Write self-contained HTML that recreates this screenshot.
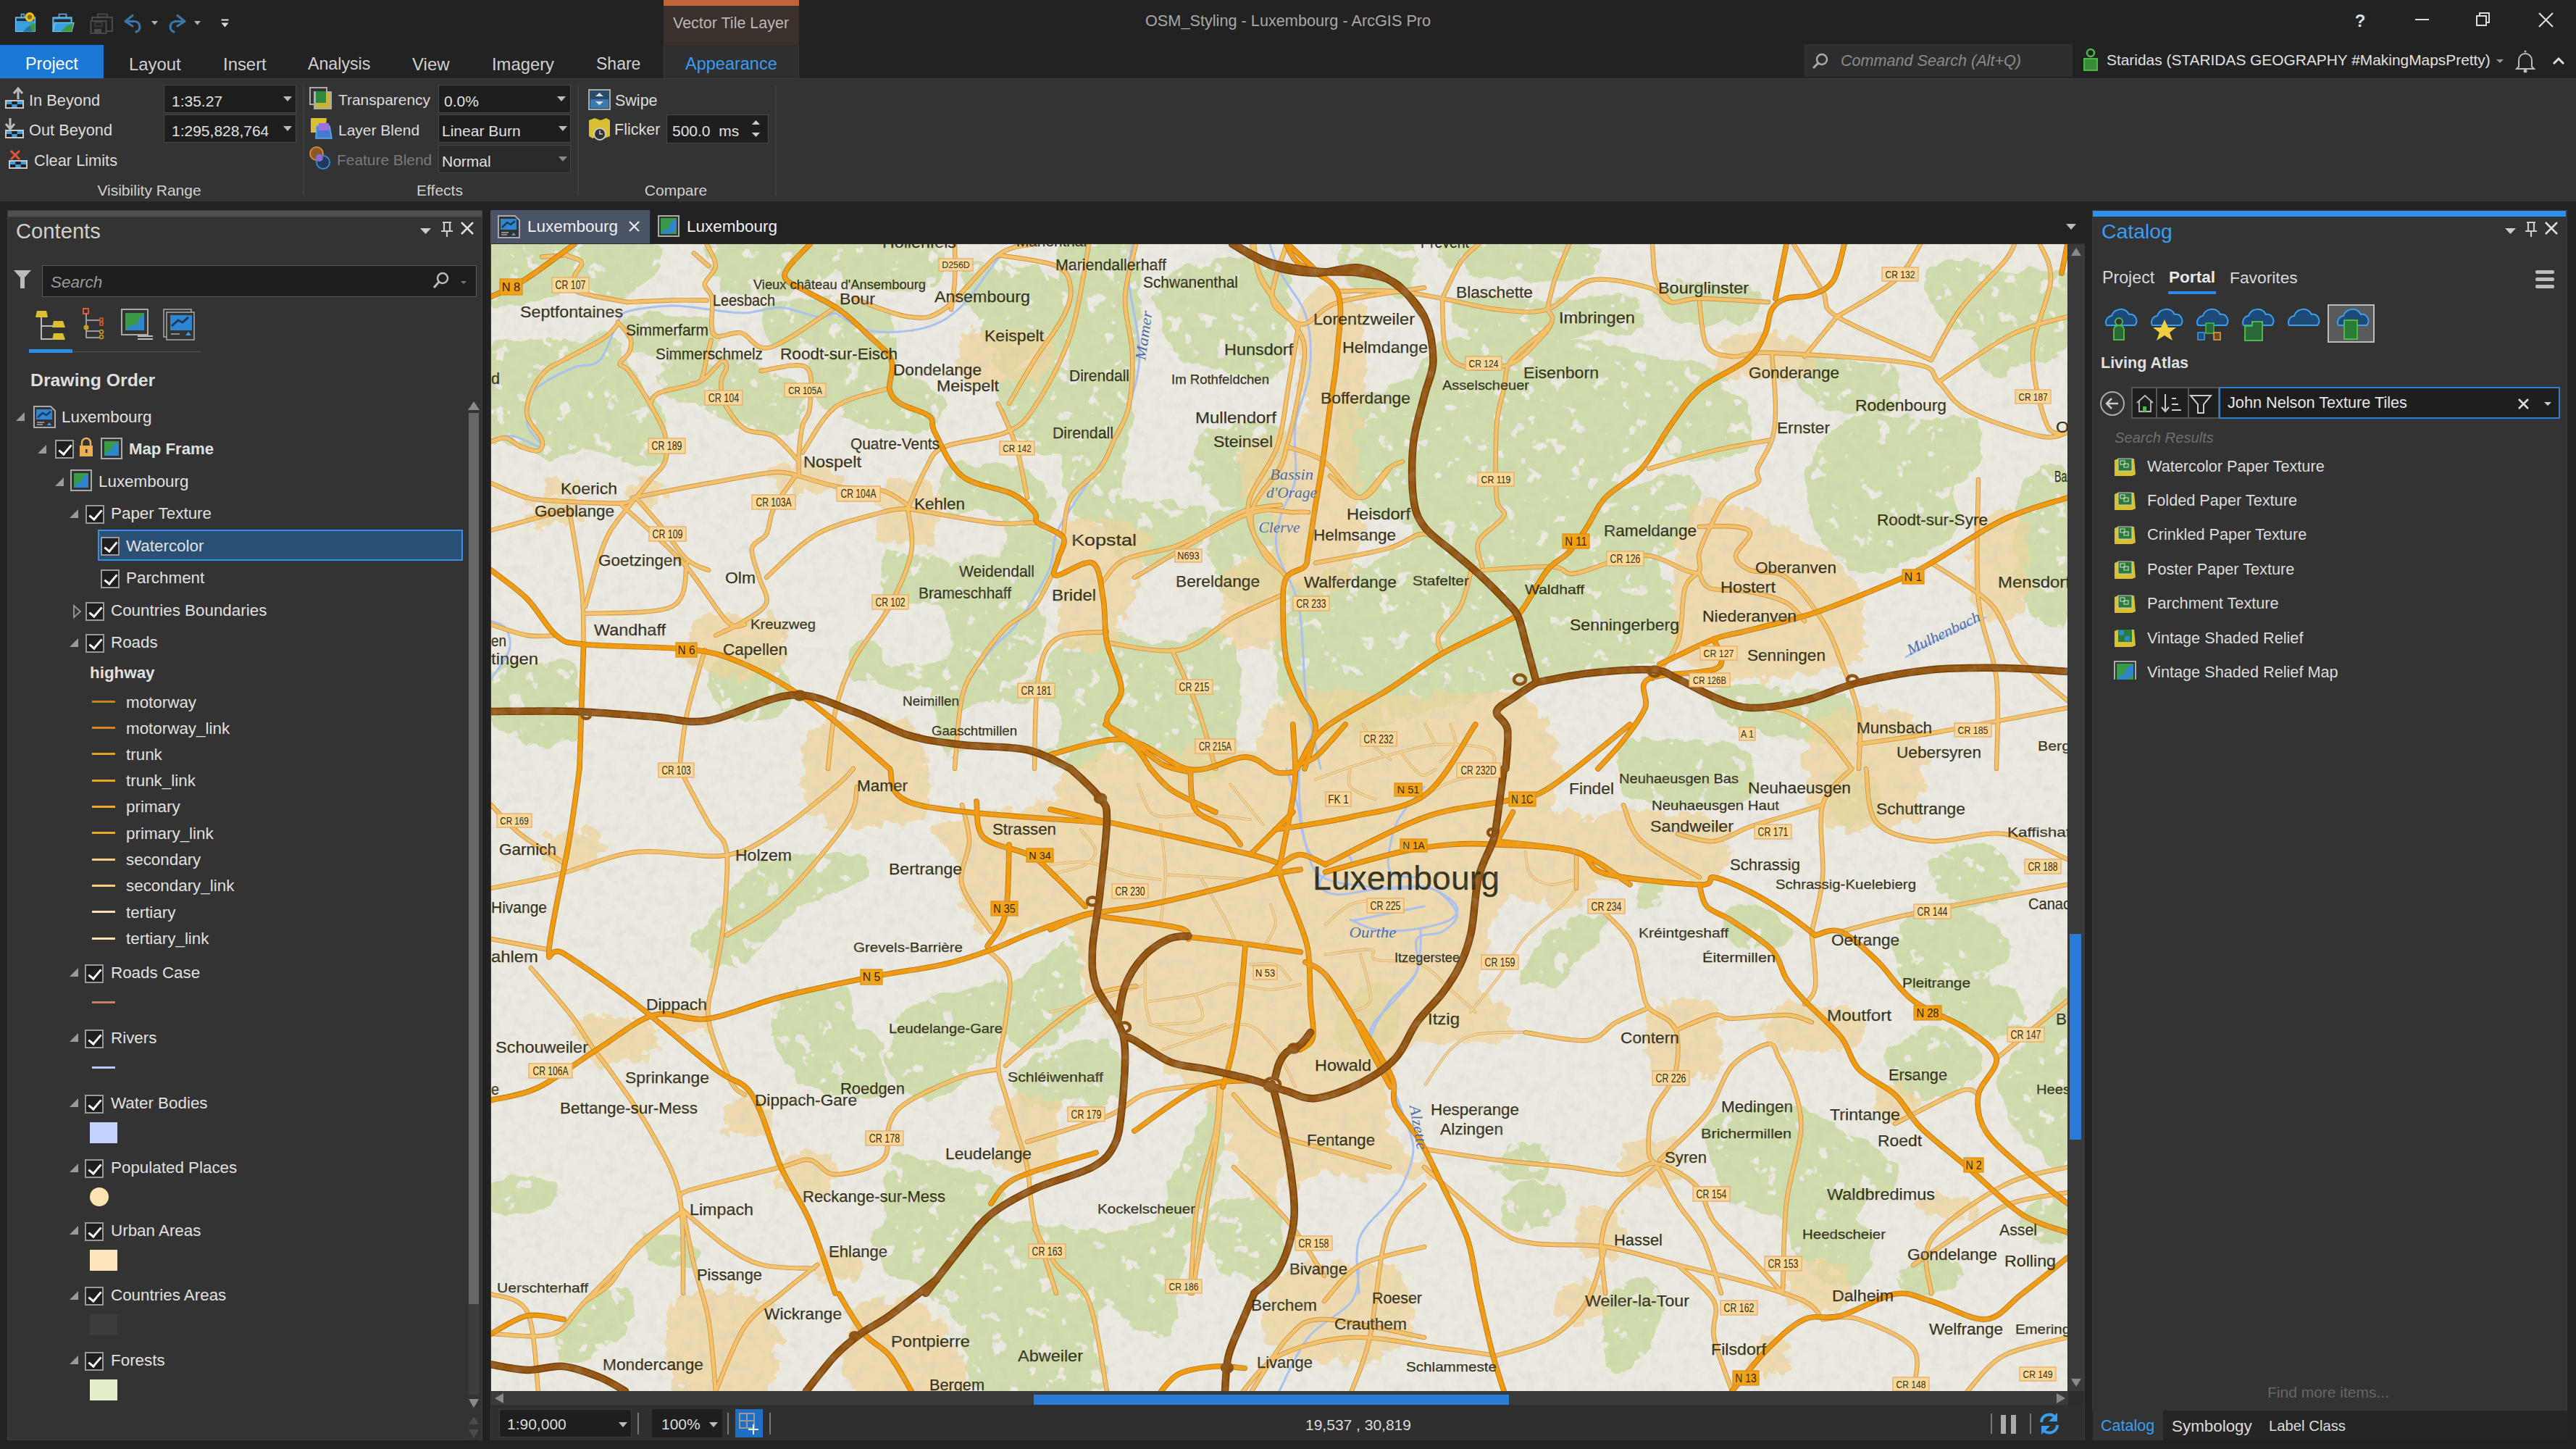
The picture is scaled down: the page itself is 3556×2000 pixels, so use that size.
<!DOCTYPE html>
<html><head><meta charset="utf-8">
<style>
*{margin:0;padding:0;box-sizing:border-box}
html,body{width:3556px;height:2000px;overflow:hidden;background:#222;font-family:"Liberation Sans",sans-serif;color:#ddd}
.a{position:absolute}
.t{position:absolute;white-space:nowrap;line-height:1}
.cb{position:absolute;background:#1e1e1e;border:1px solid #474747}
.dd{position:absolute;width:0;height:0;border-left:6px solid transparent;border-right:6px solid transparent;border-top:7px solid #bbb}
.sep{position:absolute;width:2px;background:#3d3d3d}
.chk{position:absolute;width:26px;height:26px;border:2px solid #9a9a9a;background:#1e1e1e}
.chk:after{content:"";position:absolute;left:7px;top:1px;width:7px;height:15px;border-right:3px solid #fff;border-bottom:3px solid #fff;transform:rotate(40deg)}
.tri{position:absolute;width:0;height:0;border-left:12px solid transparent;border-bottom:12px solid #9a9a9a}
.tree{font-size:22.4px;color:#e0e0e0}
.leg{position:absolute;width:32px;height:3px}
</style></head><body>
<!-- TITLE BAR -->
<div class="a" style="left:0;top:0;width:3556px;height:108px;background:#222"></div>
<svg class="a" style="left:0;top:0" width="330" height="62">
 <!-- new project -->
 <rect x="29.5" y="19.5" width="4" height="5" fill="none" stroke="#5ab0e8" stroke-width="1.6"/>
 <rect x="21.5" y="24" width="27" height="19.5" fill="#3a9ee0" stroke="#7cc4f0" stroke-width="1.2"/>
 <rect x="23" y="25.5" width="24" height="3.5" fill="#2a2a2a"/>
 <path d="M32 43.5 Q40 33 48.5 32 V43.5 Z" fill="#3a9a3a"/><path d="M32 43.5 Q38 37 42 36 L44 43.5 Z" fill="#2c70b0"/>
 <circle cx="41" cy="23.5" r="6.5" fill="#e8c020"/><circle cx="41" cy="23.5" r="3.2" fill="#8a7010"/>
 <!-- open -->
 <rect x="81.5" y="19.5" width="10" height="5" fill="none" stroke="#5ab0e8" stroke-width="1.6"/>
 <rect x="73" y="24" width="26" height="19.5" fill="#3a9ee0" stroke="#7cc4f0" stroke-width="1.2"/>
 <rect x="74.5" y="26.5" width="23" height="4" fill="#2a2a2a"/>
 <path d="M73 43.5 L76 31.5 H102 L99 43.5 Z" fill="#3a9ee0" stroke="#7cc4f0" stroke-width="1.2"/>
 <path d="M84 43.5 Q92 34 101 33 L99 43.5 Z" fill="#3a9a3a"/>
 <!-- save all grey -->
 <rect x="135" y="19.5" width="13" height="4" fill="none" stroke="#4a4a4a" stroke-width="1.8"/>
 <rect x="127" y="24" width="28" height="19" fill="none" stroke="#4a4a4a" stroke-width="2"/>
 <rect x="125.5" y="29" width="21" height="17" fill="#222" stroke="#4a4a4a" stroke-width="2"/>
 <rect x="130" y="40" width="10" height="5" fill="#4a4a4a"/><rect x="131" y="31" width="10" height="5" fill="none" stroke="#4a4a4a" stroke-width="1.2"/>
 <!-- undo -->
 <path d="M176 29.5 H186 A7.5 7.5 0 0 1 188 44" fill="none" stroke="#3e75a8" stroke-width="3.2" stroke-linecap="round"/>
 <path d="M183 21.5 L173 29.5 L183 36" fill="none" stroke="#3e75a8" stroke-width="3.2" stroke-linejoin="round" stroke-linecap="round"/>
 <path d="M209 29 h9 l-4.5 5.5 z" fill="#b0b0b0"/>
 <!-- redo -->
 <path d="M252 29.5 H242 A7.5 7.5 0 0 0 240 44" fill="none" stroke="#3e75a8" stroke-width="3.2" stroke-linecap="round"/>
 <path d="M245 21.5 L255 29.5 L245 36" fill="none" stroke="#3e75a8" stroke-width="3.2" stroke-linejoin="round" stroke-linecap="round"/>
 <path d="M268 29 h9 l-4.5 5.5 z" fill="#b0b0b0"/>
 <!-- customize -->
 <rect x="305.5" y="26.5" width="10" height="2" fill="#ddd"/>
 <path d="M305.5 31.5 h10 l-5 6 z" fill="#ddd"/>
</svg>
<div class="a" style="left:916px;top:0;width:187px;height:62px;background:#3a302c"></div>
<div class="a" style="left:916px;top:0;width:187px;height:8px;background:#c0643c"></div>
<div class="t" style="left:929px;top:22px;font-size:21.5px;color:#b8b8b8">Vector Tile Layer</div>
<div class="t" style="left:1581px;top:18px;font-size:21.7px;color:#a8a8a8">OSM_Styling - Luxembourg - ArcGIS Pro</div>
<svg class="a" style="left:3240px;top:0" width="316" height="62">
 <text x="18" y="37" font-family="Liberation Sans" font-weight="bold" font-size="24" fill="#ddd" text-anchor="middle">?</text>
 <rect x="94" y="26" width="19" height="2" fill="#ddd"/>
 <rect x="179" y="22" width="13" height="13" fill="none" stroke="#ddd" stroke-width="2"/>
 <path d="M183 22 v-4 h13 v13 h-4" fill="none" stroke="#ddd" stroke-width="2"/>
 <path d="M265 18 L284 37 M284 18 L265 37" stroke="#ddd" stroke-width="2.2"/>
</svg>
<!-- tabs -->
<div class="a" style="left:0;top:62px;width:143px;height:46px;background:#1b78d4"></div>
<div class="t" style="left:35px;top:77px;font-size:23.4px;color:#fff">Project</div>
<div class="t" style="left:178px;top:77px;font-size:23.9px;color:#d0d0d0">Layout</div>
<div class="t" style="left:308px;top:77px;font-size:23.9px;color:#d0d0d0">Insert</div>
<div class="t" style="left:425px;top:77px;font-size:23.2px;color:#d0d0d0">Analysis</div>
<div class="t" style="left:569px;top:77px;font-size:24px;color:#d0d0d0">View</div>
<div class="t" style="left:679px;top:77px;font-size:23.8px;color:#d0d0d0">Imagery</div>
<div class="t" style="left:823px;top:77px;font-size:23px;color:#d0d0d0">Share</div>
<div class="a" style="left:916px;top:62px;width:187px;height:47px;background:#2f2f2f;border-left:1px solid #3a3a3a;border-right:1px solid #3a3a3a"></div>
<div class="t" style="left:946px;top:77px;font-size:23.5px;color:#3a9cf0">Appearance</div>
<!-- command search -->
<div class="a" style="left:2490px;top:61px;width:371px;height:45px;background:#2e2e2e"></div>
<svg class="a" style="left:2500px;top:72px" width="26" height="26"><circle cx="15" cy="10" r="7" fill="none" stroke="#aaa" stroke-width="2.5"/><path d="M10 15 L3 22" stroke="#aaa" stroke-width="3"/></svg>
<div class="t" style="left:2541px;top:73px;font-size:21.6px;color:#8a8a8a;font-style:italic">Command Search (Alt+Q)</div>
<svg class="a" style="left:2872px;top:66px" width="28" height="34"><circle cx="14" cy="7" r="5" fill="none" stroke="#4cb848" stroke-width="2.5"/><path d="M5 15 h18 v16 h-18 z" fill="#3a8a3a" stroke="#4cb848" stroke-width="2"/></svg>
<div class="t" style="left:2908px;top:73px;font-size:20.9px;color:#e0e0e0">Staridas (STARIDAS GEOGRAPHY #MakingMapsPretty)</div>
<svg class="a" style="left:3440px;top:66px" width="116" height="36">
 <path d="M6 16 h10 l-5 5 z" fill="#999"/>
 <path d="M37 26 v-9 a9 9 0 0 1 18 0 v9 l3 3 h-24 z" fill="none" stroke="#bbb" stroke-width="2"/>
 <circle cx="46" cy="32" r="2.5" fill="#bbb"/><circle cx="46" cy="5" r="1.5" fill="#bbb"/>
 <path d="M85 22 L92 15 L99 22" fill="none" stroke="#ddd" stroke-width="3"/>
</svg>
<!-- RIBBON -->
<div class="a" style="left:0;top:108px;width:3556px;height:170px;background:#333;border-top:1px solid #3e3e3e"></div>
<svg class="a" style="left:0;top:108px" width="1080" height="170">
 <!-- in beyond icon -->
 <g transform="translate(0,-108)">
 <rect x="7" y="138" width="26" height="12" fill="#c8c8c8"/><rect x="9" y="140" width="22" height="8" fill="#1e1e1e"/><rect x="9" y="140" width="7.33" height="4" fill="#3a9de0"/><rect x="23.67" y="140" width="7.33" height="4" fill="#3a9de0"/><rect x="16.33" y="144" width="7.33" height="4" fill="#3a9de0"/>
 <path d="M25 137 v-14 M19 129 L25 122 L31 129" fill="none" stroke="#bbb" stroke-width="3"/>
 <rect x="7" y="179" width="26" height="12" fill="#c8c8c8"/><rect x="9" y="181" width="22" height="8" fill="#1e1e1e"/><rect x="9" y="181" width="7.33" height="4" fill="#3a9de0"/><rect x="23.67" y="181" width="7.33" height="4" fill="#3a9de0"/><rect x="16.33" y="185" width="7.33" height="4" fill="#3a9de0"/>
 <path d="M14 163 v14 M8 171 L14 178 L20 171" fill="none" stroke="#bbb" stroke-width="3"/>
 <rect x="12" y="221" width="26" height="12" fill="#c8c8c8"/><rect x="14" y="223" width="22" height="8" fill="#1e1e1e"/><rect x="14" y="223" width="7.33" height="4" fill="#3a9de0"/><rect x="28.67" y="223" width="7.33" height="4" fill="#3a9de0"/><rect x="21.33" y="227" width="7.33" height="4" fill="#3a9de0"/>
 <path d="M15 208 L27 220 M27 208 L15 220" stroke="#e05a30" stroke-width="3"/>
 <!-- transparency -->
 <rect x="428" y="121" width="23" height="23" fill="none" stroke="#aaa" stroke-width="2"/>
 <rect x="434" y="127" width="23" height="23" fill="#c8b43a" stroke="#aaa" stroke-width="2"/>
 <rect x="436" y="126" width="14" height="16" fill="#2e8a3e"/>
 <!-- layer blend -->
 <path d="M429 163 h22 l-2 20 h-20 z" fill="#d8c030"/>
 <path d="M437 174 h18 l3 17 h-22 z" fill="#4a7ad0" stroke="#5ab0f0" stroke-width="1.5"/>
 <path d="M440 170 h14 l1 10 h-16 z" fill="#9a70e0"/>
 <!-- feature blend -->
 <circle cx="437" cy="212" r="9" fill="#8a5a20" stroke="#d08a40" stroke-width="2"/>
 <circle cx="446" cy="224" r="9" fill="#1e3a5a" stroke="#3a8ad0" stroke-width="2"/>
 <circle cx="441" cy="218" r="5" fill="#8a6ad8"/>
 <!-- swipe -->
 <rect x="813" y="124" width="29" height="27" fill="#2a4a6a" stroke="#aaa" stroke-width="2"/>
 <rect x="815" y="137" width="25" height="12" fill="#3a7ab0"/>
 <path d="M822 133 l5.5 -5 l5.5 5 z M822 140 l5.5 5 l5.5 -5 z" fill="#ddd"/>
 <!-- flicker -->
 <path d="M813 166 l8 -3 l8 3 l8 -3 l5 3 v22 l-8 3 l-8 -3 l-8 3 l-5 -3 z" fill="#d8c030"/>
 <circle cx="828" cy="185" r="8" fill="#333" stroke="#ccc" stroke-width="2"/>
 <path d="M828 180 v5 h4" stroke="#ccc" stroke-width="1.5" fill="none"/>
 </g>
</svg>
<div class="t" style="left:40px;top:128px;font-size:21.8px;color:#dcdcdc">In Beyond</div>
<div class="t" style="left:40px;top:169px;font-size:21.8px;color:#dcdcdc">Out Beyond</div>
<div class="t" style="left:47px;top:211px;font-size:21.8px;color:#dcdcdc">Clear Limits</div>
<div class="cb" style="left:226px;top:117px;width:183px;height:39px"></div>
<div class="t" style="left:237px;top:129px;font-size:21px;color:#e0e0e0">1:35.27</div>
<div class="dd" style="left:391px;top:133px"></div>
<div class="cb" style="left:226px;top:158px;width:183px;height:39px"></div>
<div class="t" style="left:237px;top:170px;font-size:21px;color:#e0e0e0">1:295,828,764</div>
<div class="dd" style="left:391px;top:174px"></div>
<div class="t" style="left:206px;top:252px;font-size:21px;color:#d0d0d0;transform:translateX(-50%)">Visibility Range</div>
<div class="sep" style="left:418px;top:117px;height:153px"></div>

<div class="t" style="left:467px;top:128px;font-size:20.9px;color:#dcdcdc">Transparency</div>
<div class="t" style="left:467px;top:169px;font-size:21px;color:#dcdcdc">Layer Blend</div>
<div class="t" style="left:465px;top:211px;font-size:20.9px;color:#7a7a7a">Feature Blend</div>
<div class="cb" style="left:605px;top:117px;width:183px;height:39px"></div>
<div class="t" style="left:613px;top:129px;font-size:21px;color:#e0e0e0">0.0%</div>
<div class="dd" style="left:769px;top:133px"></div>
<div class="cb" style="left:605px;top:158px;width:183px;height:39px"></div>
<div class="t" style="left:610px;top:170px;font-size:21px;color:#e0e0e0">Linear Burn</div>
<div class="dd" style="left:771px;top:174px"></div>
<div class="cb" style="left:605px;top:200px;width:183px;height:39px;background:#2a2a2a;border-color:#444"></div>
<div class="t" style="left:610px;top:212px;font-size:21px;color:#e0e0e0">Normal</div>
<div class="dd" style="left:771px;top:216px;border-top-color:#888"></div>
<div class="t" style="left:607px;top:252px;font-size:21px;color:#d0d0d0;transform:translateX(-50%)">Effects</div>
<div class="sep" style="left:797px;top:117px;height:153px"></div>

<div class="t" style="left:849px;top:129px;font-size:21.5px;color:#dcdcdc">Swipe</div>
<div class="t" style="left:848px;top:169px;font-size:21.5px;color:#dcdcdc">Flicker</div>
<div class="cb" style="left:920px;top:158px;width:141px;height:40px"></div>
<div class="t" style="left:928px;top:170px;font-size:21px;color:#e0e0e0">500.0&nbsp;&nbsp;ms</div>
<svg class="a" style="left:1036px;top:162px" width="16" height="32"><path d="M2 10 L7.5 4 L13 10 z M2 21 L7.5 27 L13 21 z" fill="#ccc"/></svg>
<div class="t" style="left:933px;top:252px;font-size:21px;color:#d0d0d0;transform:translateX(-50%)">Compare</div>
<div class="sep" style="left:1070px;top:117px;height:153px"></div>
<!-- CONTENTS -->
<div class="a" style="left:10px;top:290px;width:656px;height:1698px;background:#333;border:1px solid #3c3c3c"></div>
<div class="a" style="left:11px;top:291px;width:654px;height:8px;background:#505050"></div>
<div class="t" style="left:22px;top:305px;font-size:29.2px;color:#cfcfcf">Contents</div>
<svg class="a" style="left:570px;top:300px" width="95" height="32">
 <path d="M10 15 h15 l-7.5 8 z" fill="#ccc"/>
 <path d="M41 7 h12 M43 7 v12 h8 v-12 M39 19 h16 M47 19 v8" fill="none" stroke="#ccc" stroke-width="2.2"/>
 <path d="M67 7 L83 23 M83 7 L67 23" stroke="#ddd" stroke-width="2.5"/>
</svg>
<svg class="a" style="left:16px;top:370px" width="32" height="34"><path d="M3 3 h24 l-9 10 v15 h-6 v-15 z" fill="#bbb"/></svg>
<div class="a" style="left:58px;top:366px;width:600px;height:44px;background:#1e1e1e;border:1px solid #5a5a5a"></div>
<div class="t" style="left:70px;top:379px;font-size:22.5px;color:#9a9a9a;font-style:italic">Search</div>
<svg class="a" style="left:596px;top:374px" width="50" height="30">
 <circle cx="15" cy="10" r="7" fill="none" stroke="#bbb" stroke-width="2.5"/><path d="M10 15 L3 23" stroke="#bbb" stroke-width="3"/>
 <path d="M40 14 h8 l-4 4 z" fill="#777"/>
</svg>
<svg class="a" style="left:40px;top:420px" width="240" height="70">
 <!-- drawing order icon -->
 <path d="M11 9 h13 l2 9 h-17 z" fill="#d8c030"/>
 <path d="M17 18 v30 h16 M17 30 h16" fill="none" stroke="#bbb" stroke-width="2"/>
 <path d="M34 23 h13 l3 9 h-18 z M34 40 h13 l3 9 h-18 z" fill="#d8c030"/>
 <!-- source icon -->
 <rect x="75" y="6" width="7" height="7" fill="none" stroke="#e05a30" stroke-width="2"/>
 <path d="M79 13 v33 h18 M79 22 h18 M79 37 h18" fill="none" stroke="#bbb" stroke-width="1.5"/>
 <rect x="98" y="19" width="4" height="4" fill="none" stroke="#e05a30" stroke-width="1.5"/><rect x="98" y="25" width="4" height="4" fill="none" stroke="#e05a30" stroke-width="1.5"/>
 <circle cx="79" cy="32" r="3.5" fill="#c8a020"/><circle cx="100" cy="38" r="2.5" fill="none" stroke="#c8a020" stroke-width="1.5"/><circle cx="100" cy="45" r="2.5" fill="none" stroke="#c8a020" stroke-width="1.5"/>
 <!-- map icon -->
 <rect x="128" y="7" width="36" height="35" fill="none" stroke="#aaa" stroke-width="2"/>
 <rect x="133" y="12" width="26" height="24" fill="#3a9a4a"/>
 <path d="M133 36 L142 28 L148 30 L152 20 L159 14 L159 36 z" fill="#2f86d0"/>
 <path d="M150 44 h21 M150 48 h21" stroke="#bbb" stroke-width="2"/>
 <!-- layout icon -->
 <rect x="186" y="7" width="38" height="38" fill="none" stroke="#aaa" stroke-width="1.5"/>
 <rect x="190" y="11" width="38" height="38" fill="#333" stroke="#aaa" stroke-width="1.5"/>
 <rect x="195" y="15" width="30" height="21" fill="#2f86d0"/>
 <path d="M197 30 L206 22 L212 25 L220 18" stroke="#1e3a5a" stroke-width="3" fill="none"/>
 <path d="M196 41 h12" stroke="#aaa" stroke-width="1.5"/>
 <path d="M216 43 l4 -5 l4 5 z" fill="#3aa0f0"/>
</svg>
<div class="a" style="left:40px;top:482px;width:60px;height:5px;background:#2d8ce6"></div>
<div class="a" style="left:100px;top:485px;width:178px;height:1px;background:#555"></div>
<div class="t" style="left:42px;top:513px;font-size:24.8px;color:#dedede;font-weight:bold">Drawing Order</div>

<div class="tree">
<div class="tri" style="left:22px;top:569px"></div>
<svg class="a" style="left:46px;top:560px" width="32" height="32">
 <path d="M1 1 h23 l6 6 v23 h-29 z" fill="#333" stroke="#aaa" stroke-width="2"/>
 <rect x="4" y="5" width="22" height="14" fill="#2f86d0"/>
 <path d="M6 16 L13 10 L18 13 L24 8" stroke="#1e3a5a" stroke-width="2.5" fill="none"/>
 <path d="M5 23 h10 M5 26 h8" stroke="#aaa" stroke-width="1.3"/><path d="M19 27 l3 -4 l3 4 z" fill="#3aa0f0"/>
</svg>
<div class="t" style="left:85px;top:565px">Luxembourg</div>

<div class="tri" style="left:52px;top:614px"></div>
<div class="chk" style="left:76px;top:607px"></div>
<svg class="a" style="left:107px;top:603px" width="24" height="30"><path d="M6 12 v-4 a6 6 0 0 1 12 0 v4" fill="none" stroke="#e8b050" stroke-width="2.5"/><rect x="3" y="12" width="18" height="15" fill="#e8b050"/><rect x="11" y="17" width="2.5" height="5" fill="#333"/></svg>
<svg class="a" style="left:139px;top:604px" width="31" height="31"><rect x="1" y="1" width="28" height="28" fill="#333" stroke="#aaa" stroke-width="2"/><rect x="5" y="5" width="20" height="20" fill="#3a9a4a"/><path d="M5 25 L10 18 L14 19 L18 10 L25 6 L25 25 z" fill="#2f86d0"/></svg>
<div class="t" style="left:178px;top:609px;font-weight:bold;font-size:22.2px">Map Frame</div>

<div class="tri" style="left:76px;top:659px"></div>
<svg class="a" style="left:97px;top:648px" width="31" height="31"><rect x="1" y="1" width="28" height="28" fill="#333" stroke="#aaa" stroke-width="2"/><rect x="5" y="5" width="20" height="20" fill="#3a9a4a"/><path d="M5 25 L10 18 L14 19 L18 10 L25 6 L25 25 z" fill="#2f86d0"/></svg>
<div class="t" style="left:136px;top:654px">Luxembourg</div>

<div class="tri" style="left:96px;top:703px"></div>
<div class="chk" style="left:118px;top:697px"></div>
<div class="t" style="left:153px;top:698px">Paper Texture</div>

<div class="a" style="left:135px;top:731px;width:504px;height:43px;background:#2b5075;border:2px solid #3a8ee6"></div>
<div class="chk" style="left:139px;top:741px"></div>
<div class="t" style="left:174px;top:743px">Watercolor</div>
<div class="chk" style="left:139px;top:786px"></div>
<div class="t" style="left:174px;top:787px">Parchment</div>

<svg class="a" style="left:100px;top:834px" width="14" height="20"><path d="M2 2 L11 10 L2 18 z" fill="none" stroke="#9a9a9a" stroke-width="1.8"/></svg>
<div class="chk" style="left:118px;top:831px"></div>
<div class="t" style="left:153px;top:832px">Countries Boundaries</div>

<div class="tri" style="left:96px;top:881px"></div>
<div class="chk" style="left:118px;top:875px"></div>
<div class="t" style="left:153px;top:876px">Roads</div>
<div class="t" style="left:124px;top:918px;font-weight:bold">highway</div>
<div class="leg" style="left:127px;top:967px;background:#c8841c"></div><div class="t" style="left:174px;top:959px">motorway</div>
<div class="leg" style="left:127px;top:1003px;background:#d08a1c"></div><div class="t" style="left:174px;top:995px">motorway_link</div>
<div class="leg" style="left:127px;top:1039px;background:#e8a020"></div><div class="t" style="left:174px;top:1031px">trunk</div>
<div class="leg" style="left:127px;top:1076px;background:#eaa422"></div><div class="t" style="left:174px;top:1067px">trunk_link</div>
<div class="leg" style="left:127px;top:1112px;background:#f0a828"></div><div class="t" style="left:174px;top:1103px">primary</div>
<div class="leg" style="left:127px;top:1148px;background:#f0a828"></div><div class="t" style="left:174px;top:1140px">primary_link</div>
<div class="leg" style="left:127px;top:1185px;background:#f8cc80"></div><div class="t" style="left:174px;top:1176px">secondary</div>
<div class="leg" style="left:127px;top:1221px;background:#f8cc80"></div><div class="t" style="left:174px;top:1212px">secondary_link</div>
<div class="leg" style="left:127px;top:1257px;background:#fbe4b0"></div><div class="t" style="left:174px;top:1249px">tertiary</div>
<div class="leg" style="left:127px;top:1294px;background:#fbe4b0"></div><div class="t" style="left:174px;top:1285px">tertiary_link</div>

<div class="tri" style="left:96px;top:1336px"></div>
<div class="chk" style="left:117px;top:1331px"></div>
<div class="t" style="left:153px;top:1332px">Roads Case</div>
<div class="leg" style="left:127px;top:1382px;background:#c8806a"></div>

<div class="tri" style="left:96px;top:1426px"></div>
<div class="chk" style="left:117px;top:1421px"></div>
<div class="t" style="left:153px;top:1422px">Rivers</div>
<div class="leg" style="left:127px;top:1472px;background:#b8c8f8"></div>

<div class="tri" style="left:96px;top:1516px"></div>
<div class="chk" style="left:117px;top:1511px"></div>
<div class="t" style="left:153px;top:1512px">Water Bodies</div>
<div class="a" style="left:124px;top:1549px;width:38px;height:29px;background:#c4d2ff"></div>

<div class="tri" style="left:96px;top:1606px"></div>
<div class="chk" style="left:117px;top:1600px"></div>
<div class="t" style="left:153px;top:1601px">Populated Places</div>
<div class="a" style="left:124px;top:1639px;width:26px;height:26px;border-radius:50%;background:#fde4b0"></div>

<div class="tri" style="left:96px;top:1692px"></div>
<div class="chk" style="left:117px;top:1687px"></div>
<div class="t" style="left:153px;top:1688px">Urban Areas</div>
<div class="a" style="left:124px;top:1725px;width:38px;height:29px;background:#fde6bc"></div>

<div class="tri" style="left:96px;top:1782px"></div>
<div class="chk" style="left:117px;top:1776px"></div>
<div class="t" style="left:153px;top:1777px">Countries Areas</div>
<div class="a" style="left:124px;top:1814px;width:38px;height:29px;background:#3c3c3c"></div>

<div class="tri" style="left:96px;top:1871px"></div>
<div class="chk" style="left:117px;top:1866px"></div>
<div class="t" style="left:153px;top:1867px">Forests</div>
<div class="a" style="left:124px;top:1904px;width:38px;height:29px;background:#e2eecc"></div>
</div>
<!-- contents scrollbar -->
<div class="a" style="left:646px;top:552px;width:15px;height:1436px;background:#333"></div>
<svg class="a" style="left:644px;top:550px" width="20" height="18"><path d="M2 16 L10 4 L18 16 z" fill="#8a8a8a"/></svg>
<div class="a" style="left:647px;top:570px;width:14px;height:1230px;background:#676767"></div>
<div class="a" style="left:647px;top:1800px;width:14px;height:125px;background:#3d3d3d"></div>
<svg class="a" style="left:644px;top:1928px" width="20" height="60"><path d="M3 3 L17 3 L10 15 z" fill="#8a8a8a"/><path d="M3 38 L10 27 L17 38 z" fill="#4a4a4a"/><path d="M3 45 L17 45 L10 57 z" fill="#4a4a4a"/></svg>
<!-- MAP FRAME -->
<div class="a" style="left:677px;top:290px;width:2201px;height:1698px;background:#2d2d2d;border:1px solid #3a3a3a"></div>
<div class="a" style="left:677px;top:290px;width:2201px;height:46px;background:#222"></div>
<div class="a" style="left:677px;top:290px;width:220px;height:46px;background:#4a5466"></div>
<svg class="a" style="left:687px;top:296px" width="32" height="34">
 <path d="M1 2 h23 l6 6 v24 h-29 z" fill="#333" stroke="#aaa" stroke-width="2"/>
 <rect x="4" y="6" width="22" height="15" fill="#2f86d0"/>
 <path d="M6 18 L13 11 L18 14 L24 9" stroke="#1e3a5a" stroke-width="2.5" fill="none"/>
 <path d="M5 25 h10 M5 28 h8" stroke="#aaa" stroke-width="1.3"/><path d="M19 29 l3 -4 l3 4 z" fill="#3aa0f0"/>
</svg>
<div class="t" style="left:728px;top:302px;font-size:22.5px;color:#f0f0f0">Luxembourg</div>
<svg class="a" style="left:866px;top:303px" width="20" height="20"><path d="M3 3 L16 16 M16 3 L3 16" stroke="#eee" stroke-width="2.2"/></svg>
<svg class="a" style="left:908px;top:297px" width="31" height="31"><rect x="1" y="1" width="28" height="28" fill="#333" stroke="#aaa" stroke-width="2"/><rect x="4" y="4" width="22" height="22" fill="#3a9a4a"/><path d="M4 26 L10 19 L14 20 L18 10 L26 5 L26 19 L20 24 z" fill="#2f86d0"/></svg>
<div class="t" style="left:948px;top:302px;font-size:22.5px;color:#f0f0f0">Luxembourg</div>
<svg class="a" style="left:2850px;top:306px" width="20" height="14"><path d="M2 3 h14 l-7 8 z" fill="#bbb"/></svg>
<!-- v scrollbar -->
<div class="a" style="left:2855px;top:337px;width:22px;height:1583px;background:#3a3a3a"></div>
<svg class="a" style="left:2856px;top:338px" width="20" height="18"><path d="M3 15 L10 4 L17 15 z" fill="#8a8a8a"/></svg>
<div class="a" style="left:2857px;top:1289px;width:16px;height:284px;background:#2a7bd6"></div>
<svg class="a" style="left:2856px;top:1900px" width="20" height="18"><path d="M3 3 L17 3 L10 14 z" fill="#8a8a8a"/></svg>
<!-- h scrollbar -->
<div class="a" style="left:678px;top:1920px;width:2177px;height:19px;background:#3a3a3a"></div>
<svg class="a" style="left:680px;top:1922px" width="18" height="16"><path d="M15 1 L15 15 L3 8 z" fill="#8a8a8a"/></svg>
<div class="a" style="left:1427px;top:1925px;width:656px;height:14px;background:#2a7bd6"></div>
<svg class="a" style="left:2836px;top:1922px" width="18" height="16"><path d="M3 1 L3 15 L15 8 z" fill="#8a8a8a"/></svg>
<!-- status bar -->
<div class="a" style="left:678px;top:1939px;width:2199px;height:49px;background:#2f2f2f"></div>
<div class="a" style="left:689px;top:1945px;width:183px;height:39px;background:#1e1e1e;border:1px solid #3a3a3a"></div>
<div class="t" style="left:700px;top:1955px;font-size:21px;color:#dcdcdc">1:90,000</div>
<div class="dd" style="left:854px;top:1963px"></div>
<div class="a" style="left:880px;top:1950px;width:2px;height:30px;background:#777"></div>
<div class="a" style="left:900px;top:1945px;width:97px;height:39px;background:#1e1e1e"></div>
<div class="t" style="left:913px;top:1955px;font-size:21px;color:#dcdcdc">100%</div>
<div class="dd" style="left:979px;top:1963px"></div>
<div class="a" style="left:1004px;top:1950px;width:2px;height:30px;background:#777"></div>
<div class="a" style="left:1015px;top:1945px;width:38px;height:39px;background:#1f6fc5"></div>
<svg class="a" style="left:1018px;top:1949px" width="34" height="34"><path d="M3 2 h20 v20 h-20 z M3 12 h20 M13 2 v20" fill="none" stroke="#999" stroke-width="2"/><path d="M22 17 v14 M15 24 h14" stroke="#eee" stroke-width="2"/></svg>
<div class="a" style="left:1062px;top:1950px;width:2px;height:30px;background:#777"></div>
<div class="t" style="left:1875px;top:1956px;font-size:21px;color:#dcdcdc;transform:translateX(-50%)">19,537 , 30,819</div>
<div class="a" style="left:2748px;top:1951px;width:2px;height:28px;background:#777"></div>
<div class="a" style="left:2762px;top:1953px;width:7px;height:26px;background:#aaa"></div>
<div class="a" style="left:2776px;top:1953px;width:7px;height:26px;background:#aaa"></div>
<div class="a" style="left:2802px;top:1951px;width:2px;height:28px;background:#777"></div>
<svg class="a" style="left:2812px;top:1947px" width="34" height="36">
 <path d="M6 16 a11 11 0 0 1 19 -7" fill="none" stroke="#3a9ef0" stroke-width="4"/>
 <path d="M28 3 v12 h-12 z" fill="#3a9ef0"/>
 <path d="M28 20 a11 11 0 0 1 -19 7" fill="none" stroke="#3a9ef0" stroke-width="4"/>
 <path d="M6 33 v-12 h12 z" fill="#3a9ef0"/>
</svg>
<svg class="a" style="left:678px;top:337px" width="2176" height="1583" viewBox="0 0 2176 1583">
<defs>
<filter id="rough" x="-2%" y="-2%" width="104%" height="104%"><feTurbulence type="fractalNoise" baseFrequency="0.035" numOctaves="3" seed="7"/><feDisplacementMap in="SourceGraphic" scale="22" xChannelSelector="R" yChannelSelector="G"/></filter>
<filter id="rough2" x="-3%" y="-3%" width="106%" height="106%"><feTurbulence type="fractalNoise" baseFrequency="0.05" numOctaves="3" seed="11"/><feDisplacementMap in="SourceGraphic" scale="34" xChannelSelector="R" yChannelSelector="G"/></filter>
<filter id="holes" x="-2%" y="-2%" width="104%" height="104%"><feTurbulence type="fractalNoise" baseFrequency="0.035" numOctaves="3" seed="7" result="t"/><feDisplacementMap in="SourceGraphic" in2="t" scale="22" xChannelSelector="R" yChannelSelector="G" result="d"/><feTurbulence type="fractalNoise" baseFrequency="0.045" numOctaves="3" seed="21" result="n"/><feColorMatrix in="n" type="matrix" values="0 0 0 0 0 0 0 0 0 0 0 0 0 0 0 16 0 0 0 -4.7" result="m"/><feComposite in="d" in2="m" operator="in"/></filter>
<filter id="paper" x="0" y="0" width="100%" height="100%"><feTurbulence type="fractalNoise" baseFrequency="0.07" numOctaves="4" seed="3"/><feColorMatrix type="matrix" values="0 0 0 0 0.55 0 0 0 0 0.53 0 0 0 0 0.5 0 0 0 1.3 -0.55"/></filter>
</defs>
<rect width="2176" height="1583" fill="#ece9e0"/>
<g fill="#cfdcab" filter="url(#holes)">
<path d="M0.0 0.0C36.4 -13.7 179.4 -4.6 218.6 0.0C257.7 4.6 236.8 18.2 235.0 27.3C233.2 36.4 217.7 46.4 207.7 54.6C197.6 62.8 187.6 75.6 174.9 76.5C162.1 77.4 146.6 61.0 131.1 60.1C115.7 59.2 98.4 67.4 82.0 71.0C65.6 74.7 46.4 80.1 32.8 82.0C19.1 83.8 5.5 95.6 0.0 82.0C-5.5 68.3 -36.4 13.7 0.0 0.0Z"/>
<path d="M0.0 142.1C9.1 119.3 36.4 132.1 54.6 131.1C72.9 130.2 92.0 138.4 109.3 136.6C126.6 134.8 145.7 116.6 158.5 120.2C171.2 123.9 175.8 144.8 185.8 158.5C195.8 172.1 209.5 187.6 218.6 202.2C227.7 216.8 237.7 228.6 240.4 245.9C243.2 263.2 245.0 297.4 235.0 306.0C225.0 314.7 197.6 301.5 180.3 297.8C163.0 294.2 146.6 284.2 131.1 284.2C115.7 284.2 101.1 297.8 87.4 297.8C73.8 297.8 61.0 288.3 49.2 284.2C37.3 280.1 24.6 276.0 16.4 273.2C8.2 270.5 2.7 289.6 0.0 267.8C-2.7 245.9 -9.1 164.8 0.0 142.1Z"/>
<path d="M180.3 103.8C188.5 95.6 225.0 97.4 245.9 98.4C266.8 99.3 296.0 101.1 306.0 109.3C316.0 117.5 315.1 140.3 306.0 147.5C296.9 154.8 269.6 153.0 251.4 153.0C233.2 153.0 208.6 155.7 196.7 147.5C184.9 139.3 172.1 112.0 180.3 103.8Z"/>
<path d="M240.4 158.5C255.9 149.4 304.2 150.3 327.9 153.0C351.5 155.7 366.1 167.6 382.5 174.9C398.9 182.1 418.9 183.1 426.2 196.7C433.5 210.4 433.5 245.9 426.2 256.8C418.9 267.8 398.9 265.0 382.5 262.3C366.1 259.6 346.1 247.7 327.9 240.4C309.7 233.2 288.7 224.0 273.2 218.6C257.7 213.1 240.4 217.7 235.0 207.7C229.5 197.6 225.0 167.6 240.4 158.5Z"/>
<path d="M306.0 0.0C335.2 -5.5 451.7 -5.5 480.9 0.0C510.0 5.5 488.2 22.8 480.9 32.8C473.6 42.8 453.6 53.7 437.2 60.1C420.8 66.5 400.7 70.1 382.5 71.0C364.3 71.9 340.6 71.9 327.9 65.6C315.1 59.2 309.7 43.7 306.0 32.8C302.4 21.9 276.9 5.5 306.0 0.0Z"/>
<path d="M382.5 82.0C397.1 73.8 442.6 74.7 469.9 76.5C497.3 78.3 532.8 80.1 546.4 92.9C560.1 105.6 561.0 143.9 551.9 153.0C542.8 162.1 514.6 148.5 491.8 147.5C469.0 146.6 433.5 151.2 415.3 147.5C397.1 143.9 388.0 136.6 382.5 125.7C377.0 114.8 367.9 90.2 382.5 82.0Z"/>
<path d="M448.1 158.5C464.5 150.3 518.2 150.3 546.4 158.5C574.7 166.7 605.6 192.2 617.5 207.7C629.3 223.1 629.3 243.2 617.5 251.4C605.6 259.6 569.2 258.7 546.4 256.8C523.7 255.0 497.3 248.6 480.9 240.4C464.5 232.2 453.6 221.3 448.1 207.7C442.6 194.0 431.7 166.7 448.1 158.5Z"/>
<path d="M480.9 0.0C501.8 -9.1 595.6 -9.1 617.5 0.0C639.3 9.1 623.9 43.7 612.0 54.6C600.2 65.6 566.5 65.6 546.4 65.6C526.4 65.6 502.7 65.6 491.8 54.6C480.9 43.7 459.9 9.1 480.9 0.0Z"/>
<path d="M655.7 32.8C667.6 23.7 704.9 23.7 726.8 27.3C748.6 31.0 776.0 36.4 786.9 54.6C797.8 72.9 796.0 116.6 792.3 136.6C788.7 156.6 778.7 167.6 765.0 174.9C751.4 182.1 724.0 187.6 710.4 180.3C696.7 173.0 692.2 147.5 683.1 131.1C674.0 114.8 660.3 98.4 655.7 82.0C651.2 65.6 643.9 41.9 655.7 32.8Z"/>
<path d="M710.4 180.3C723.1 167.6 768.7 155.7 786.9 163.9C805.1 172.1 816.0 209.5 819.7 229.5C823.3 249.5 819.7 275.0 808.7 284.2C797.8 293.3 770.5 291.4 754.1 284.2C737.7 276.9 717.7 257.7 710.4 240.4C703.1 223.1 697.6 193.1 710.4 180.3Z"/>
<path d="M786.9 0.0C801.5 -27.3 867.0 -18.2 885.2 0.0C903.5 18.2 896.2 72.9 896.2 109.3C896.2 145.7 888.9 185.8 885.2 218.6C881.6 251.4 879.8 278.7 874.3 306.0C868.9 333.3 864.3 371.6 852.5 382.5C840.6 393.4 814.2 389.8 803.3 371.6C792.3 353.4 787.8 307.8 786.9 273.2C786.0 238.6 797.8 209.5 797.8 163.9C797.8 118.4 772.3 27.3 786.9 0.0Z"/>
<path d="M929.0 43.7C953.6 25.5 1061.0 10.9 1087.4 32.8C1113.8 54.6 1100.2 151.2 1087.4 174.9C1074.7 198.5 1035.5 180.3 1010.9 174.9C986.3 169.4 953.6 163.9 939.9 142.1C926.2 120.2 904.4 61.9 929.0 43.7Z"/>
<path d="M983.6 262.3C1002.7 251.4 1070.1 235.0 1087.4 251.4C1104.7 267.8 1100.2 343.4 1087.4 360.7C1074.7 378.0 1030.1 362.5 1010.9 355.2C991.8 347.9 977.2 332.4 972.7 316.9C968.1 301.5 964.5 273.2 983.6 262.3Z"/>
<path d="M628.4 306.0C642.1 295.1 687.6 302.4 710.4 306.0C733.2 309.7 755.9 313.3 765.0 327.9C774.1 342.4 778.7 382.5 765.0 393.4C751.4 404.4 705.8 397.1 683.1 393.4C660.3 389.8 637.5 386.2 628.4 371.6C619.3 357.0 614.8 316.9 628.4 306.0Z"/>
<path d="M994.5 371.6C1007.3 355.2 1071.9 364.3 1087.4 382.5C1102.9 400.7 1100.2 464.5 1087.4 480.9C1074.7 497.3 1026.4 499.1 1010.9 480.9C995.4 462.7 981.8 388.0 994.5 371.6Z"/>
<path d="M0.0 590.2C18.2 577.4 88.3 568.3 109.3 579.2C130.2 590.2 125.7 637.5 125.7 655.7C125.7 674.0 124.8 684.0 109.3 688.5C93.8 693.1 51.0 688.5 32.8 683.1C14.6 677.6 5.5 671.2 0.0 655.7C-5.5 640.3 -18.2 602.9 0.0 590.2Z"/>
<path d="M306.0 579.2C318.8 567.4 375.2 565.6 393.4 573.8C411.7 582.0 417.1 614.8 415.3 628.4C413.5 642.1 398.9 653.0 382.5 655.7C366.1 658.5 329.7 657.6 316.9 644.8C304.2 632.1 293.3 591.1 306.0 579.2Z"/>
<path d="M1273.8 180.3C1282.0 162.1 1297.5 145.7 1317.5 136.6C1337.5 127.5 1368.5 128.4 1394.0 125.7C1419.5 123.0 1448.7 118.4 1470.5 120.2C1492.4 122.0 1502.4 131.1 1525.2 136.6C1547.9 142.1 1584.4 148.5 1607.1 153.0C1629.9 157.6 1645.4 158.5 1661.8 163.9C1678.2 169.4 1700.9 176.7 1705.5 185.8C1710.0 194.9 1700.9 209.5 1689.1 218.6C1677.3 227.7 1649.0 229.5 1634.4 240.4C1619.9 251.4 1612.6 273.2 1601.7 284.2C1590.7 295.1 1576.2 296.9 1568.9 306.0C1561.6 315.1 1547.0 337.0 1557.9 338.8C1568.9 340.6 1616.2 316.9 1634.4 316.9C1652.7 316.9 1663.6 327.9 1667.2 338.8C1670.9 349.7 1661.8 369.8 1656.3 382.5C1650.8 395.3 1641.7 404.4 1634.4 415.3C1627.2 426.2 1612.6 435.3 1612.6 448.1C1612.6 460.8 1630.8 475.4 1634.4 491.8C1638.1 508.2 1639.0 531.9 1634.4 546.4C1629.9 561.0 1625.3 572.9 1607.1 579.2C1588.9 585.6 1547.9 581.1 1525.2 584.7C1502.4 588.3 1485.1 597.4 1470.5 601.1C1455.9 604.7 1455.9 608.4 1437.7 606.6C1419.5 604.7 1383.1 596.5 1361.2 590.2C1339.4 583.8 1321.2 575.6 1306.6 568.3C1292.0 561.0 1280.2 568.3 1273.8 546.4C1267.4 524.6 1268.3 473.6 1268.3 437.2C1268.3 400.7 1273.8 359.7 1273.8 327.9C1273.8 296.0 1268.3 270.5 1268.3 245.9C1268.3 221.3 1265.6 198.5 1273.8 180.3Z"/>
<path d="M1607.1 207.7C1614.4 193.1 1646.3 194.9 1667.2 196.7C1688.2 198.5 1721.9 204.0 1732.8 218.6C1743.7 233.2 1741.9 271.4 1732.8 284.2C1723.7 296.9 1696.4 295.1 1678.2 295.1C1659.9 295.1 1635.4 298.7 1623.5 284.2C1611.7 269.6 1599.8 222.2 1607.1 207.7Z"/>
<path d="M1170.0 218.6C1179.1 202.2 1207.3 211.3 1224.6 207.7C1241.9 204.0 1265.6 169.4 1273.8 196.7C1282.0 224.0 1278.3 340.6 1273.8 371.6C1269.2 402.6 1259.2 386.2 1246.5 382.5C1233.7 378.9 1210.0 362.5 1197.3 349.7C1184.5 337.0 1174.5 327.9 1170.0 306.0C1165.4 284.2 1160.9 235.0 1170.0 218.6Z"/>
<path d="M1088.0 491.8C1097.1 463.6 1119.9 468.1 1142.6 459.0C1165.4 449.9 1199.1 446.3 1224.6 437.2C1250.1 428.1 1274.7 402.6 1295.7 404.4C1316.6 406.2 1333.9 433.5 1350.3 448.1C1366.7 462.7 1381.3 479.1 1394.0 491.8C1406.8 504.6 1419.5 506.4 1426.8 524.6C1434.1 542.8 1448.7 583.8 1437.7 601.1C1426.8 618.4 1392.2 619.3 1361.2 628.4C1330.3 637.5 1283.8 647.5 1251.9 655.7C1220.1 663.9 1192.7 677.6 1170.0 677.6C1147.2 677.6 1129.0 663.9 1115.3 655.7C1101.7 647.5 1092.6 655.7 1088.0 628.4C1083.4 601.1 1078.9 520.0 1088.0 491.8Z"/>
<path d="M1175.4 0.0C1190.0 -9.1 1252.8 -10.9 1268.3 0.0C1283.8 10.9 1275.6 53.7 1268.3 65.6C1261.0 77.4 1239.2 72.9 1224.6 71.0C1210.0 69.2 1189.1 66.5 1180.9 54.6C1172.7 42.8 1160.9 9.1 1175.4 0.0Z"/>
<path d="M1317.5 0.0C1347.6 -6.4 1483.3 -7.3 1514.2 0.0C1545.2 7.3 1519.7 35.5 1503.3 43.7C1486.9 51.9 1444.1 50.1 1415.9 49.2C1387.6 48.3 1350.3 46.4 1333.9 38.3C1317.5 30.1 1287.5 6.4 1317.5 0.0Z"/>
<path d="M1328.4 76.5C1337.5 66.5 1392.2 71.0 1415.9 71.0C1439.5 71.0 1443.2 76.5 1470.5 76.5C1497.8 76.5 1561.6 63.8 1579.8 71.0C1598.0 78.3 1598.0 111.1 1579.8 120.2C1561.6 129.3 1506.9 123.9 1470.5 125.7C1434.1 127.5 1384.9 139.3 1361.2 131.1C1337.5 123.0 1319.3 86.5 1328.4 76.5Z"/>
<path d="M1612.6 60.1C1624.4 52.8 1667.2 53.7 1689.1 54.6C1711.0 55.6 1734.6 57.4 1743.7 65.6C1752.8 73.8 1757.4 96.5 1743.7 103.8C1730.1 111.1 1682.7 110.2 1661.8 109.3C1640.8 108.4 1626.3 106.6 1618.1 98.4C1609.9 90.2 1600.8 67.4 1612.6 60.1Z"/>
<path d="M1809.3 163.9C1820.2 155.7 1858.5 156.6 1880.3 158.5C1902.2 160.3 1932.3 163.0 1940.5 174.9C1948.7 186.7 1944.1 220.4 1929.5 229.5C1915.0 238.6 1872.2 233.2 1853.0 229.5C1833.9 225.9 1822.1 218.6 1814.8 207.7C1807.5 196.7 1798.4 172.1 1809.3 163.9Z"/>
<path d="M1820.2 306.0C1828.4 282.3 1851.2 251.4 1874.9 240.4C1898.6 229.5 1933.2 239.5 1962.3 240.4C1991.5 241.3 2035.2 235.0 2049.7 245.9C2064.3 256.8 2055.2 290.5 2049.7 306.0C2044.3 321.5 2020.6 326.0 2017.0 338.8C2013.3 351.5 2033.4 367.9 2027.9 382.5C2022.4 397.1 2004.2 414.4 1984.2 426.2C1964.1 438.1 1927.7 451.7 1907.7 453.6C1887.6 455.4 1877.6 449.0 1864.0 437.2C1850.3 425.3 1833.0 404.4 1825.7 382.5C1818.4 360.7 1812.0 329.7 1820.2 306.0Z"/>
<path d="M1984.2 32.8C1996.0 23.7 2047.0 14.6 2060.7 27.3C2074.3 40.1 2073.4 94.7 2066.1 109.3C2058.9 123.9 2029.7 119.3 2017.0 114.8C2004.2 110.2 1995.1 95.6 1989.6 82.0C1984.2 68.3 1972.3 41.9 1984.2 32.8Z"/>
<path d="M2049.7 54.6C2070.8 38.3 2154.9 29.1 2176.0 43.7C2197.0 58.3 2186.1 122.0 2176.0 142.1C2165.9 162.1 2132.7 156.6 2115.3 163.9C2097.9 171.2 2082.5 189.4 2071.6 185.8C2060.7 182.1 2053.4 163.9 2049.7 142.1C2046.1 120.2 2028.7 71.0 2049.7 54.6Z"/>
<path d="M2115.3 327.9C2127.3 311.5 2165.9 284.2 2176.0 316.9C2186.1 349.7 2186.1 495.4 2176.0 524.6C2165.9 553.7 2127.3 510.0 2115.3 491.8C2103.4 473.6 2104.4 442.6 2104.4 415.3C2104.4 388.0 2103.4 344.3 2115.3 327.9Z"/>
<path d="M1689.1 617.5C1700.9 610.2 1740.1 610.2 1771.1 612.0C1802.0 613.8 1857.6 616.6 1874.9 628.4C1892.2 640.3 1887.6 674.0 1874.9 683.1C1862.1 692.2 1827.5 687.6 1798.4 683.1C1769.2 678.5 1718.2 666.7 1700.0 655.7C1681.8 644.8 1677.3 624.8 1689.1 617.5Z"/>
<path d="M1557.9 688.5C1569.8 676.7 1605.3 681.2 1634.4 683.1C1663.6 684.9 1716.4 685.8 1732.8 699.5C1749.2 713.1 1749.2 752.3 1732.8 765.0C1716.4 777.8 1662.7 777.8 1634.4 776.0C1606.2 774.1 1576.2 768.7 1563.4 754.1C1550.7 739.5 1546.1 700.4 1557.9 688.5Z"/>
<path d="M1853.0 737.7C1862.1 727.8 1897.7 723.2 1907.7 732.2C1917.7 741.3 1922.2 781.9 1913.1 791.8C1904.0 801.7 1863.0 800.8 1853.0 791.8C1843.0 782.8 1843.9 747.6 1853.0 737.7Z"/>
<path d="M278.7 955.9C280.5 945.9 293.3 944.1 306.0 928.6C318.8 913.1 337.0 876.7 355.2 863.0C373.4 849.4 392.5 850.3 415.3 846.6C438.1 843.0 473.6 838.4 491.8 841.2C510.0 843.9 524.6 854.8 524.6 863.0C524.6 871.2 504.6 884.0 491.8 890.4C479.1 896.7 462.7 894.0 448.1 901.3C433.5 908.6 417.1 922.2 404.4 934.1C391.6 945.9 382.5 961.4 371.6 972.3C360.7 983.3 351.5 996.9 338.8 999.7C326.0 1002.4 305.1 996.0 295.1 988.7C285.1 981.4 276.9 966.0 278.7 955.9Z"/>
<path d="M382.5 1054.3C387.1 1043.4 397.1 1037.0 415.3 1032.4C433.5 1027.9 477.2 1019.7 491.8 1027.0C506.4 1034.3 495.4 1064.3 502.7 1076.2C510.0 1088.0 529.1 1081.6 535.5 1098.0C541.9 1114.4 548.3 1161.8 541.0 1174.5C533.7 1187.3 509.1 1176.3 491.8 1174.5C474.5 1172.7 451.7 1170.9 437.2 1163.6C422.6 1156.3 412.6 1141.7 404.4 1130.8C396.2 1119.9 391.6 1110.8 388.0 1098.0C384.3 1085.3 378.0 1065.2 382.5 1054.3Z"/>
<path d="M546.4 1119.9C547.4 1100.7 557.4 1068.9 573.8 1054.3C590.2 1039.7 622.0 1037.9 644.8 1032.4C667.6 1027.0 699.5 1010.6 710.4 1021.5C721.3 1032.4 717.7 1079.8 710.4 1098.0C703.1 1116.2 680.3 1118.0 666.7 1130.8C653.0 1143.5 644.8 1168.1 628.4 1174.5C612.0 1180.9 582.0 1178.2 568.3 1169.0C554.6 1159.9 545.5 1139.0 546.4 1119.9Z"/>
<path d="M710.4 1032.4C718.6 1013.3 748.6 996.9 765.0 983.3C781.4 969.6 799.6 944.1 808.7 950.5C817.9 956.8 819.7 1000.6 819.7 1021.5C819.7 1042.5 817.9 1061.6 808.7 1076.2C799.6 1090.7 780.5 1105.3 765.0 1108.9C749.5 1112.6 725.0 1110.8 715.8 1098.0C706.7 1085.3 702.2 1051.6 710.4 1032.4Z"/>
<path d="M726.8 1141.7C735.9 1128.1 765.9 1115.3 786.9 1108.9C807.8 1102.6 838.8 1092.5 852.5 1103.5C866.1 1114.4 878.0 1159.0 868.9 1174.5C859.7 1190.0 820.6 1193.6 797.8 1196.4C775.0 1199.1 744.1 1200.0 732.2 1190.9C720.4 1181.8 717.7 1155.4 726.8 1141.7Z"/>
<path d="M541.0 1294.7C544.6 1281.1 553.7 1260.1 568.3 1256.5C582.9 1252.8 609.3 1268.3 628.4 1272.9C647.5 1277.4 669.4 1277.4 683.1 1283.8C696.7 1290.2 707.7 1302.0 710.4 1311.1C713.1 1320.2 694.0 1332.1 699.5 1338.4C704.9 1344.8 727.7 1346.6 743.2 1349.4C758.7 1352.1 770.5 1353.0 792.3 1354.8C814.2 1356.7 851.5 1363.0 874.3 1360.3C897.1 1357.6 918.0 1351.2 929.0 1338.4C939.9 1325.7 930.8 1305.7 939.9 1283.8C949.0 1261.9 972.7 1225.5 983.6 1207.3C994.5 1189.1 1000.9 1170.9 1005.5 1174.5C1010.0 1178.2 1012.8 1206.4 1010.9 1229.2C1009.1 1251.9 1000.9 1292.9 994.5 1311.1C988.2 1329.3 974.5 1328.4 972.7 1338.4C970.9 1348.5 987.2 1357.6 983.6 1371.2C980.0 1384.9 958.1 1398.6 950.8 1420.4C943.5 1442.3 949.0 1488.7 939.9 1502.4C930.8 1516.0 910.7 1508.8 896.2 1502.4C881.6 1496.0 863.4 1464.1 852.5 1464.1C841.5 1464.1 832.4 1482.4 830.6 1502.4C828.8 1522.3 867.0 1570.2 841.5 1583.8C816.0 1597.4 708.6 1591.9 677.6 1583.8C646.6 1575.7 662.1 1552.4 655.7 1535.2C649.4 1518.0 648.5 1495.1 639.3 1480.5C630.2 1466.0 616.6 1458.7 601.1 1447.7C585.6 1436.8 559.2 1427.7 546.4 1415.0C533.7 1402.2 524.6 1384.0 524.6 1371.2C524.6 1358.5 543.7 1351.2 546.4 1338.4C549.2 1325.7 537.3 1308.4 541.0 1294.7Z"/>
<path d="M983.6 1338.4C988.2 1322.1 1020.9 1318.4 1038.3 1316.6C1055.6 1314.8 1079.7 1309.3 1088.0 1327.5C1096.3 1345.7 1100.8 1411.3 1088.0 1425.9C1075.1 1440.5 1028.3 1429.5 1010.9 1415.0C993.5 1400.4 979.1 1354.8 983.6 1338.4Z"/>
<path d="M0.0 1294.7C7.3 1286.5 29.1 1282.9 43.7 1283.8C58.3 1284.7 82.0 1292.0 87.4 1300.2C92.9 1308.4 85.6 1326.6 76.5 1333.0C67.4 1339.4 45.5 1338.4 32.8 1338.4C20.0 1338.4 5.5 1340.3 0.0 1333.0C-5.5 1325.7 -7.3 1302.9 0.0 1294.7Z"/>
<path d="M207.7 1371.2C213.1 1364.9 237.7 1362.1 251.4 1365.8C265.0 1369.4 287.8 1385.8 289.6 1393.1C291.4 1400.4 274.1 1407.7 262.3 1409.5C250.5 1411.3 227.7 1410.4 218.6 1404.0C209.5 1397.6 202.2 1377.6 207.7 1371.2Z"/>
<path d="M98.4 1491.5C108.4 1476.0 136.6 1454.1 153.0 1447.7C169.4 1441.4 191.3 1444.1 196.7 1453.2C202.2 1462.3 196.7 1487.8 185.8 1502.4C174.9 1517.0 146.6 1534.3 131.1 1540.6C115.7 1547.0 98.4 1548.8 92.9 1540.6C87.4 1532.4 88.3 1506.9 98.4 1491.5Z"/>
<path d="M1421.3 1010.6C1423.2 1003.3 1429.5 988.7 1437.7 977.8C1445.9 966.9 1459.6 953.2 1470.5 945.0C1481.4 936.8 1492.4 930.4 1503.3 928.6C1514.2 926.8 1532.4 927.7 1536.1 934.1C1539.7 940.5 1532.4 956.8 1525.2 966.9C1517.9 976.9 1501.5 985.1 1492.4 994.2C1483.3 1003.3 1481.4 1017.0 1470.5 1021.5C1459.6 1026.1 1435.0 1023.3 1426.8 1021.5C1418.6 1019.7 1419.5 1017.9 1421.3 1010.6Z"/>
<path d="M1700.0 923.1C1704.6 914.0 1728.3 908.6 1743.7 912.2C1759.2 915.9 1788.4 935.0 1792.9 945.0C1797.5 955.0 1783.8 968.7 1771.1 972.3C1758.3 976.0 1728.3 975.1 1716.4 966.9C1704.6 958.7 1695.5 932.3 1700.0 923.1Z"/>
<path d="M1940.5 945.0C1948.7 930.4 1971.4 916.8 1989.6 912.2C2007.9 907.7 2032.4 908.6 2049.7 917.7C2067.1 926.8 2089.8 951.4 2093.5 966.9C2097.1 982.3 2069.8 999.7 2071.6 1010.6C2073.4 1021.5 2097.1 1021.5 2104.4 1032.4C2111.7 1043.4 2120.8 1065.2 2115.3 1076.2C2109.9 1087.1 2088.0 1098.0 2071.6 1098.0C2055.2 1098.0 2031.5 1085.3 2017.0 1076.2C2002.4 1067.0 1996.9 1056.1 1984.2 1043.4C1971.4 1030.6 1947.7 1016.0 1940.5 999.7C1933.2 983.3 1932.3 959.6 1940.5 945.0Z"/>
<path d="M1989.6 846.6C1998.7 835.7 2031.5 823.0 2049.7 824.8C2068.0 826.6 2090.7 844.8 2098.9 857.6C2107.1 870.3 2108.9 892.2 2098.9 901.3C2088.9 910.4 2056.1 914.0 2038.8 912.2C2021.5 910.4 2003.3 901.3 1995.1 890.4C1986.9 879.4 1980.5 857.6 1989.6 846.6Z"/>
<path d="M1929.5 1119.9C1931.4 1105.3 1947.7 1092.5 1962.3 1087.1C1976.9 1081.6 2000.6 1079.8 2017.0 1087.1C2033.4 1094.4 2060.7 1116.2 2060.7 1130.8C2060.7 1145.4 2035.2 1167.2 2017.0 1174.5C1998.7 1181.8 1966.0 1183.6 1951.4 1174.5C1936.8 1165.4 1927.7 1134.4 1929.5 1119.9Z"/>
<path d="M2082.5 1141.7C2088.0 1123.5 2110.7 1117.1 2126.3 1098.0C2141.8 1078.9 2167.7 999.7 2176.0 1027.0C2184.3 1054.3 2184.3 1226.4 2176.0 1261.9C2167.7 1297.5 2140.0 1249.2 2126.3 1240.1C2112.5 1231.0 2100.8 1223.7 2093.5 1207.3C2086.2 1190.9 2077.1 1159.9 2082.5 1141.7Z"/>
<path d="M2115.3 1327.5C2123.6 1318.4 2165.9 1309.3 2176.0 1316.6C2186.1 1323.9 2184.3 1362.1 2176.0 1371.2C2167.7 1380.3 2136.4 1378.5 2126.3 1371.2C2116.1 1363.9 2107.0 1336.6 2115.3 1327.5Z"/>
<path d="M1672.7 1218.2C1677.3 1203.7 1695.5 1201.8 1716.4 1196.4C1737.4 1190.9 1781.1 1185.4 1798.4 1185.4C1815.7 1185.4 1806.6 1189.1 1820.2 1196.4C1833.9 1203.7 1862.1 1218.2 1880.3 1229.2C1898.6 1240.1 1919.5 1251.0 1929.5 1261.9C1939.5 1272.9 1944.1 1285.6 1940.5 1294.7C1936.8 1303.8 1916.8 1309.3 1907.7 1316.6C1898.6 1323.9 1885.8 1327.5 1885.8 1338.4C1885.8 1349.4 1905.9 1367.6 1907.7 1382.2C1909.5 1396.7 1904.0 1416.8 1896.7 1425.9C1889.5 1435.0 1876.7 1438.6 1864.0 1436.8C1851.2 1435.0 1832.1 1424.1 1820.2 1415.0C1808.4 1405.8 1801.1 1394.9 1792.9 1382.2C1784.7 1369.4 1783.8 1347.6 1771.1 1338.4C1758.3 1329.3 1730.1 1336.6 1716.4 1327.5C1702.8 1318.4 1696.4 1302.0 1689.1 1283.8C1681.8 1265.6 1668.1 1232.8 1672.7 1218.2Z"/>
<path d="M1383.1 1272.9C1383.1 1264.7 1403.1 1249.2 1415.9 1245.6C1428.6 1241.9 1452.3 1244.6 1459.6 1251.0C1466.9 1257.4 1466.9 1276.5 1459.6 1283.8C1452.3 1291.1 1428.6 1296.6 1415.9 1294.7C1403.1 1292.9 1383.1 1281.1 1383.1 1272.9Z"/>
<path d="M1394.0 1316.6C1401.3 1308.4 1423.2 1297.5 1437.7 1294.7C1452.3 1292.0 1476.0 1292.0 1481.4 1300.2C1486.9 1308.4 1479.6 1333.9 1470.5 1343.9C1461.4 1353.9 1439.5 1360.3 1426.8 1360.3C1414.0 1360.3 1399.5 1351.2 1394.0 1343.9C1388.5 1336.6 1386.7 1324.8 1394.0 1316.6Z"/>
<path d="M1536.1 1464.1C1541.6 1452.3 1557.0 1435.9 1568.9 1431.3C1580.7 1426.8 1600.8 1425.0 1607.1 1436.8C1613.5 1448.6 1611.7 1484.2 1607.1 1502.4C1602.6 1520.6 1590.7 1537.9 1579.8 1546.1C1568.9 1554.3 1548.8 1558.8 1541.6 1551.6C1534.3 1544.3 1537.0 1517.0 1536.1 1502.4C1535.2 1487.8 1530.6 1476.0 1536.1 1464.1Z"/>
<path d="M1940.5 1420.4C1945.9 1412.2 1969.6 1399.5 1984.2 1398.6C1998.7 1397.6 2023.3 1406.8 2027.9 1415.0C2032.4 1423.1 2024.2 1442.3 2011.5 1447.7C1998.7 1453.2 1963.2 1452.3 1951.4 1447.7C1939.5 1443.2 1935.0 1428.6 1940.5 1420.4Z"/>
<path d="M1164.5 1076.2C1168.1 1059.8 1193.6 1027.0 1208.2 1021.5C1222.8 1016.0 1246.5 1028.8 1251.9 1043.4C1257.4 1057.9 1251.9 1096.2 1241.0 1108.9C1230.1 1121.7 1199.1 1125.3 1186.4 1119.9C1173.6 1114.4 1160.9 1092.5 1164.5 1076.2Z"/>
<path d="M1585.3 879.4C1589.8 873.1 1608.0 868.5 1612.6 874.0C1617.1 879.4 1617.1 905.8 1612.6 912.2C1608.0 918.6 1589.8 917.7 1585.3 912.2C1580.7 906.8 1580.7 885.8 1585.3 879.4Z"/>
<path d="M540.7 432.0C548.5 415.0 578.9 435.2 587.6 426.5C596.3 417.7 574.7 388.3 593.1 379.6C611.5 370.8 673.6 372.2 698.0 374.0C722.4 375.9 725.6 385.5 739.4 390.6C753.2 395.7 773.0 395.2 780.8 404.4C788.6 413.6 790.9 432.0 786.3 445.8C781.7 459.6 756.4 473.4 753.2 487.2C750.0 501.0 769.3 512.5 767.0 528.6C764.7 544.7 750.9 570.0 739.4 583.8C727.9 597.6 711.4 606.8 698.0 611.4C684.7 616.0 673.2 611.4 659.4 611.4C645.6 611.4 631.8 611.4 615.2 611.4C598.6 611.4 579.3 613.7 560.0 611.4C540.7 609.1 508.9 606.8 499.3 597.6C489.6 588.4 495.1 567.7 502.0 556.2C508.9 544.7 534.2 549.3 540.7 528.6C547.1 507.9 532.9 449.0 540.7 432.0Z"/>
<path d="M615.2 605.9C629.0 595.8 675.0 607.3 698.0 605.9C721.0 604.5 739.4 605.9 753.2 597.6C767.0 589.3 764.3 565.9 780.8 556.2C797.4 546.5 840.6 521.2 852.6 539.6C864.5 558.1 855.3 636.3 852.6 666.6C849.8 697.0 852.6 714.5 836.0 721.8C819.5 729.2 771.6 718.6 753.2 710.8C734.8 703.0 741.7 677.7 725.6 674.9C709.5 672.1 672.3 688.7 656.6 694.2C641.0 699.7 638.7 712.6 631.8 708.0C624.9 703.4 618.0 683.6 615.2 666.6C612.4 649.6 601.4 616.0 615.2 605.9Z"/>
<path d="M852.6 539.6C863.6 520.3 890.6 550.2 918.8 550.7C947.1 551.1 1004.9 513.9 1022.1 542.4C1039.3 570.9 1034.7 691.0 1022.1 721.8C1009.5 752.6 968.2 728.3 946.4 727.3C924.6 726.4 906.9 726.4 891.2 716.3C875.6 706.2 859.0 696.1 852.6 666.6C846.1 637.2 841.5 559.0 852.6 539.6Z"/>
<path d="M852.6 363.0C871.0 351.5 953.8 353.8 974.0 363.0C994.3 372.2 983.2 406.2 974.0 418.2C964.8 430.2 937.2 432.5 918.8 434.8C900.4 437.1 874.7 444.0 863.6 432.0C852.6 420.0 834.2 374.5 852.6 363.0Z"/>
</g>
<g fill="#ece9e0" filter="url(#rough)"><path d="M537.9 506.5C551.7 495.5 606.0 495.5 620.7 506.5C635.5 517.6 640.1 561.7 626.3 572.8C612.4 583.8 552.6 583.8 537.9 572.8C523.2 561.7 524.1 517.6 537.9 506.5Z"/><path d="M593.1 379.6C610.6 370.8 680.5 366.2 698.0 374.0C715.5 381.9 715.5 417.7 698.0 426.5C680.5 435.2 610.6 434.3 593.1 426.5C575.6 418.7 575.6 388.3 593.1 379.6Z"/><path d="M656.6 639.0C675.9 629.4 753.2 627.1 772.5 636.3C791.9 645.5 791.9 684.6 772.5 694.2C753.2 703.9 675.9 703.4 656.6 694.2C637.3 685.0 637.3 648.7 656.6 639.0Z"/></g>
<g fill="#f0d59c" filter="url(#rough2)" opacity="0.72">
<path d="M644.8 792.0C718.7 781.1 1014.1 708.2 1088.0 792.0C1161.8 875.8 1096.3 1212.8 1088.0 1294.7C1079.7 1376.7 1052.0 1298.4 1038.3 1283.8C1024.5 1269.2 1014.6 1225.5 1005.5 1207.3C996.4 1189.1 996.4 1185.4 983.6 1174.5C970.9 1163.6 943.5 1154.5 929.0 1141.7C914.4 1129.0 908.9 1110.8 896.2 1098.0C883.4 1085.3 865.2 1078.0 852.5 1065.2C839.7 1052.5 827.0 1039.7 819.7 1021.5C812.4 1003.3 817.9 969.6 808.7 955.9C799.6 942.3 784.2 939.5 765.0 939.5C745.9 939.5 712.2 959.6 694.0 955.9C675.8 952.3 663.9 934.1 655.7 917.7C647.5 901.3 646.6 878.5 644.8 857.6C643.0 836.6 570.9 802.9 644.8 792.0Z"/>
<path d="M1088.0 792.0C1157.2 713.7 1434.1 772.0 1503.3 792.0C1572.5 812.0 1521.5 892.2 1503.3 912.2C1485.1 932.3 1419.5 886.7 1394.0 912.2C1368.5 937.7 1374.0 1030.6 1350.3 1065.2C1326.6 1099.8 1270.1 1092.5 1251.9 1119.9C1233.7 1147.2 1231.9 1201.8 1241.0 1229.2C1250.1 1256.5 1321.2 1274.7 1306.6 1283.8C1292.0 1292.9 1190.0 1287.4 1153.6 1283.8C1117.1 1280.2 1098.9 1343.9 1088.0 1261.9C1077.1 1180.0 1018.8 870.3 1088.0 792.0Z"/>
<path d="M1088.0 628.4C1115.3 600.3 1192.7 622.0 1251.9 623.0C1311.1 623.9 1411.3 605.7 1443.2 633.9C1475.1 662.0 1502.4 765.5 1443.2 791.8C1384.0 818.1 1147.2 819.0 1088.0 791.8C1028.8 764.6 1060.7 656.6 1088.0 628.4Z"/>
<path d="M819.7 710.4C866.2 695.9 1043.3 691.3 1088.0 704.9C1132.7 718.5 1134.5 777.3 1088.0 791.8C1041.4 806.3 853.5 805.4 808.7 791.8C764.0 778.2 773.1 724.9 819.7 710.4Z"/>
<path d="M437.2 672.1C458.1 650.4 546.4 652.1 573.8 661.2C601.1 670.3 598.4 705.0 601.1 726.8C603.8 748.5 615.7 781.0 590.2 791.8C564.7 802.6 473.6 811.7 448.1 791.8C422.6 771.9 416.2 693.9 437.2 672.1Z"/>
<path d="M1120.8 82.0C1132.6 52.8 1184.5 48.3 1197.3 76.5C1210.0 104.7 1209.1 222.2 1197.3 251.4C1185.4 280.5 1139.0 279.6 1126.3 251.4C1113.5 223.1 1108.9 111.1 1120.8 82.0Z"/>
<path d="M1088.0 262.3C1104.4 229.5 1170.0 229.5 1186.4 262.3C1202.8 295.1 1202.8 426.2 1186.4 459.0C1170.0 491.8 1104.4 491.8 1088.0 459.0C1071.6 426.2 1071.6 295.1 1088.0 262.3Z"/>
<path d="M1705.5 131.1C1723.7 123.0 1796.6 123.0 1814.8 131.1C1833.0 139.3 1833.0 172.1 1814.8 180.3C1796.6 188.5 1723.7 188.5 1705.5 180.3C1687.3 172.1 1687.3 139.3 1705.5 131.1Z"/>
<path d="M1650.8 371.6C1666.3 337.0 1706.4 357.0 1743.7 371.6C1781.1 386.2 1853.0 424.4 1874.9 459.0C1896.7 493.6 1912.2 559.2 1874.9 579.2C1837.5 599.3 1688.2 613.8 1650.8 579.2C1613.5 544.6 1635.4 406.2 1650.8 371.6Z"/>
<path d="M1831.2 655.7C1853.0 633.1 1940.5 633.1 1962.3 655.7C1984.2 678.4 1984.2 769.1 1962.3 791.8C1940.5 814.5 1853.0 814.5 1831.2 791.8C1809.3 769.1 1809.3 678.4 1831.2 655.7Z"/>
<path d="M2049.7 382.5C2060.7 362.5 2104.4 362.5 2115.3 382.5C2126.3 402.6 2126.3 482.7 2115.3 502.7C2104.4 522.8 2060.7 522.8 2049.7 502.7C2038.8 482.7 2038.8 402.6 2049.7 382.5Z"/>
<path d="M792.3 393.4C810.6 367.9 883.4 386.2 901.6 393.4C919.9 400.7 908.9 411.7 901.6 437.2C894.4 462.7 876.1 528.2 857.9 546.4C839.7 564.7 803.3 571.9 792.3 546.4C781.4 520.9 774.1 418.9 792.3 393.4Z"/>
<path d="M541.0 333.3C552.8 321.5 600.2 321.5 612.0 333.3C623.9 345.2 623.9 392.5 612.0 404.4C600.2 416.2 552.8 416.2 541.0 404.4C529.1 392.5 529.1 345.2 541.0 333.3Z"/>
<path d="M655.7 125.7C674.0 115.7 746.8 115.7 765.0 125.7C783.2 135.7 783.2 175.8 765.0 185.8C746.8 195.8 674.0 195.8 655.7 185.8C637.5 175.8 637.5 135.7 655.7 125.7Z"/>
<path d="M393.4 306.0C406.2 300.5 457.2 300.5 469.9 306.0C482.7 311.5 482.7 333.3 469.9 338.8C457.2 344.3 406.2 344.3 393.4 338.8C380.7 333.3 380.7 311.5 393.4 306.0Z"/>
<path d="M77.0 325.7C82.5 321.1 109.2 318.8 114.8 322.4C120.3 326.0 115.8 343.0 110.4 347.5C104.9 352.1 87.5 353.4 82.0 349.7C76.4 346.1 71.6 330.2 77.0 325.7Z"/>
<path d="M55.2 359.0C64.9 353.8 108.7 350.6 118.6 355.2C128.5 359.7 124.5 381.1 114.8 386.3C105.0 391.5 70.0 390.9 60.1 386.3C50.2 381.8 45.4 364.2 55.2 359.0Z"/>
<path d="M192.9 331.1C199.2 326.0 227.9 323.2 234.4 327.9C241.0 332.5 238.5 353.8 232.2 359.0C226.0 364.2 203.3 363.7 196.7 359.0C190.2 354.4 186.6 336.3 192.9 331.1Z"/>
<path d="M284.2 519.1C302.4 507.3 375.2 507.3 393.4 519.1C411.7 531.0 411.7 578.3 393.4 590.2C375.2 602.0 302.4 602.0 284.2 590.2C265.9 578.3 265.9 531.0 284.2 519.1Z"/>
<path d="M1016.4 448.1C1028.3 431.7 1076.0 431.7 1088.0 448.1C1099.9 464.5 1099.9 530.1 1088.0 546.4C1076.0 562.8 1028.3 562.8 1016.4 546.4C1004.5 530.1 1004.5 464.5 1016.4 448.1Z"/>
<path d="M1038.3 273.2C1046.5 260.5 1079.7 260.5 1088.0 273.2C1096.3 286.0 1096.3 337.0 1088.0 349.7C1079.7 362.5 1046.5 362.5 1038.3 349.7C1030.0 337.0 1030.0 286.0 1038.3 273.2Z"/>
<path d="M82.0 813.9C92.9 806.6 136.6 806.6 147.5 813.9C158.5 821.1 158.5 850.3 147.5 857.6C136.6 864.9 92.9 864.9 82.0 857.6C71.0 850.3 71.0 821.1 82.0 813.9Z"/>
<path d="M120.2 1076.2C126.6 1065.2 162.1 1063.4 180.3 1065.2C198.5 1067.0 223.1 1078.0 229.5 1087.1C235.9 1096.2 233.2 1112.6 218.6 1119.9C204.0 1127.2 158.5 1138.1 142.1 1130.8C125.7 1123.5 113.8 1087.1 120.2 1076.2Z"/>
<path d="M235.0 1054.3C243.2 1049.7 285.1 1054.3 295.1 1059.8C305.1 1065.2 303.3 1082.5 295.1 1087.1C286.9 1091.6 255.9 1092.5 245.9 1087.1C235.9 1081.6 226.8 1058.8 235.0 1054.3Z"/>
<path d="M327.9 1185.4C337.0 1178.2 373.4 1178.2 382.5 1185.4C391.6 1192.7 391.6 1221.9 382.5 1229.2C373.4 1236.4 337.0 1236.4 327.9 1229.2C318.8 1221.9 318.8 1192.7 327.9 1185.4Z"/>
<path d="M704.9 1185.4C716.8 1170.9 764.1 1170.9 776.0 1185.4C787.8 1200.0 787.8 1258.3 776.0 1272.9C764.1 1287.4 716.8 1287.4 704.9 1272.9C693.1 1258.3 693.1 1200.0 704.9 1185.4Z"/>
<path d="M404.4 1256.5C415.3 1247.4 459.0 1247.4 469.9 1256.5C480.9 1265.6 480.9 1302.0 469.9 1311.1C459.0 1320.2 415.3 1320.2 404.4 1311.1C393.4 1302.0 393.4 1265.6 404.4 1256.5Z"/>
<path d="M459.0 1393.1C466.3 1387.6 495.4 1387.6 502.7 1393.1C510.0 1398.6 510.0 1420.4 502.7 1425.9C495.4 1431.3 466.3 1431.3 459.0 1425.9C451.7 1420.4 451.7 1398.6 459.0 1393.1Z"/>
<path d="M502.7 1469.6C519.1 1450.6 575.6 1450.6 601.1 1469.6C626.6 1488.6 672.1 1564.8 655.7 1583.8C639.3 1602.8 528.2 1602.8 502.7 1583.8C477.2 1564.8 486.3 1488.6 502.7 1469.6Z"/>
<path d="M256.8 1458.7C277.8 1437.8 361.6 1437.8 382.5 1458.7C403.5 1479.5 403.5 1562.9 382.5 1583.8C361.6 1604.7 277.8 1604.7 256.8 1583.8C235.9 1562.9 235.9 1479.5 256.8 1458.7Z"/>
<path d="M1525.2 792.0C1552.5 778.3 1661.8 778.3 1689.1 792.0C1716.4 805.7 1716.4 860.3 1689.1 874.0C1661.8 887.6 1552.5 887.6 1525.2 874.0C1497.8 860.3 1497.8 805.7 1525.2 792.0Z"/>
<path d="M1601.7 1054.3C1616.2 1039.7 1674.5 1039.7 1689.1 1054.3C1703.7 1068.9 1703.7 1127.2 1689.1 1141.7C1674.5 1156.3 1616.2 1156.3 1601.7 1141.7C1587.1 1127.2 1587.1 1068.9 1601.7 1054.3Z"/>
<path d="M1771.1 1054.3C1789.3 1045.2 1862.1 1045.2 1880.3 1054.3C1898.6 1063.4 1898.6 1099.8 1880.3 1108.9C1862.1 1118.0 1789.3 1118.0 1771.1 1108.9C1752.8 1099.8 1752.8 1063.4 1771.1 1054.3Z"/>
<path d="M1568.9 1240.1C1579.8 1231.0 1623.5 1231.0 1634.4 1240.1C1645.4 1249.2 1645.4 1285.6 1634.4 1294.7C1623.5 1303.8 1579.8 1303.8 1568.9 1294.7C1557.9 1285.6 1557.9 1249.2 1568.9 1240.1Z"/>
<path d="M1503.3 1338.4C1512.4 1329.3 1548.8 1329.3 1557.9 1338.4C1567.1 1347.6 1567.1 1384.0 1557.9 1393.1C1548.8 1402.2 1512.4 1402.2 1503.3 1393.1C1494.2 1384.0 1494.2 1347.6 1503.3 1338.4Z"/>
<path d="M1798.4 1409.5C1810.2 1400.4 1857.6 1400.4 1869.4 1409.5C1881.3 1418.6 1881.3 1455.0 1869.4 1464.1C1857.6 1473.2 1810.2 1473.2 1798.4 1464.1C1786.5 1455.0 1786.5 1418.6 1798.4 1409.5Z"/>
<path d="M1481.4 1436.8C1490.6 1429.5 1527.0 1429.5 1536.1 1436.8C1545.2 1444.1 1545.2 1473.2 1536.1 1480.5C1527.0 1487.8 1490.6 1487.8 1481.4 1480.5C1472.3 1473.2 1472.3 1444.1 1481.4 1436.8Z"/>
<path d="M1088.0 1420.4C1115.3 1402.2 1224.6 1402.2 1251.9 1420.4C1279.3 1438.6 1279.3 1511.5 1251.9 1529.7C1224.6 1547.9 1115.3 1547.9 1088.0 1529.7C1060.7 1511.5 1060.7 1438.6 1088.0 1420.4Z"/>
<path d="M1743.7 1513.3C1751.0 1506.0 1780.2 1506.0 1787.5 1513.3C1794.7 1520.6 1794.7 1549.7 1787.5 1557.0C1780.2 1564.3 1751.0 1564.3 1743.7 1557.0C1736.5 1549.7 1736.5 1520.6 1743.7 1513.3Z"/>
<path d="M1284.7 1043.4C1302.9 1034.3 1375.8 1034.3 1394.0 1043.4C1412.2 1052.5 1412.2 1088.9 1394.0 1098.0C1375.8 1107.1 1302.9 1107.1 1284.7 1098.0C1266.5 1088.9 1266.5 1052.5 1284.7 1043.4Z"/>
<path d="M1918.6 1163.6C1925.9 1156.3 1955.0 1156.3 1962.3 1163.6C1969.6 1170.9 1969.6 1200.0 1962.3 1207.3C1955.0 1214.6 1925.9 1214.6 1918.6 1207.3C1911.3 1200.0 1911.3 1170.9 1918.6 1163.6Z"/>
<path d="M1973.2 1316.6C1985.1 1312.9 2032.4 1312.9 2044.3 1316.6C2056.1 1320.2 2056.1 1334.8 2044.3 1338.4C2032.4 1342.1 1985.1 1342.1 1973.2 1338.4C1961.4 1334.8 1961.4 1320.2 1973.2 1316.6Z"/>
</g>
<g fill="none" stroke="#a9c1f2" stroke-width="3" stroke-linejoin="round" stroke-linecap="round">
<path d="M300.0 90.0C291.7 89.2 268.3 84.6 250.0 85.0C231.7 85.4 202.5 88.8 190.0 92.5C177.5 96.2 181.7 96.2 175.0 107.5C168.3 118.8 160.0 149.6 150.0 160.0C140.0 170.4 127.5 165.0 115.0 170.0C102.5 175.0 85.0 183.3 75.0 190.0C65.0 196.7 59.2 200.0 55.0 210.0C50.8 220.0 47.5 238.3 50.0 250.0C52.5 261.7 73.3 277.5 70.0 280.0C66.7 282.5 41.7 266.7 30.0 265.0C18.3 263.3 5.0 269.2 0.0 270.0"/>
<path d="M300.0 90.0C308.3 90.8 333.3 95.4 350.0 95.0C366.7 94.6 383.3 86.7 400.0 87.5C416.7 88.3 437.5 98.8 450.0 100.0C462.5 101.2 470.8 95.8 475.0 95.0"/>
<path d="M475.0 95.0C483.3 99.2 504.2 116.7 525.0 120.0C545.8 123.3 579.2 120.8 600.0 115.0C620.8 109.2 633.3 100.8 650.0 85.0C666.7 69.2 687.5 34.2 700.0 20.0C712.5 5.8 720.8 3.3 725.0 0.0"/>
<path d="M885.0 0.0C884.2 8.3 878.3 25.0 880.0 50.0C881.7 75.0 895.0 120.8 895.0 150.0C895.0 179.2 887.5 201.7 880.0 225.0C872.5 248.3 861.7 269.2 850.0 290.0C838.3 310.8 821.7 331.7 810.0 350.0C798.3 368.3 786.7 383.3 780.0 400.0C773.3 416.7 779.2 429.2 770.0 450.0C760.8 470.8 738.3 506.7 725.0 525.0C711.7 543.3 702.5 543.3 690.0 560.0C677.5 576.7 658.3 597.7 650.0 625.0C641.7 652.3 641.7 707.5 640.0 724.0"/>
<path d="M1075.0 0.0C1077.5 6.7 1081.7 23.3 1090.0 40.0C1098.3 56.7 1118.3 77.5 1125.0 100.0C1131.7 122.5 1132.5 150.0 1130.0 175.0C1127.5 200.0 1113.3 225.0 1110.0 250.0C1106.7 275.0 1113.3 304.2 1110.0 325.0C1106.7 345.8 1094.2 358.3 1090.0 375.0C1085.8 391.7 1080.8 404.2 1085.0 425.0C1089.2 445.8 1108.3 466.7 1115.0 500.0C1121.7 533.3 1120.0 587.7 1125.0 625.0C1130.0 662.3 1141.7 707.5 1145.0 724.0"/>
<path d="M0.0 520.0C3.3 521.7 15.8 523.3 20.0 530.0C24.2 536.7 28.3 548.3 25.0 560.0C21.7 571.7 4.2 593.3 0.0 600.0"/>
<path d="M1288.0 749.0C1281.7 757.3 1258.0 779.8 1250.0 799.0C1242.0 818.2 1235.0 851.5 1240.0 864.0C1245.0 876.5 1273.3 872.3 1280.0 874.0"/>
<path d="M1098.0 724.0C1100.5 732.3 1108.8 757.3 1113.0 774.0C1117.2 790.7 1117.2 807.3 1123.0 824.0C1128.8 840.7 1128.8 863.2 1148.0 874.0C1167.2 884.8 1213.0 886.5 1238.0 889.0C1263.0 891.5 1282.2 883.2 1298.0 889.0C1313.8 894.8 1330.5 914.0 1333.0 924.0C1335.5 934.0 1322.2 943.2 1313.0 949.0C1303.8 954.8 1283.8 949.8 1278.0 959.0C1272.2 968.2 1284.7 989.0 1278.0 1004.0C1271.3 1019.0 1248.8 1032.3 1238.0 1049.0C1227.2 1065.7 1213.0 1087.3 1213.0 1104.0C1213.0 1120.7 1230.5 1133.2 1238.0 1149.0C1245.5 1164.8 1252.2 1182.3 1258.0 1199.0C1263.8 1215.7 1273.0 1232.3 1273.0 1249.0C1273.0 1265.7 1263.8 1286.5 1258.0 1299.0C1252.2 1311.5 1248.0 1311.5 1238.0 1324.0C1228.0 1336.5 1204.7 1353.3 1198.0 1374.0C1191.3 1394.7 1198.0 1435.7 1198.0 1448.0"/>
<path d="M1188.0 934.0C1196.3 932.3 1221.3 927.3 1238.0 924.0C1254.7 920.7 1279.7 915.7 1288.0 914.0"/>
<path d="M1198.0 1409.0C1196.3 1417.3 1199.7 1442.3 1188.0 1459.0C1176.3 1475.7 1144.7 1488.3 1128.0 1509.0C1111.3 1529.7 1094.7 1570.7 1088.0 1583.0"/>
<path d="M1953.0 570.0C1958.8 566.7 1969.7 559.2 1988.0 550.0C2006.3 540.8 2050.5 520.8 2063.0 515.0"/>
<path d="M1141.3 663.0C1137.3 671.6 1121.2 694.6 1117.1 714.8C1113.1 734.9 1115.4 763.7 1117.1 783.8C1118.9 803.9 1121.7 824.1 1127.5 835.6C1133.2 847.1 1143.0 851.7 1151.6 852.8C1160.3 854.0 1173.5 841.9 1179.2 842.5C1185.0 843.0 1190.8 851.7 1186.2 856.3C1181.5 860.9 1158.5 864.9 1151.6 870.1C1144.7 875.3 1141.9 882.7 1144.7 887.3C1147.6 891.9 1156.2 897.1 1168.9 897.7C1181.5 898.3 1200.5 892.5 1220.7 890.8C1240.8 889.1 1271.3 883.9 1289.7 887.3C1308.1 890.8 1325.4 904.0 1331.1 911.5C1336.9 919.0 1334.0 926.4 1324.2 932.2C1314.4 937.9 1289.7 943.7 1272.4 946.0C1255.2 948.3 1235.0 948.3 1220.7 946.0C1206.3 943.7 1191.9 934.5 1186.2 932.2"/>
<path d="M1282.8 946.0C1282.8 950.6 1283.9 963.3 1282.8 973.6C1281.6 984.0 1281.6 996.6 1275.9 1008.1C1270.1 1019.6 1258.6 1030.0 1248.3 1042.6C1237.9 1055.3 1218.4 1069.7 1213.8 1084.1C1209.2 1098.4 1214.9 1115.7 1220.7 1128.9C1226.4 1142.1 1243.7 1157.4 1248.3 1163.1"/>
</g>
<g fill="none" stroke-linejoin="round" stroke-linecap="round"><g stroke="#dcae6a" stroke-width="3.8"><path d="M923.9 801.1C925.0 812.6 930.8 847.1 930.8 870.1C930.8 893.1 925.0 927.6 923.9 939.1"/><path d="M930.8 870.1L1048.1 877.0"/><path d="M979.1 873.5C984.8 883.3 1005.5 917.2 1013.6 932.2C1021.6 947.2 1025.1 958.1 1027.4 963.3"/><path d="M903.1 973.6C903.1 985.1 902.0 1025.4 903.1 1042.6C904.3 1059.9 908.9 1071.4 910.1 1077.2"/><path d="M903.1 1046.1C914.7 1044.4 953.8 1039.8 972.2 1035.7C990.6 1031.7 1003.2 1024.2 1013.6 1021.9C1023.9 1019.6 1030.8 1021.9 1034.3 1021.9"/><path d="M972.2 1035.7C973.3 1041.5 988.3 1063.3 979.1 1070.2C969.9 1077.2 927.3 1076.0 917.0 1077.2"/><path d="M1034.3 1021.9C1041.2 1023.1 1061.9 1028.8 1075.7 1028.8C1089.5 1028.8 1110.2 1023.1 1117.1 1021.9"/><path d="M1048.1 994.3C1053.9 994.3 1073.4 990.9 1082.6 994.3C1091.8 997.8 1099.9 1011.6 1103.3 1015.0"/><path d="M1075.7 911.5C1076.9 916.1 1084.3 928.7 1082.6 939.1C1080.9 949.5 1068.2 967.9 1065.4 973.6"/><path d="M1151.6 980.5C1162.0 979.4 1202.3 972.5 1213.8 973.6C1225.3 974.8 1209.2 984.0 1220.7 987.4C1232.2 990.9 1265.5 987.4 1282.8 994.3C1300.0 1001.2 1311.5 1017.9 1324.2 1028.8C1336.9 1039.8 1353.0 1054.7 1358.7 1059.9"/><path d="M1200.0 980.5C1202.3 990.9 1216.1 1029.4 1213.8 1042.6C1211.5 1055.9 1190.8 1057.0 1186.2 1059.9"/><path d="M1151.6 1008.1L1168.9 1042.6"/><path d="M1289.7 1160.0C1295.4 1151.9 1312.7 1123.2 1324.2 1111.7C1335.7 1100.2 1341.5 1095.0 1358.7 1091.0C1376.0 1086.9 1416.2 1088.1 1427.7 1087.5"/><path d="M1351.8 1059.9C1358.7 1051.3 1380.6 1025.4 1393.2 1008.1C1405.9 990.9 1413.4 972.5 1427.7 956.4C1442.1 940.3 1467.8 922.7 1479.5 911.5C1491.2 900.3 1495.0 892.8 1498.1 889.1"/><path d="M772.0 1059.9C783.5 1057.0 819.2 1049.0 841.0 1042.6C862.9 1036.3 892.8 1025.4 903.1 1021.9"/><path d="M813.4 808.0C816.9 812.6 833.0 827.5 834.1 835.6C835.3 843.6 830.7 850.5 820.3 856.3C810.0 862.0 780.1 867.8 772.0 870.1"/><path d="M1137.8 738.9C1145.9 736.1 1166.6 728.0 1186.2 721.7C1205.7 715.3 1234.5 706.1 1255.2 701.0C1275.9 695.8 1290.3 691.2 1310.4 690.6C1330.5 690.0 1364.5 691.8 1376.0 697.5C1387.5 703.3 1388.0 717.6 1379.4 725.1C1370.8 732.6 1339.2 736.6 1324.2 742.4C1309.2 748.1 1295.4 756.8 1289.7 759.6"/><path d="M1186.2 721.7C1186.2 726.3 1180.4 741.8 1186.2 749.3C1191.9 756.8 1214.9 763.7 1220.7 766.5"/><path d="M1255.2 701.0C1259.8 706.1 1274.7 728.0 1282.8 732.0C1290.8 736.1 1300.0 726.3 1303.5 725.1"/><path d="M927.3 1111.7C935.9 1108.8 960.1 1100.2 979.1 1094.4C998.1 1088.7 1023.9 1074.3 1041.2 1077.2C1058.5 1080.0 1071.1 1097.3 1082.6 1111.7C1094.1 1126.0 1105.6 1154.5 1110.2 1163.1"/><path d="M772.0 856.3C780.6 855.7 806.5 850.5 823.8 852.8C841.0 855.1 858.9 866.0 875.5 870.1C892.2 874.1 915.8 875.8 923.9 877.0"/><path d="M892.8 745.8C895.7 752.2 903.7 776.3 910.1 783.8C916.4 791.3 927.3 789.5 930.8 790.7"/><path d="M1020.5 745.8L1065.4 801.1"/><path d="M930.8 790.7C938.8 790.1 959.5 786.7 979.1 787.2C998.6 787.8 1036.6 793.0 1048.1 794.1"/><path d="M910.1 1077.2C919.3 1079.5 948.0 1091.0 965.3 1091.0C982.5 1091.0 1005.5 1079.5 1013.6 1077.2"/><path d="M1151.6 939.1C1157.4 934.5 1173.5 917.2 1186.2 911.5C1198.8 905.7 1220.7 905.7 1227.6 904.6"/><path d="M1427.7 839.0C1428.9 844.2 1428.9 862.6 1434.6 870.1C1440.4 877.6 1451.9 882.7 1462.3 883.9C1472.6 885.0 1491.0 878.1 1496.8 877.0"/><path d="M1203.4 663.0C1206.3 668.2 1214.3 686.0 1220.7 694.1C1227.0 702.1 1237.9 708.4 1241.4 711.3"/><path d="M1289.7 663.0L1303.5 690.6"/><path d="M1324.2 663.0C1325.4 667.6 1333.4 682.0 1331.1 690.6C1328.8 699.2 1313.8 710.7 1310.4 714.8"/></g><g stroke="#f3d59a" stroke-width="2.2"><path d="M923.9 801.1C925.0 812.6 930.8 847.1 930.8 870.1C930.8 893.1 925.0 927.6 923.9 939.1"/><path d="M930.8 870.1L1048.1 877.0"/><path d="M979.1 873.5C984.8 883.3 1005.5 917.2 1013.6 932.2C1021.6 947.2 1025.1 958.1 1027.4 963.3"/><path d="M903.1 973.6C903.1 985.1 902.0 1025.4 903.1 1042.6C904.3 1059.9 908.9 1071.4 910.1 1077.2"/><path d="M903.1 1046.1C914.7 1044.4 953.8 1039.8 972.2 1035.7C990.6 1031.7 1003.2 1024.2 1013.6 1021.9C1023.9 1019.6 1030.8 1021.9 1034.3 1021.9"/><path d="M972.2 1035.7C973.3 1041.5 988.3 1063.3 979.1 1070.2C969.9 1077.2 927.3 1076.0 917.0 1077.2"/><path d="M1034.3 1021.9C1041.2 1023.1 1061.9 1028.8 1075.7 1028.8C1089.5 1028.8 1110.2 1023.1 1117.1 1021.9"/><path d="M1048.1 994.3C1053.9 994.3 1073.4 990.9 1082.6 994.3C1091.8 997.8 1099.9 1011.6 1103.3 1015.0"/><path d="M1075.7 911.5C1076.9 916.1 1084.3 928.7 1082.6 939.1C1080.9 949.5 1068.2 967.9 1065.4 973.6"/><path d="M1151.6 980.5C1162.0 979.4 1202.3 972.5 1213.8 973.6C1225.3 974.8 1209.2 984.0 1220.7 987.4C1232.2 990.9 1265.5 987.4 1282.8 994.3C1300.0 1001.2 1311.5 1017.9 1324.2 1028.8C1336.9 1039.8 1353.0 1054.7 1358.7 1059.9"/><path d="M1200.0 980.5C1202.3 990.9 1216.1 1029.4 1213.8 1042.6C1211.5 1055.9 1190.8 1057.0 1186.2 1059.9"/><path d="M1151.6 1008.1L1168.9 1042.6"/><path d="M1289.7 1160.0C1295.4 1151.9 1312.7 1123.2 1324.2 1111.7C1335.7 1100.2 1341.5 1095.0 1358.7 1091.0C1376.0 1086.9 1416.2 1088.1 1427.7 1087.5"/><path d="M1351.8 1059.9C1358.7 1051.3 1380.6 1025.4 1393.2 1008.1C1405.9 990.9 1413.4 972.5 1427.7 956.4C1442.1 940.3 1467.8 922.7 1479.5 911.5C1491.2 900.3 1495.0 892.8 1498.1 889.1"/><path d="M772.0 1059.9C783.5 1057.0 819.2 1049.0 841.0 1042.6C862.9 1036.3 892.8 1025.4 903.1 1021.9"/><path d="M813.4 808.0C816.9 812.6 833.0 827.5 834.1 835.6C835.3 843.6 830.7 850.5 820.3 856.3C810.0 862.0 780.1 867.8 772.0 870.1"/><path d="M1137.8 738.9C1145.9 736.1 1166.6 728.0 1186.2 721.7C1205.7 715.3 1234.5 706.1 1255.2 701.0C1275.9 695.8 1290.3 691.2 1310.4 690.6C1330.5 690.0 1364.5 691.8 1376.0 697.5C1387.5 703.3 1388.0 717.6 1379.4 725.1C1370.8 732.6 1339.2 736.6 1324.2 742.4C1309.2 748.1 1295.4 756.8 1289.7 759.6"/><path d="M1186.2 721.7C1186.2 726.3 1180.4 741.8 1186.2 749.3C1191.9 756.8 1214.9 763.7 1220.7 766.5"/><path d="M1255.2 701.0C1259.8 706.1 1274.7 728.0 1282.8 732.0C1290.8 736.1 1300.0 726.3 1303.5 725.1"/><path d="M927.3 1111.7C935.9 1108.8 960.1 1100.2 979.1 1094.4C998.1 1088.7 1023.9 1074.3 1041.2 1077.2C1058.5 1080.0 1071.1 1097.3 1082.6 1111.7C1094.1 1126.0 1105.6 1154.5 1110.2 1163.1"/><path d="M772.0 856.3C780.6 855.7 806.5 850.5 823.8 852.8C841.0 855.1 858.9 866.0 875.5 870.1C892.2 874.1 915.8 875.8 923.9 877.0"/><path d="M892.8 745.8C895.7 752.2 903.7 776.3 910.1 783.8C916.4 791.3 927.3 789.5 930.8 790.7"/><path d="M1020.5 745.8L1065.4 801.1"/><path d="M930.8 790.7C938.8 790.1 959.5 786.7 979.1 787.2C998.6 787.8 1036.6 793.0 1048.1 794.1"/><path d="M910.1 1077.2C919.3 1079.5 948.0 1091.0 965.3 1091.0C982.5 1091.0 1005.5 1079.5 1013.6 1077.2"/><path d="M1151.6 939.1C1157.4 934.5 1173.5 917.2 1186.2 911.5C1198.8 905.7 1220.7 905.7 1227.6 904.6"/><path d="M1427.7 839.0C1428.9 844.2 1428.9 862.6 1434.6 870.1C1440.4 877.6 1451.9 882.7 1462.3 883.9C1472.6 885.0 1491.0 878.1 1496.8 877.0"/><path d="M1203.4 663.0C1206.3 668.2 1214.3 686.0 1220.7 694.1C1227.0 702.1 1237.9 708.4 1241.4 711.3"/><path d="M1289.7 663.0L1303.5 690.6"/><path d="M1324.2 663.0C1325.4 667.6 1333.4 682.0 1331.1 690.6C1328.8 699.2 1313.8 710.7 1310.4 714.8"/></g></g>
<g fill="none" stroke-linejoin="round" stroke-linecap="round"><g stroke="#cf9242" stroke-width="6.4"><path d="M105.0 16.0C108.3 17.5 123.3 20.2 125.0 25.0C126.7 29.8 116.2 38.3 115.0 45.0C113.8 51.7 105.4 59.2 117.5 65.0C129.6 70.8 175.8 77.5 187.5 80.0"/><path d="M70.0 17.5L105.0 15.0"/><path d="M187.5 80.0C197.9 79.6 231.7 77.9 250.0 77.5C268.3 77.1 289.6 77.5 297.5 77.5"/><path d="M303.6 132.5C302.7 136.2 300.3 145.4 298.0 154.6C295.7 163.8 293.5 181.3 289.8 187.7C286.1 194.1 278.3 192.1 276.0 193.0"/><path d="M297.5 0.0C299.6 5.0 310.4 20.8 310.0 30.0C309.6 39.2 295.8 47.5 295.0 55.0C294.2 62.5 302.9 63.3 305.0 75.0C307.1 86.7 300.8 117.1 307.5 125.0C314.2 132.9 332.1 119.6 345.0 122.5C357.9 125.4 363.3 148.3 385.0 142.5C406.7 136.7 460.0 96.7 475.0 87.5"/><path d="M280.0 12.5L300.0 30.0"/><path d="M175.0 110.0C171.7 113.3 167.5 121.7 155.0 130.0C142.5 138.3 113.3 152.5 100.0 160.0C86.7 167.5 82.5 167.5 75.0 175.0C67.5 182.5 59.2 194.6 55.0 205.0C50.8 215.4 47.5 226.7 50.0 237.5C52.5 248.3 67.5 262.1 70.0 270.0C72.5 277.9 69.6 283.3 65.0 285.0C60.4 286.7 50.0 282.9 42.5 280.0C35.0 277.1 27.1 268.8 20.0 267.5C12.9 266.2 3.3 271.7 0.0 272.5"/><path d="M175.0 107.5C177.9 111.2 190.0 122.9 192.5 130.0C195.0 137.1 192.5 144.2 190.0 150.0C187.5 155.8 177.5 160.8 177.5 165.0C177.5 169.2 183.3 166.2 190.0 175.0C196.7 183.8 209.2 202.9 217.5 217.5C225.8 232.1 236.2 248.8 240.0 262.5C243.8 276.2 243.3 289.6 240.0 300.0C236.7 310.4 228.3 314.7 220.0 325.0C211.7 335.3 199.2 350.3 190.0 362.0C180.8 373.7 171.7 383.7 165.0 395.0C158.3 406.3 155.8 412.5 150.0 430.0C144.2 447.5 133.3 488.3 130.0 500.0"/><path d="M220.0 220.0C222.1 217.5 221.2 210.0 232.5 205.0C243.8 200.0 273.3 197.1 287.5 190.0C301.7 182.9 311.2 165.8 317.5 162.5C323.8 159.2 325.0 165.4 325.0 170.0C325.0 174.6 317.9 181.7 317.5 190.0C317.1 198.3 317.1 209.2 322.5 220.0C327.9 230.8 338.8 247.5 350.0 255.0C361.2 262.5 377.5 257.5 390.0 265.0C402.5 272.5 419.2 294.2 425.0 300.0"/><path d="M372.5 175.0C382.9 174.2 423.8 161.7 435.0 170.0C446.2 178.3 440.8 211.7 440.0 225.0C439.2 238.3 432.5 239.6 430.0 250.0C427.5 260.4 425.8 275.8 425.0 287.5C424.2 299.2 425.0 314.6 425.0 320.0"/><path d="M430.0 287.5C437.5 277.1 455.8 239.6 475.0 225.0C494.2 210.4 533.3 204.2 545.0 200.0"/><path d="M425.0 320.0C434.2 322.5 460.8 331.7 480.0 335.0C499.2 338.3 524.2 335.8 540.0 340.0C555.8 344.2 569.2 356.7 575.0 360.0"/><path d="M195.0 350.0C212.5 346.7 267.5 335.8 300.0 330.0C332.5 324.2 369.2 316.7 390.0 315.0C410.8 313.3 419.2 319.2 425.0 320.0"/><path d="M420.0 320.0C415.0 327.5 396.7 351.7 390.0 365.0C383.3 378.3 385.0 390.8 380.0 400.0C375.0 409.2 361.7 410.0 360.0 420.0C358.3 430.0 366.7 447.5 370.0 460.0C373.3 472.5 383.3 485.0 380.0 495.0C376.7 505.0 361.7 512.5 350.0 520.0C338.3 527.5 316.7 536.7 310.0 540.0"/><path d="M380.0 460.0C391.7 450.0 423.3 415.0 450.0 400.0C476.7 385.0 519.2 375.8 540.0 370.0C560.8 364.2 569.2 365.8 575.0 365.0"/><path d="M575.0 365.0C595.0 368.3 665.0 381.7 695.0 385.0C725.0 388.3 739.2 381.7 755.0 385.0C770.8 388.3 784.2 401.7 790.0 405.0"/><path d="M575.0 365.0C579.2 355.8 591.7 324.2 600.0 310.0C608.3 295.8 606.7 288.3 625.0 280.0C643.3 271.7 689.2 269.2 710.0 260.0C730.8 250.8 735.0 247.5 750.0 225.0C765.0 202.5 787.5 162.5 800.0 125.0C812.5 87.5 820.8 20.8 825.0 0.0"/><path d="M575.0 365.0C575.8 375.0 584.2 402.5 580.0 425.0C575.8 447.5 563.3 475.0 550.0 500.0C536.7 525.0 512.5 550.8 500.0 575.0C487.5 599.2 480.8 620.2 475.0 645.0C469.2 669.8 466.7 710.8 465.0 724.0"/><path d="M700.0 220.0C704.2 230.0 718.3 258.3 725.0 280.0C731.7 301.7 737.5 338.3 740.0 350.0"/><path d="M180.0 360.0C194.2 373.3 240.8 413.3 265.0 440.0C289.2 466.7 310.8 505.8 325.0 520.0C339.2 534.2 345.8 524.2 350.0 525.0"/><path d="M107.5 365.0C110.4 383.3 121.7 443.3 125.0 475.0C128.3 506.7 127.1 541.7 127.5 555.0"/><path d="M107.5 365.0C98.8 367.5 72.9 375.0 55.0 380.0C37.1 385.0 9.2 392.5 0.0 395.0"/><path d="M200.0 350.0C205.8 356.7 223.3 375.8 235.0 390.0C246.7 404.2 259.2 425.0 270.0 435.0C280.8 445.0 295.0 447.5 300.0 450.0"/><path d="M130.0 510.0C150.0 508.3 226.7 511.7 250.0 500.0C273.3 488.3 266.7 450.0 270.0 440.0"/><path d="M0.0 330.0C8.3 333.3 33.3 345.8 50.0 350.0C66.7 354.2 78.3 353.8 100.0 355.0C121.7 356.2 163.3 358.3 180.0 357.5C196.7 356.7 196.7 351.2 200.0 350.0"/><path d="M790.0 400.0C791.7 391.7 791.7 365.0 800.0 350.0C808.3 335.0 830.0 323.3 840.0 310.0C850.0 296.7 853.3 284.2 860.0 270.0C866.7 255.8 875.8 245.0 880.0 225.0C884.2 205.0 885.8 175.0 885.0 150.0C884.2 125.0 874.2 100.0 875.0 75.0C875.8 50.0 887.5 12.5 890.0 0.0"/><path d="M845.0 465.0C850.0 460.0 857.5 443.3 875.0 435.0C892.5 426.7 923.3 425.8 950.0 415.0C976.7 404.2 1011.7 379.2 1035.0 370.0C1058.3 360.8 1080.8 361.7 1090.0 360.0"/><path d="M850.0 550.0C866.7 551.7 920.8 565.8 950.0 560.0C979.2 554.2 1001.7 527.5 1025.0 515.0C1048.3 502.5 1079.2 490.0 1090.0 485.0"/><path d="M750.0 724.0C750.8 703.3 750.0 629.8 755.0 600.0C760.0 570.2 764.2 555.8 780.0 545.0C795.8 534.2 838.3 536.7 850.0 535.0"/><path d="M940.0 560.0C945.8 573.3 965.0 612.7 975.0 640.0C985.0 667.3 995.8 710.0 1000.0 724.0"/><path d="M775.0 455.0C770.8 462.5 760.8 487.5 750.0 500.0C739.2 512.5 722.5 517.5 710.0 530.0C697.5 542.5 685.0 559.2 675.0 575.0C665.0 590.8 655.8 600.2 650.0 625.0C644.2 649.8 641.7 707.5 640.0 724.0"/><path d="M1115.0 110.0C1112.5 125.0 1105.0 171.7 1100.0 200.0C1095.0 228.3 1094.2 253.3 1085.0 280.0C1075.8 306.7 1048.3 335.8 1045.0 360.0C1041.7 384.2 1057.5 410.0 1065.0 425.0C1072.5 440.0 1085.8 445.8 1090.0 450.0"/><path d="M1050.0 0.0C1052.5 8.3 1054.2 31.7 1065.0 50.0C1075.8 68.3 1097.5 105.0 1115.0 110.0C1132.5 115.0 1141.2 88.3 1170.0 80.0C1198.8 71.7 1268.3 63.3 1288.0 60.0"/><path d="M1100.0 280.0C1108.3 283.3 1133.3 288.3 1150.0 300.0C1166.7 311.7 1185.0 348.3 1200.0 350.0C1215.0 351.7 1233.3 316.7 1240.0 310.0"/><path d="M500.0 75.0C512.5 79.2 554.2 97.5 575.0 100.0C595.8 102.5 604.2 104.2 625.0 90.0C645.8 75.8 679.2 30.0 700.0 15.0C720.8 0.0 741.7 2.5 750.0 0.0"/><path d="M635.0 90.0C635.8 83.3 639.2 65.0 640.0 50.0C640.8 35.0 640.0 8.3 640.0 0.0"/><path d="M700.0 15.0C713.3 17.5 763.3 22.5 780.0 30.0C796.7 37.5 798.3 48.3 800.0 60.0C801.7 71.7 798.3 83.3 790.0 100.0C781.7 116.7 762.5 140.0 750.0 160.0C737.5 180.0 720.8 210.0 715.0 220.0"/><path d="M0.0 525.0C8.3 527.5 35.0 537.5 50.0 540.0C65.0 542.5 83.3 540.0 90.0 540.0"/><path d="M1168.0 65.0C1181.3 65.0 1223.8 63.3 1248.0 65.0C1272.2 66.7 1289.7 70.8 1313.0 75.0C1336.3 79.2 1363.8 87.5 1388.0 90.0C1412.2 92.5 1436.3 96.7 1458.0 90.0C1479.7 83.3 1494.7 55.0 1518.0 50.0C1541.3 45.0 1579.7 55.0 1598.0 60.0C1616.3 65.0 1616.3 77.5 1628.0 80.0C1639.7 82.5 1645.5 75.0 1668.0 75.0C1690.5 75.0 1747.2 79.2 1763.0 80.0"/><path d="M1313.0 75.0C1317.2 66.7 1329.7 37.5 1338.0 25.0C1346.3 12.5 1358.8 4.2 1363.0 0.0"/><path d="M1458.0 90.0C1458.8 93.3 1469.7 100.0 1463.0 110.0C1456.3 120.0 1428.0 140.0 1418.0 150.0C1408.0 160.0 1406.3 161.7 1403.0 170.0C1399.7 178.3 1400.5 186.7 1398.0 200.0C1395.5 213.3 1389.7 225.0 1388.0 250.0C1386.3 275.0 1386.3 329.2 1388.0 350.0C1389.7 370.8 1402.2 365.0 1398.0 375.0C1393.8 385.0 1368.0 398.3 1363.0 410.0C1358.0 421.7 1367.2 439.2 1368.0 445.0"/><path d="M1313.0 75.0C1313.8 86.7 1312.2 129.2 1318.0 145.0C1323.8 160.8 1333.0 166.7 1348.0 170.0C1363.0 173.3 1390.5 172.5 1408.0 165.0C1425.5 157.5 1443.8 134.2 1453.0 125.0C1462.2 115.8 1461.3 112.5 1463.0 110.0"/><path d="M1488.0 0.0C1484.7 8.3 1473.0 35.0 1468.0 50.0C1463.0 65.0 1459.7 83.3 1458.0 90.0"/><path d="M1603.0 0.0C1603.8 8.3 1603.8 36.7 1608.0 50.0C1612.2 63.3 1624.7 75.0 1628.0 80.0"/><path d="M1668.0 80.0C1669.7 90.0 1670.5 127.5 1678.0 140.0C1685.5 152.5 1698.0 153.3 1713.0 155.0C1728.0 156.7 1726.3 148.3 1768.0 150.0C1809.7 151.7 1924.7 158.3 1963.0 165.0C2001.3 171.7 1985.5 179.2 1998.0 190.0C2010.5 200.8 2014.7 217.5 2038.0 230.0C2061.3 242.5 2115.0 260.0 2138.0 265.0C2161.0 270.0 2169.7 260.8 2176.0 260.0"/><path d="M1768.0 150.0C1768.8 162.5 1773.0 205.0 1773.0 225.0C1773.0 245.0 1772.2 255.8 1768.0 270.0C1763.8 284.2 1751.3 300.0 1748.0 310.0C1744.7 320.0 1754.7 323.3 1748.0 330.0C1741.3 336.7 1718.0 341.7 1708.0 350.0C1698.0 358.3 1694.7 367.5 1688.0 380.0C1681.3 392.5 1671.3 413.3 1668.0 425.0C1664.7 436.7 1671.3 441.7 1668.0 450.0C1664.7 458.3 1653.0 458.3 1648.0 475.0C1643.0 491.7 1645.5 529.2 1638.0 550.0C1630.5 570.8 1608.8 591.7 1603.0 600.0"/><path d="M1768.0 270.0C1754.7 272.5 1716.3 278.3 1688.0 285.0C1659.7 291.7 1613.0 305.8 1598.0 310.0"/><path d="M1798.0 0.0C1804.7 10.8 1828.0 48.3 1838.0 65.0C1848.0 81.7 1833.0 84.2 1858.0 100.0C1883.0 115.8 1966.3 150.0 1988.0 160.0"/><path d="M1858.0 100.0C1871.3 91.7 1918.8 66.7 1938.0 50.0C1957.2 33.3 1967.2 8.3 1973.0 0.0"/><path d="M1813.0 155.0L1858.0 100.0"/><path d="M1988.0 160.0C1994.7 148.3 2011.3 112.5 2028.0 90.0C2044.7 67.5 2075.5 40.0 2088.0 25.0C2100.5 10.0 2100.5 4.2 2103.0 0.0"/><path d="M2138.0 0.0C2140.5 8.3 2154.7 25.0 2153.0 50.0C2151.3 75.0 2128.8 116.7 2128.0 150.0C2127.2 183.3 2140.0 231.7 2148.0 250.0C2156.0 268.3 2171.3 258.3 2176.0 260.0"/><path d="M1998.0 190.0C2014.7 179.2 2068.3 140.0 2098.0 125.0C2127.7 110.0 2163.0 104.2 2176.0 100.0"/><path d="M1368.0 450.0C1383.8 449.2 1442.2 444.2 1463.0 445.0C1483.8 445.8 1479.7 455.8 1493.0 455.0C1506.3 454.2 1525.5 444.2 1543.0 440.0C1560.5 435.8 1580.5 428.3 1598.0 430.0C1615.5 431.7 1636.3 445.8 1648.0 450.0C1659.7 454.2 1664.7 454.2 1668.0 455.0"/><path d="M1353.0 450.0C1350.5 458.3 1345.5 485.0 1338.0 500.0C1330.5 515.0 1312.2 529.2 1308.0 540.0C1303.8 550.8 1312.2 560.8 1313.0 565.0"/><path d="M1668.0 455.0C1670.5 458.3 1671.3 470.8 1683.0 475.0C1694.7 479.2 1720.5 476.7 1738.0 480.0C1755.5 483.3 1775.5 488.3 1788.0 495.0C1800.5 501.7 1808.8 515.8 1813.0 520.0"/><path d="M1668.0 390.0C1676.3 390.0 1706.3 388.3 1718.0 390.0C1729.7 391.7 1738.0 393.3 1738.0 400.0C1738.0 406.7 1718.0 421.7 1718.0 430.0C1718.0 438.3 1726.3 445.0 1738.0 450.0C1749.7 455.0 1771.3 448.3 1788.0 460.0C1804.7 471.7 1825.5 500.8 1838.0 520.0C1850.5 539.2 1854.7 553.3 1863.0 575.0C1871.3 596.7 1883.8 625.2 1888.0 650.0C1892.2 674.8 1888.0 711.7 1888.0 724.0"/><path d="M1988.0 440.0C2000.5 448.3 2046.3 475.8 2063.0 490.0C2079.7 504.2 2079.7 510.8 2088.0 525.0C2096.3 539.2 2098.3 557.5 2113.0 575.0C2127.7 592.5 2165.5 620.8 2176.0 630.0"/><path d="M2053.0 325.0C2053.0 352.5 2048.8 444.2 2053.0 490.0C2057.2 535.8 2073.8 561.0 2078.0 600.0C2082.2 639.0 2078.0 703.3 2078.0 724.0"/><path d="M1738.0 640.0C1746.3 640.8 1771.3 639.2 1788.0 645.0C1804.7 650.8 1823.0 661.8 1838.0 675.0C1853.0 688.2 1871.3 715.8 1878.0 724.0"/><path d="M1888.0 690.0C1904.7 687.5 1940.0 683.3 1988.0 675.0C2036.0 666.7 2144.7 645.8 2176.0 640.0"/><path d="M1158.0 320.0C1164.7 325.0 1184.7 351.7 1198.0 350.0C1211.3 348.3 1228.0 318.3 1238.0 310.0C1248.0 301.7 1254.7 301.7 1258.0 300.0"/><path d="M1138.0 440.0C1154.7 436.7 1213.0 426.7 1238.0 420.0C1263.0 413.3 1273.0 399.2 1288.0 400.0C1303.0 400.8 1321.3 420.8 1328.0 425.0"/><path d="M1098.0 0.0C1094.7 12.5 1076.3 56.7 1078.0 75.0C1079.7 93.3 1100.5 97.5 1108.0 110.0C1115.5 122.5 1123.0 128.3 1123.0 150.0C1123.0 171.7 1112.2 218.3 1108.0 240.0C1103.8 261.7 1101.3 268.3 1098.0 280.0C1094.7 291.7 1095.5 296.7 1088.0 310.0C1080.5 323.3 1058.8 345.0 1053.0 360.0C1047.2 375.0 1048.8 387.5 1053.0 400.0C1057.2 412.5 1070.5 425.0 1078.0 435.0C1085.5 445.0 1094.7 455.8 1098.0 460.0"/><path d="M1053.0 0.0C1054.7 8.3 1053.8 31.7 1063.0 50.0C1072.2 68.3 1100.5 100.0 1108.0 110.0"/><path d="M888.0 460.0C913.0 445.8 1001.3 390.0 1038.0 375.0C1074.7 360.0 1093.0 370.8 1108.0 370.0C1123.0 369.2 1124.7 370.0 1128.0 370.0"/><path d="M0.0 889.0C15.8 885.7 61.7 877.3 95.0 869.0C128.3 860.7 162.5 843.2 200.0 839.0C237.5 834.8 288.3 848.2 320.0 844.0C351.7 839.8 364.2 829.8 390.0 814.0C415.8 798.2 456.7 764.0 475.0 749.0C493.3 734.0 495.8 728.2 500.0 724.0"/><path d="M0.0 959.0L80.0 974.0"/><path d="M55.0 999.0C64.2 1009.8 95.8 1045.7 110.0 1064.0C124.2 1082.3 130.0 1094.8 140.0 1109.0C150.0 1123.2 156.7 1129.8 170.0 1149.0C183.3 1168.2 205.0 1196.5 220.0 1224.0C235.0 1251.5 252.5 1276.7 260.0 1314.0C267.5 1351.3 264.2 1425.7 265.0 1448.0"/><path d="M260.0 724.0C266.7 736.5 289.2 779.8 300.0 799.0C310.8 818.2 321.7 814.8 325.0 839.0C328.3 863.2 322.5 916.5 320.0 944.0C317.5 971.5 313.3 983.2 310.0 1004.0C306.7 1024.8 296.7 1044.0 300.0 1069.0C303.3 1094.0 321.7 1136.5 330.0 1154.0C338.3 1171.5 346.7 1170.7 350.0 1174.0"/><path d="M325.0 954.0C337.5 945.7 372.5 929.8 400.0 904.0C427.5 878.2 472.5 824.8 490.0 799.0C507.5 773.2 502.5 757.3 505.0 749.0"/><path d="M685.0 974.0C690.0 979.8 710.8 992.3 715.0 1009.0C719.2 1025.7 712.5 1053.2 710.0 1074.0C707.5 1094.8 700.0 1117.3 700.0 1134.0C700.0 1150.7 705.8 1159.0 710.0 1174.0C714.2 1189.0 720.0 1207.3 725.0 1224.0C730.0 1240.7 735.8 1253.2 740.0 1274.0C744.2 1294.8 743.3 1320.0 750.0 1349.0C756.7 1378.0 775.0 1431.5 780.0 1448.0"/><path d="M700.0 1139.0C691.7 1140.7 670.8 1141.5 650.0 1149.0C629.2 1156.5 591.7 1173.2 575.0 1184.0C558.3 1194.8 555.8 1200.7 550.0 1214.0C544.2 1227.3 552.5 1252.3 540.0 1264.0C527.5 1275.7 491.7 1284.0 475.0 1284.0C458.3 1284.0 452.5 1265.7 440.0 1264.0C427.5 1262.3 426.7 1267.3 400.0 1274.0C373.3 1280.7 303.3 1297.3 280.0 1304.0C256.7 1310.7 263.3 1312.3 260.0 1314.0"/><path d="M710.0 1134.0C721.7 1124.0 758.3 1090.7 780.0 1074.0C801.7 1057.3 821.7 1042.3 840.0 1034.0C858.3 1025.7 881.7 1025.7 890.0 1024.0"/><path d="M740.0 1239.0C758.3 1233.2 823.3 1214.8 850.0 1204.0C876.7 1193.2 883.3 1180.7 900.0 1174.0C916.7 1167.3 932.5 1166.5 950.0 1164.0C967.5 1161.5 995.8 1159.8 1005.0 1159.0"/><path d="M1005.0 1159.0C1004.2 1169.8 1005.0 1196.5 1000.0 1224.0C995.0 1251.5 980.8 1286.7 975.0 1324.0C969.2 1361.3 966.7 1427.3 965.0 1448.0"/><path d="M1025.0 1274.0C1037.5 1286.5 1079.2 1324.0 1100.0 1349.0C1120.8 1374.0 1141.7 1411.5 1150.0 1424.0"/><path d="M650.0 774.0C651.7 782.3 660.0 805.7 660.0 824.0C660.0 842.3 645.0 863.2 650.0 884.0C655.0 904.8 683.3 938.2 690.0 949.0"/><path d="M1025.0 1174.0C1033.3 1182.3 1054.2 1211.5 1075.0 1224.0C1095.8 1236.5 1122.5 1240.7 1150.0 1249.0C1177.5 1257.3 1225.0 1269.8 1240.0 1274.0"/><path d="M0.0 774.0C6.7 780.7 23.3 800.7 40.0 814.0C56.7 827.3 90.0 847.3 100.0 854.0"/><path d="M1498.0 839.0L1498.0 889.0"/><path d="M1538.0 924.0C1542.2 928.2 1556.3 940.7 1563.0 949.0C1569.7 957.3 1573.8 961.5 1578.0 974.0C1582.2 986.5 1584.7 1010.7 1588.0 1024.0C1591.3 1037.3 1591.3 1045.7 1598.0 1054.0C1604.7 1062.3 1621.3 1066.5 1628.0 1074.0C1634.7 1081.5 1637.2 1086.5 1638.0 1099.0C1638.8 1111.5 1638.8 1132.3 1633.0 1149.0C1627.2 1165.7 1608.8 1181.5 1603.0 1199.0C1597.2 1216.5 1597.2 1242.3 1598.0 1254.0C1598.8 1265.7 1606.3 1266.5 1608.0 1269.0"/><path d="M1428.0 1088.0C1442.2 1089.8 1492.2 1101.3 1513.0 1099.0C1533.8 1096.7 1538.8 1081.5 1553.0 1074.0C1567.2 1066.5 1590.5 1057.3 1598.0 1054.0"/><path d="M1638.0 1084.0C1646.3 1080.7 1675.5 1066.5 1688.0 1064.0C1700.5 1061.5 1696.3 1069.0 1713.0 1069.0C1729.7 1069.0 1769.7 1063.2 1788.0 1064.0C1806.3 1064.8 1817.2 1072.3 1823.0 1074.0"/><path d="M1613.0 1264.0C1623.8 1253.2 1661.3 1220.7 1678.0 1199.0C1694.7 1177.3 1698.8 1149.8 1713.0 1134.0C1727.2 1118.2 1752.2 1105.7 1763.0 1104.0C1773.8 1102.3 1772.2 1114.0 1778.0 1124.0C1783.8 1134.0 1793.0 1147.3 1798.0 1164.0C1803.0 1180.7 1809.7 1197.3 1808.0 1224.0C1806.3 1250.7 1792.2 1286.7 1788.0 1324.0C1783.8 1361.3 1783.8 1427.3 1783.0 1448.0"/><path d="M1288.0 1249.0C1304.7 1251.5 1354.7 1259.8 1388.0 1264.0C1421.3 1268.2 1458.8 1270.7 1488.0 1274.0C1517.2 1277.3 1543.0 1284.8 1563.0 1284.0C1583.0 1283.2 1591.3 1266.5 1608.0 1269.0C1624.7 1271.5 1649.7 1285.7 1663.0 1299.0C1676.3 1312.3 1675.5 1332.3 1688.0 1349.0C1700.5 1365.7 1722.2 1382.5 1738.0 1399.0C1753.8 1415.5 1775.5 1439.8 1783.0 1448.0"/><path d="M1608.0 1269.0C1613.0 1278.2 1627.2 1306.5 1638.0 1324.0C1648.8 1341.5 1663.0 1353.3 1673.0 1374.0C1683.0 1394.7 1693.8 1435.7 1698.0 1448.0"/><path d="M1538.0 1448.0C1537.2 1435.7 1530.5 1394.7 1533.0 1374.0C1535.5 1353.3 1540.5 1340.7 1553.0 1324.0C1565.5 1307.3 1598.8 1282.3 1608.0 1274.0"/><path d="M1823.0 949.0C1825.5 936.5 1835.5 903.2 1838.0 874.0C1840.5 844.8 1831.3 799.0 1838.0 774.0C1844.7 749.0 1871.3 732.3 1878.0 724.0"/><path d="M1823.0 954.0C1823.8 965.7 1829.7 1008.2 1828.0 1024.0C1826.3 1039.8 1815.5 1044.8 1813.0 1049.0"/><path d="M1863.0 949.0C1879.7 944.8 1910.8 934.8 1963.0 924.0C2015.2 913.2 2140.5 890.7 2176.0 884.0"/><path d="M1898.0 724.0C1900.5 736.5 1898.0 782.3 1913.0 799.0C1928.0 815.7 1958.8 821.5 1988.0 824.0C2017.2 826.5 2056.7 809.8 2088.0 814.0C2119.3 818.2 2161.3 843.2 2176.0 849.0"/><path d="M2078.0 1124.0L2176.0 1044.0"/><path d="M1938.0 1214.0C1953.0 1206.5 2008.8 1175.7 2028.0 1169.0C2047.2 1162.3 2048.8 1173.2 2053.0 1174.0"/><path d="M1988.0 1448.0C1988.0 1435.7 1971.3 1398.8 1988.0 1374.0C2004.7 1349.2 2056.7 1315.7 2088.0 1299.0C2119.3 1282.3 2161.3 1278.2 2176.0 1274.0"/><path d="M1563.0 774.0C1567.2 782.3 1570.5 807.3 1588.0 824.0C1605.5 840.7 1654.7 865.7 1668.0 874.0"/><path d="M1638.0 814.0C1646.3 815.7 1671.3 825.7 1688.0 824.0C1704.7 822.3 1721.3 809.8 1738.0 804.0C1754.7 798.2 1771.3 794.0 1788.0 789.0C1804.7 784.0 1829.7 776.5 1838.0 774.0"/><path d="M1008.0 1164.0C1007.2 1174.0 1006.3 1197.3 1003.0 1224.0C999.7 1250.7 993.8 1286.7 988.0 1324.0C982.2 1361.3 971.3 1427.3 968.0 1448.0"/><path d="M0.0 1449.0C8.3 1453.2 39.2 1451.7 50.0 1474.0C60.8 1496.3 62.5 1564.8 65.0 1583.0"/><path d="M0.0 1504.0C14.2 1504.0 63.3 1511.5 85.0 1504.0C106.7 1496.5 109.2 1479.8 130.0 1459.0C150.8 1438.2 187.5 1399.8 210.0 1379.0C232.5 1358.2 255.8 1341.5 265.0 1334.0"/><path d="M295.0 560.0C290.8 575.0 275.8 622.7 270.0 650.0C264.2 677.3 261.7 711.7 260.0 724.0"/><path d="M265.0 1334.0C254.2 1342.3 216.7 1367.3 200.0 1384.0C183.3 1400.7 176.7 1421.5 165.0 1434.0C153.3 1446.5 135.8 1454.8 130.0 1459.0"/><path d="M265.0 1334.0C267.5 1346.5 274.2 1384.0 280.0 1409.0C285.8 1434.0 295.0 1455.0 300.0 1484.0C305.0 1513.0 308.3 1566.5 310.0 1583.0"/><path d="M265.0 1334.0C275.0 1342.3 306.7 1371.5 325.0 1384.0C343.3 1396.5 355.0 1404.0 375.0 1409.0C395.0 1414.0 433.3 1413.2 445.0 1414.0"/><path d="M310.0 1583.0C316.7 1568.2 335.0 1516.3 350.0 1494.0C365.0 1471.7 383.3 1463.2 400.0 1449.0C416.7 1434.8 441.7 1415.7 450.0 1409.0"/><path d="M750.0 1359.0C755.0 1367.3 767.5 1392.3 780.0 1409.0C792.5 1425.7 813.3 1430.0 825.0 1459.0C836.7 1488.0 845.8 1562.3 850.0 1583.0"/><path d="M1050.0 1583.0C1058.3 1570.7 1083.3 1525.5 1100.0 1509.0C1116.7 1492.5 1118.7 1484.0 1150.0 1484.0C1181.3 1484.0 1265.0 1504.8 1288.0 1509.0"/><path d="M1150.0 1459.0C1158.3 1450.7 1177.0 1421.5 1200.0 1409.0C1223.0 1396.5 1273.3 1388.2 1288.0 1384.0"/><path d="M1288.0 1274.0C1304.7 1288.2 1363.0 1341.5 1388.0 1359.0C1413.0 1376.5 1413.0 1374.8 1438.0 1379.0C1463.0 1383.2 1504.7 1379.0 1538.0 1384.0C1571.3 1389.0 1604.7 1400.7 1638.0 1409.0C1671.3 1417.3 1708.8 1425.7 1738.0 1434.0C1767.2 1442.3 1796.3 1450.7 1813.0 1459.0C1829.7 1467.3 1833.8 1479.8 1838.0 1484.0"/><path d="M1538.0 1384.0C1533.8 1396.5 1525.5 1438.2 1513.0 1459.0C1500.5 1479.8 1483.8 1496.5 1463.0 1509.0C1442.2 1521.5 1400.5 1529.8 1388.0 1534.0"/><path d="M1713.0 1583.0C1708.8 1570.7 1692.2 1529.7 1688.0 1509.0C1683.8 1488.3 1696.3 1475.7 1688.0 1459.0C1679.7 1442.3 1646.3 1417.3 1638.0 1409.0"/><path d="M1188.0 1583.0C1192.2 1570.7 1204.7 1546.3 1213.0 1509.0C1221.3 1471.7 1225.5 1394.0 1238.0 1359.0C1250.5 1324.0 1279.7 1309.0 1288.0 1299.0"/><path d="M1038.0 1583.0C1046.3 1574.8 1063.0 1546.3 1088.0 1534.0C1113.0 1521.7 1150.5 1510.7 1188.0 1509.0C1225.5 1507.3 1279.7 1519.8 1313.0 1524.0C1346.3 1528.2 1375.5 1532.3 1388.0 1534.0"/><path d="M1963.0 1583.0C1963.0 1573.2 1975.5 1540.5 1963.0 1524.0C1950.5 1507.5 1908.8 1490.7 1888.0 1484.0C1867.2 1477.3 1846.3 1484.0 1838.0 1484.0"/><path d="M2176.0 1509.0C2161.3 1513.2 2111.0 1521.7 2088.0 1534.0C2065.0 1546.3 2046.3 1574.8 2038.0 1583.0"/><path d="M2176.0 1309.0C2163.0 1311.5 2121.0 1315.7 2098.0 1324.0C2075.0 1332.3 2060.5 1344.8 2038.0 1359.0C2015.5 1373.2 1975.5 1400.7 1963.0 1409.0"/></g><g stroke="#f5c268" stroke-width="4.6"><path d="M105.0 16.0C108.3 17.5 123.3 20.2 125.0 25.0C126.7 29.8 116.2 38.3 115.0 45.0C113.8 51.7 105.4 59.2 117.5 65.0C129.6 70.8 175.8 77.5 187.5 80.0"/><path d="M70.0 17.5L105.0 15.0"/><path d="M187.5 80.0C197.9 79.6 231.7 77.9 250.0 77.5C268.3 77.1 289.6 77.5 297.5 77.5"/><path d="M303.6 132.5C302.7 136.2 300.3 145.4 298.0 154.6C295.7 163.8 293.5 181.3 289.8 187.7C286.1 194.1 278.3 192.1 276.0 193.0"/><path d="M297.5 0.0C299.6 5.0 310.4 20.8 310.0 30.0C309.6 39.2 295.8 47.5 295.0 55.0C294.2 62.5 302.9 63.3 305.0 75.0C307.1 86.7 300.8 117.1 307.5 125.0C314.2 132.9 332.1 119.6 345.0 122.5C357.9 125.4 363.3 148.3 385.0 142.5C406.7 136.7 460.0 96.7 475.0 87.5"/><path d="M280.0 12.5L300.0 30.0"/><path d="M175.0 110.0C171.7 113.3 167.5 121.7 155.0 130.0C142.5 138.3 113.3 152.5 100.0 160.0C86.7 167.5 82.5 167.5 75.0 175.0C67.5 182.5 59.2 194.6 55.0 205.0C50.8 215.4 47.5 226.7 50.0 237.5C52.5 248.3 67.5 262.1 70.0 270.0C72.5 277.9 69.6 283.3 65.0 285.0C60.4 286.7 50.0 282.9 42.5 280.0C35.0 277.1 27.1 268.8 20.0 267.5C12.9 266.2 3.3 271.7 0.0 272.5"/><path d="M175.0 107.5C177.9 111.2 190.0 122.9 192.5 130.0C195.0 137.1 192.5 144.2 190.0 150.0C187.5 155.8 177.5 160.8 177.5 165.0C177.5 169.2 183.3 166.2 190.0 175.0C196.7 183.8 209.2 202.9 217.5 217.5C225.8 232.1 236.2 248.8 240.0 262.5C243.8 276.2 243.3 289.6 240.0 300.0C236.7 310.4 228.3 314.7 220.0 325.0C211.7 335.3 199.2 350.3 190.0 362.0C180.8 373.7 171.7 383.7 165.0 395.0C158.3 406.3 155.8 412.5 150.0 430.0C144.2 447.5 133.3 488.3 130.0 500.0"/><path d="M220.0 220.0C222.1 217.5 221.2 210.0 232.5 205.0C243.8 200.0 273.3 197.1 287.5 190.0C301.7 182.9 311.2 165.8 317.5 162.5C323.8 159.2 325.0 165.4 325.0 170.0C325.0 174.6 317.9 181.7 317.5 190.0C317.1 198.3 317.1 209.2 322.5 220.0C327.9 230.8 338.8 247.5 350.0 255.0C361.2 262.5 377.5 257.5 390.0 265.0C402.5 272.5 419.2 294.2 425.0 300.0"/><path d="M372.5 175.0C382.9 174.2 423.8 161.7 435.0 170.0C446.2 178.3 440.8 211.7 440.0 225.0C439.2 238.3 432.5 239.6 430.0 250.0C427.5 260.4 425.8 275.8 425.0 287.5C424.2 299.2 425.0 314.6 425.0 320.0"/><path d="M430.0 287.5C437.5 277.1 455.8 239.6 475.0 225.0C494.2 210.4 533.3 204.2 545.0 200.0"/><path d="M425.0 320.0C434.2 322.5 460.8 331.7 480.0 335.0C499.2 338.3 524.2 335.8 540.0 340.0C555.8 344.2 569.2 356.7 575.0 360.0"/><path d="M195.0 350.0C212.5 346.7 267.5 335.8 300.0 330.0C332.5 324.2 369.2 316.7 390.0 315.0C410.8 313.3 419.2 319.2 425.0 320.0"/><path d="M420.0 320.0C415.0 327.5 396.7 351.7 390.0 365.0C383.3 378.3 385.0 390.8 380.0 400.0C375.0 409.2 361.7 410.0 360.0 420.0C358.3 430.0 366.7 447.5 370.0 460.0C373.3 472.5 383.3 485.0 380.0 495.0C376.7 505.0 361.7 512.5 350.0 520.0C338.3 527.5 316.7 536.7 310.0 540.0"/><path d="M380.0 460.0C391.7 450.0 423.3 415.0 450.0 400.0C476.7 385.0 519.2 375.8 540.0 370.0C560.8 364.2 569.2 365.8 575.0 365.0"/><path d="M575.0 365.0C595.0 368.3 665.0 381.7 695.0 385.0C725.0 388.3 739.2 381.7 755.0 385.0C770.8 388.3 784.2 401.7 790.0 405.0"/><path d="M575.0 365.0C579.2 355.8 591.7 324.2 600.0 310.0C608.3 295.8 606.7 288.3 625.0 280.0C643.3 271.7 689.2 269.2 710.0 260.0C730.8 250.8 735.0 247.5 750.0 225.0C765.0 202.5 787.5 162.5 800.0 125.0C812.5 87.5 820.8 20.8 825.0 0.0"/><path d="M575.0 365.0C575.8 375.0 584.2 402.5 580.0 425.0C575.8 447.5 563.3 475.0 550.0 500.0C536.7 525.0 512.5 550.8 500.0 575.0C487.5 599.2 480.8 620.2 475.0 645.0C469.2 669.8 466.7 710.8 465.0 724.0"/><path d="M700.0 220.0C704.2 230.0 718.3 258.3 725.0 280.0C731.7 301.7 737.5 338.3 740.0 350.0"/><path d="M180.0 360.0C194.2 373.3 240.8 413.3 265.0 440.0C289.2 466.7 310.8 505.8 325.0 520.0C339.2 534.2 345.8 524.2 350.0 525.0"/><path d="M107.5 365.0C110.4 383.3 121.7 443.3 125.0 475.0C128.3 506.7 127.1 541.7 127.5 555.0"/><path d="M107.5 365.0C98.8 367.5 72.9 375.0 55.0 380.0C37.1 385.0 9.2 392.5 0.0 395.0"/><path d="M200.0 350.0C205.8 356.7 223.3 375.8 235.0 390.0C246.7 404.2 259.2 425.0 270.0 435.0C280.8 445.0 295.0 447.5 300.0 450.0"/><path d="M130.0 510.0C150.0 508.3 226.7 511.7 250.0 500.0C273.3 488.3 266.7 450.0 270.0 440.0"/><path d="M0.0 330.0C8.3 333.3 33.3 345.8 50.0 350.0C66.7 354.2 78.3 353.8 100.0 355.0C121.7 356.2 163.3 358.3 180.0 357.5C196.7 356.7 196.7 351.2 200.0 350.0"/><path d="M790.0 400.0C791.7 391.7 791.7 365.0 800.0 350.0C808.3 335.0 830.0 323.3 840.0 310.0C850.0 296.7 853.3 284.2 860.0 270.0C866.7 255.8 875.8 245.0 880.0 225.0C884.2 205.0 885.8 175.0 885.0 150.0C884.2 125.0 874.2 100.0 875.0 75.0C875.8 50.0 887.5 12.5 890.0 0.0"/><path d="M845.0 465.0C850.0 460.0 857.5 443.3 875.0 435.0C892.5 426.7 923.3 425.8 950.0 415.0C976.7 404.2 1011.7 379.2 1035.0 370.0C1058.3 360.8 1080.8 361.7 1090.0 360.0"/><path d="M850.0 550.0C866.7 551.7 920.8 565.8 950.0 560.0C979.2 554.2 1001.7 527.5 1025.0 515.0C1048.3 502.5 1079.2 490.0 1090.0 485.0"/><path d="M750.0 724.0C750.8 703.3 750.0 629.8 755.0 600.0C760.0 570.2 764.2 555.8 780.0 545.0C795.8 534.2 838.3 536.7 850.0 535.0"/><path d="M940.0 560.0C945.8 573.3 965.0 612.7 975.0 640.0C985.0 667.3 995.8 710.0 1000.0 724.0"/><path d="M775.0 455.0C770.8 462.5 760.8 487.5 750.0 500.0C739.2 512.5 722.5 517.5 710.0 530.0C697.5 542.5 685.0 559.2 675.0 575.0C665.0 590.8 655.8 600.2 650.0 625.0C644.2 649.8 641.7 707.5 640.0 724.0"/><path d="M1115.0 110.0C1112.5 125.0 1105.0 171.7 1100.0 200.0C1095.0 228.3 1094.2 253.3 1085.0 280.0C1075.8 306.7 1048.3 335.8 1045.0 360.0C1041.7 384.2 1057.5 410.0 1065.0 425.0C1072.5 440.0 1085.8 445.8 1090.0 450.0"/><path d="M1050.0 0.0C1052.5 8.3 1054.2 31.7 1065.0 50.0C1075.8 68.3 1097.5 105.0 1115.0 110.0C1132.5 115.0 1141.2 88.3 1170.0 80.0C1198.8 71.7 1268.3 63.3 1288.0 60.0"/><path d="M1100.0 280.0C1108.3 283.3 1133.3 288.3 1150.0 300.0C1166.7 311.7 1185.0 348.3 1200.0 350.0C1215.0 351.7 1233.3 316.7 1240.0 310.0"/><path d="M500.0 75.0C512.5 79.2 554.2 97.5 575.0 100.0C595.8 102.5 604.2 104.2 625.0 90.0C645.8 75.8 679.2 30.0 700.0 15.0C720.8 0.0 741.7 2.5 750.0 0.0"/><path d="M635.0 90.0C635.8 83.3 639.2 65.0 640.0 50.0C640.8 35.0 640.0 8.3 640.0 0.0"/><path d="M700.0 15.0C713.3 17.5 763.3 22.5 780.0 30.0C796.7 37.5 798.3 48.3 800.0 60.0C801.7 71.7 798.3 83.3 790.0 100.0C781.7 116.7 762.5 140.0 750.0 160.0C737.5 180.0 720.8 210.0 715.0 220.0"/><path d="M0.0 525.0C8.3 527.5 35.0 537.5 50.0 540.0C65.0 542.5 83.3 540.0 90.0 540.0"/><path d="M1168.0 65.0C1181.3 65.0 1223.8 63.3 1248.0 65.0C1272.2 66.7 1289.7 70.8 1313.0 75.0C1336.3 79.2 1363.8 87.5 1388.0 90.0C1412.2 92.5 1436.3 96.7 1458.0 90.0C1479.7 83.3 1494.7 55.0 1518.0 50.0C1541.3 45.0 1579.7 55.0 1598.0 60.0C1616.3 65.0 1616.3 77.5 1628.0 80.0C1639.7 82.5 1645.5 75.0 1668.0 75.0C1690.5 75.0 1747.2 79.2 1763.0 80.0"/><path d="M1313.0 75.0C1317.2 66.7 1329.7 37.5 1338.0 25.0C1346.3 12.5 1358.8 4.2 1363.0 0.0"/><path d="M1458.0 90.0C1458.8 93.3 1469.7 100.0 1463.0 110.0C1456.3 120.0 1428.0 140.0 1418.0 150.0C1408.0 160.0 1406.3 161.7 1403.0 170.0C1399.7 178.3 1400.5 186.7 1398.0 200.0C1395.5 213.3 1389.7 225.0 1388.0 250.0C1386.3 275.0 1386.3 329.2 1388.0 350.0C1389.7 370.8 1402.2 365.0 1398.0 375.0C1393.8 385.0 1368.0 398.3 1363.0 410.0C1358.0 421.7 1367.2 439.2 1368.0 445.0"/><path d="M1313.0 75.0C1313.8 86.7 1312.2 129.2 1318.0 145.0C1323.8 160.8 1333.0 166.7 1348.0 170.0C1363.0 173.3 1390.5 172.5 1408.0 165.0C1425.5 157.5 1443.8 134.2 1453.0 125.0C1462.2 115.8 1461.3 112.5 1463.0 110.0"/><path d="M1488.0 0.0C1484.7 8.3 1473.0 35.0 1468.0 50.0C1463.0 65.0 1459.7 83.3 1458.0 90.0"/><path d="M1603.0 0.0C1603.8 8.3 1603.8 36.7 1608.0 50.0C1612.2 63.3 1624.7 75.0 1628.0 80.0"/><path d="M1668.0 80.0C1669.7 90.0 1670.5 127.5 1678.0 140.0C1685.5 152.5 1698.0 153.3 1713.0 155.0C1728.0 156.7 1726.3 148.3 1768.0 150.0C1809.7 151.7 1924.7 158.3 1963.0 165.0C2001.3 171.7 1985.5 179.2 1998.0 190.0C2010.5 200.8 2014.7 217.5 2038.0 230.0C2061.3 242.5 2115.0 260.0 2138.0 265.0C2161.0 270.0 2169.7 260.8 2176.0 260.0"/><path d="M1768.0 150.0C1768.8 162.5 1773.0 205.0 1773.0 225.0C1773.0 245.0 1772.2 255.8 1768.0 270.0C1763.8 284.2 1751.3 300.0 1748.0 310.0C1744.7 320.0 1754.7 323.3 1748.0 330.0C1741.3 336.7 1718.0 341.7 1708.0 350.0C1698.0 358.3 1694.7 367.5 1688.0 380.0C1681.3 392.5 1671.3 413.3 1668.0 425.0C1664.7 436.7 1671.3 441.7 1668.0 450.0C1664.7 458.3 1653.0 458.3 1648.0 475.0C1643.0 491.7 1645.5 529.2 1638.0 550.0C1630.5 570.8 1608.8 591.7 1603.0 600.0"/><path d="M1768.0 270.0C1754.7 272.5 1716.3 278.3 1688.0 285.0C1659.7 291.7 1613.0 305.8 1598.0 310.0"/><path d="M1798.0 0.0C1804.7 10.8 1828.0 48.3 1838.0 65.0C1848.0 81.7 1833.0 84.2 1858.0 100.0C1883.0 115.8 1966.3 150.0 1988.0 160.0"/><path d="M1858.0 100.0C1871.3 91.7 1918.8 66.7 1938.0 50.0C1957.2 33.3 1967.2 8.3 1973.0 0.0"/><path d="M1813.0 155.0L1858.0 100.0"/><path d="M1988.0 160.0C1994.7 148.3 2011.3 112.5 2028.0 90.0C2044.7 67.5 2075.5 40.0 2088.0 25.0C2100.5 10.0 2100.5 4.2 2103.0 0.0"/><path d="M2138.0 0.0C2140.5 8.3 2154.7 25.0 2153.0 50.0C2151.3 75.0 2128.8 116.7 2128.0 150.0C2127.2 183.3 2140.0 231.7 2148.0 250.0C2156.0 268.3 2171.3 258.3 2176.0 260.0"/><path d="M1998.0 190.0C2014.7 179.2 2068.3 140.0 2098.0 125.0C2127.7 110.0 2163.0 104.2 2176.0 100.0"/><path d="M1368.0 450.0C1383.8 449.2 1442.2 444.2 1463.0 445.0C1483.8 445.8 1479.7 455.8 1493.0 455.0C1506.3 454.2 1525.5 444.2 1543.0 440.0C1560.5 435.8 1580.5 428.3 1598.0 430.0C1615.5 431.7 1636.3 445.8 1648.0 450.0C1659.7 454.2 1664.7 454.2 1668.0 455.0"/><path d="M1353.0 450.0C1350.5 458.3 1345.5 485.0 1338.0 500.0C1330.5 515.0 1312.2 529.2 1308.0 540.0C1303.8 550.8 1312.2 560.8 1313.0 565.0"/><path d="M1668.0 455.0C1670.5 458.3 1671.3 470.8 1683.0 475.0C1694.7 479.2 1720.5 476.7 1738.0 480.0C1755.5 483.3 1775.5 488.3 1788.0 495.0C1800.5 501.7 1808.8 515.8 1813.0 520.0"/><path d="M1668.0 390.0C1676.3 390.0 1706.3 388.3 1718.0 390.0C1729.7 391.7 1738.0 393.3 1738.0 400.0C1738.0 406.7 1718.0 421.7 1718.0 430.0C1718.0 438.3 1726.3 445.0 1738.0 450.0C1749.7 455.0 1771.3 448.3 1788.0 460.0C1804.7 471.7 1825.5 500.8 1838.0 520.0C1850.5 539.2 1854.7 553.3 1863.0 575.0C1871.3 596.7 1883.8 625.2 1888.0 650.0C1892.2 674.8 1888.0 711.7 1888.0 724.0"/><path d="M1988.0 440.0C2000.5 448.3 2046.3 475.8 2063.0 490.0C2079.7 504.2 2079.7 510.8 2088.0 525.0C2096.3 539.2 2098.3 557.5 2113.0 575.0C2127.7 592.5 2165.5 620.8 2176.0 630.0"/><path d="M2053.0 325.0C2053.0 352.5 2048.8 444.2 2053.0 490.0C2057.2 535.8 2073.8 561.0 2078.0 600.0C2082.2 639.0 2078.0 703.3 2078.0 724.0"/><path d="M1738.0 640.0C1746.3 640.8 1771.3 639.2 1788.0 645.0C1804.7 650.8 1823.0 661.8 1838.0 675.0C1853.0 688.2 1871.3 715.8 1878.0 724.0"/><path d="M1888.0 690.0C1904.7 687.5 1940.0 683.3 1988.0 675.0C2036.0 666.7 2144.7 645.8 2176.0 640.0"/><path d="M1158.0 320.0C1164.7 325.0 1184.7 351.7 1198.0 350.0C1211.3 348.3 1228.0 318.3 1238.0 310.0C1248.0 301.7 1254.7 301.7 1258.0 300.0"/><path d="M1138.0 440.0C1154.7 436.7 1213.0 426.7 1238.0 420.0C1263.0 413.3 1273.0 399.2 1288.0 400.0C1303.0 400.8 1321.3 420.8 1328.0 425.0"/><path d="M1098.0 0.0C1094.7 12.5 1076.3 56.7 1078.0 75.0C1079.7 93.3 1100.5 97.5 1108.0 110.0C1115.5 122.5 1123.0 128.3 1123.0 150.0C1123.0 171.7 1112.2 218.3 1108.0 240.0C1103.8 261.7 1101.3 268.3 1098.0 280.0C1094.7 291.7 1095.5 296.7 1088.0 310.0C1080.5 323.3 1058.8 345.0 1053.0 360.0C1047.2 375.0 1048.8 387.5 1053.0 400.0C1057.2 412.5 1070.5 425.0 1078.0 435.0C1085.5 445.0 1094.7 455.8 1098.0 460.0"/><path d="M1053.0 0.0C1054.7 8.3 1053.8 31.7 1063.0 50.0C1072.2 68.3 1100.5 100.0 1108.0 110.0"/><path d="M888.0 460.0C913.0 445.8 1001.3 390.0 1038.0 375.0C1074.7 360.0 1093.0 370.8 1108.0 370.0C1123.0 369.2 1124.7 370.0 1128.0 370.0"/><path d="M0.0 889.0C15.8 885.7 61.7 877.3 95.0 869.0C128.3 860.7 162.5 843.2 200.0 839.0C237.5 834.8 288.3 848.2 320.0 844.0C351.7 839.8 364.2 829.8 390.0 814.0C415.8 798.2 456.7 764.0 475.0 749.0C493.3 734.0 495.8 728.2 500.0 724.0"/><path d="M0.0 959.0L80.0 974.0"/><path d="M55.0 999.0C64.2 1009.8 95.8 1045.7 110.0 1064.0C124.2 1082.3 130.0 1094.8 140.0 1109.0C150.0 1123.2 156.7 1129.8 170.0 1149.0C183.3 1168.2 205.0 1196.5 220.0 1224.0C235.0 1251.5 252.5 1276.7 260.0 1314.0C267.5 1351.3 264.2 1425.7 265.0 1448.0"/><path d="M260.0 724.0C266.7 736.5 289.2 779.8 300.0 799.0C310.8 818.2 321.7 814.8 325.0 839.0C328.3 863.2 322.5 916.5 320.0 944.0C317.5 971.5 313.3 983.2 310.0 1004.0C306.7 1024.8 296.7 1044.0 300.0 1069.0C303.3 1094.0 321.7 1136.5 330.0 1154.0C338.3 1171.5 346.7 1170.7 350.0 1174.0"/><path d="M325.0 954.0C337.5 945.7 372.5 929.8 400.0 904.0C427.5 878.2 472.5 824.8 490.0 799.0C507.5 773.2 502.5 757.3 505.0 749.0"/><path d="M685.0 974.0C690.0 979.8 710.8 992.3 715.0 1009.0C719.2 1025.7 712.5 1053.2 710.0 1074.0C707.5 1094.8 700.0 1117.3 700.0 1134.0C700.0 1150.7 705.8 1159.0 710.0 1174.0C714.2 1189.0 720.0 1207.3 725.0 1224.0C730.0 1240.7 735.8 1253.2 740.0 1274.0C744.2 1294.8 743.3 1320.0 750.0 1349.0C756.7 1378.0 775.0 1431.5 780.0 1448.0"/><path d="M700.0 1139.0C691.7 1140.7 670.8 1141.5 650.0 1149.0C629.2 1156.5 591.7 1173.2 575.0 1184.0C558.3 1194.8 555.8 1200.7 550.0 1214.0C544.2 1227.3 552.5 1252.3 540.0 1264.0C527.5 1275.7 491.7 1284.0 475.0 1284.0C458.3 1284.0 452.5 1265.7 440.0 1264.0C427.5 1262.3 426.7 1267.3 400.0 1274.0C373.3 1280.7 303.3 1297.3 280.0 1304.0C256.7 1310.7 263.3 1312.3 260.0 1314.0"/><path d="M710.0 1134.0C721.7 1124.0 758.3 1090.7 780.0 1074.0C801.7 1057.3 821.7 1042.3 840.0 1034.0C858.3 1025.7 881.7 1025.7 890.0 1024.0"/><path d="M740.0 1239.0C758.3 1233.2 823.3 1214.8 850.0 1204.0C876.7 1193.2 883.3 1180.7 900.0 1174.0C916.7 1167.3 932.5 1166.5 950.0 1164.0C967.5 1161.5 995.8 1159.8 1005.0 1159.0"/><path d="M1005.0 1159.0C1004.2 1169.8 1005.0 1196.5 1000.0 1224.0C995.0 1251.5 980.8 1286.7 975.0 1324.0C969.2 1361.3 966.7 1427.3 965.0 1448.0"/><path d="M1025.0 1274.0C1037.5 1286.5 1079.2 1324.0 1100.0 1349.0C1120.8 1374.0 1141.7 1411.5 1150.0 1424.0"/><path d="M650.0 774.0C651.7 782.3 660.0 805.7 660.0 824.0C660.0 842.3 645.0 863.2 650.0 884.0C655.0 904.8 683.3 938.2 690.0 949.0"/><path d="M1025.0 1174.0C1033.3 1182.3 1054.2 1211.5 1075.0 1224.0C1095.8 1236.5 1122.5 1240.7 1150.0 1249.0C1177.5 1257.3 1225.0 1269.8 1240.0 1274.0"/><path d="M0.0 774.0C6.7 780.7 23.3 800.7 40.0 814.0C56.7 827.3 90.0 847.3 100.0 854.0"/><path d="M1498.0 839.0L1498.0 889.0"/><path d="M1538.0 924.0C1542.2 928.2 1556.3 940.7 1563.0 949.0C1569.7 957.3 1573.8 961.5 1578.0 974.0C1582.2 986.5 1584.7 1010.7 1588.0 1024.0C1591.3 1037.3 1591.3 1045.7 1598.0 1054.0C1604.7 1062.3 1621.3 1066.5 1628.0 1074.0C1634.7 1081.5 1637.2 1086.5 1638.0 1099.0C1638.8 1111.5 1638.8 1132.3 1633.0 1149.0C1627.2 1165.7 1608.8 1181.5 1603.0 1199.0C1597.2 1216.5 1597.2 1242.3 1598.0 1254.0C1598.8 1265.7 1606.3 1266.5 1608.0 1269.0"/><path d="M1428.0 1088.0C1442.2 1089.8 1492.2 1101.3 1513.0 1099.0C1533.8 1096.7 1538.8 1081.5 1553.0 1074.0C1567.2 1066.5 1590.5 1057.3 1598.0 1054.0"/><path d="M1638.0 1084.0C1646.3 1080.7 1675.5 1066.5 1688.0 1064.0C1700.5 1061.5 1696.3 1069.0 1713.0 1069.0C1729.7 1069.0 1769.7 1063.2 1788.0 1064.0C1806.3 1064.8 1817.2 1072.3 1823.0 1074.0"/><path d="M1613.0 1264.0C1623.8 1253.2 1661.3 1220.7 1678.0 1199.0C1694.7 1177.3 1698.8 1149.8 1713.0 1134.0C1727.2 1118.2 1752.2 1105.7 1763.0 1104.0C1773.8 1102.3 1772.2 1114.0 1778.0 1124.0C1783.8 1134.0 1793.0 1147.3 1798.0 1164.0C1803.0 1180.7 1809.7 1197.3 1808.0 1224.0C1806.3 1250.7 1792.2 1286.7 1788.0 1324.0C1783.8 1361.3 1783.8 1427.3 1783.0 1448.0"/><path d="M1288.0 1249.0C1304.7 1251.5 1354.7 1259.8 1388.0 1264.0C1421.3 1268.2 1458.8 1270.7 1488.0 1274.0C1517.2 1277.3 1543.0 1284.8 1563.0 1284.0C1583.0 1283.2 1591.3 1266.5 1608.0 1269.0C1624.7 1271.5 1649.7 1285.7 1663.0 1299.0C1676.3 1312.3 1675.5 1332.3 1688.0 1349.0C1700.5 1365.7 1722.2 1382.5 1738.0 1399.0C1753.8 1415.5 1775.5 1439.8 1783.0 1448.0"/><path d="M1608.0 1269.0C1613.0 1278.2 1627.2 1306.5 1638.0 1324.0C1648.8 1341.5 1663.0 1353.3 1673.0 1374.0C1683.0 1394.7 1693.8 1435.7 1698.0 1448.0"/><path d="M1538.0 1448.0C1537.2 1435.7 1530.5 1394.7 1533.0 1374.0C1535.5 1353.3 1540.5 1340.7 1553.0 1324.0C1565.5 1307.3 1598.8 1282.3 1608.0 1274.0"/><path d="M1823.0 949.0C1825.5 936.5 1835.5 903.2 1838.0 874.0C1840.5 844.8 1831.3 799.0 1838.0 774.0C1844.7 749.0 1871.3 732.3 1878.0 724.0"/><path d="M1823.0 954.0C1823.8 965.7 1829.7 1008.2 1828.0 1024.0C1826.3 1039.8 1815.5 1044.8 1813.0 1049.0"/><path d="M1863.0 949.0C1879.7 944.8 1910.8 934.8 1963.0 924.0C2015.2 913.2 2140.5 890.7 2176.0 884.0"/><path d="M1898.0 724.0C1900.5 736.5 1898.0 782.3 1913.0 799.0C1928.0 815.7 1958.8 821.5 1988.0 824.0C2017.2 826.5 2056.7 809.8 2088.0 814.0C2119.3 818.2 2161.3 843.2 2176.0 849.0"/><path d="M2078.0 1124.0L2176.0 1044.0"/><path d="M1938.0 1214.0C1953.0 1206.5 2008.8 1175.7 2028.0 1169.0C2047.2 1162.3 2048.8 1173.2 2053.0 1174.0"/><path d="M1988.0 1448.0C1988.0 1435.7 1971.3 1398.8 1988.0 1374.0C2004.7 1349.2 2056.7 1315.7 2088.0 1299.0C2119.3 1282.3 2161.3 1278.2 2176.0 1274.0"/><path d="M1563.0 774.0C1567.2 782.3 1570.5 807.3 1588.0 824.0C1605.5 840.7 1654.7 865.7 1668.0 874.0"/><path d="M1638.0 814.0C1646.3 815.7 1671.3 825.7 1688.0 824.0C1704.7 822.3 1721.3 809.8 1738.0 804.0C1754.7 798.2 1771.3 794.0 1788.0 789.0C1804.7 784.0 1829.7 776.5 1838.0 774.0"/><path d="M1008.0 1164.0C1007.2 1174.0 1006.3 1197.3 1003.0 1224.0C999.7 1250.7 993.8 1286.7 988.0 1324.0C982.2 1361.3 971.3 1427.3 968.0 1448.0"/><path d="M0.0 1449.0C8.3 1453.2 39.2 1451.7 50.0 1474.0C60.8 1496.3 62.5 1564.8 65.0 1583.0"/><path d="M0.0 1504.0C14.2 1504.0 63.3 1511.5 85.0 1504.0C106.7 1496.5 109.2 1479.8 130.0 1459.0C150.8 1438.2 187.5 1399.8 210.0 1379.0C232.5 1358.2 255.8 1341.5 265.0 1334.0"/><path d="M295.0 560.0C290.8 575.0 275.8 622.7 270.0 650.0C264.2 677.3 261.7 711.7 260.0 724.0"/><path d="M265.0 1334.0C254.2 1342.3 216.7 1367.3 200.0 1384.0C183.3 1400.7 176.7 1421.5 165.0 1434.0C153.3 1446.5 135.8 1454.8 130.0 1459.0"/><path d="M265.0 1334.0C267.5 1346.5 274.2 1384.0 280.0 1409.0C285.8 1434.0 295.0 1455.0 300.0 1484.0C305.0 1513.0 308.3 1566.5 310.0 1583.0"/><path d="M265.0 1334.0C275.0 1342.3 306.7 1371.5 325.0 1384.0C343.3 1396.5 355.0 1404.0 375.0 1409.0C395.0 1414.0 433.3 1413.2 445.0 1414.0"/><path d="M310.0 1583.0C316.7 1568.2 335.0 1516.3 350.0 1494.0C365.0 1471.7 383.3 1463.2 400.0 1449.0C416.7 1434.8 441.7 1415.7 450.0 1409.0"/><path d="M750.0 1359.0C755.0 1367.3 767.5 1392.3 780.0 1409.0C792.5 1425.7 813.3 1430.0 825.0 1459.0C836.7 1488.0 845.8 1562.3 850.0 1583.0"/><path d="M1050.0 1583.0C1058.3 1570.7 1083.3 1525.5 1100.0 1509.0C1116.7 1492.5 1118.7 1484.0 1150.0 1484.0C1181.3 1484.0 1265.0 1504.8 1288.0 1509.0"/><path d="M1150.0 1459.0C1158.3 1450.7 1177.0 1421.5 1200.0 1409.0C1223.0 1396.5 1273.3 1388.2 1288.0 1384.0"/><path d="M1288.0 1274.0C1304.7 1288.2 1363.0 1341.5 1388.0 1359.0C1413.0 1376.5 1413.0 1374.8 1438.0 1379.0C1463.0 1383.2 1504.7 1379.0 1538.0 1384.0C1571.3 1389.0 1604.7 1400.7 1638.0 1409.0C1671.3 1417.3 1708.8 1425.7 1738.0 1434.0C1767.2 1442.3 1796.3 1450.7 1813.0 1459.0C1829.7 1467.3 1833.8 1479.8 1838.0 1484.0"/><path d="M1538.0 1384.0C1533.8 1396.5 1525.5 1438.2 1513.0 1459.0C1500.5 1479.8 1483.8 1496.5 1463.0 1509.0C1442.2 1521.5 1400.5 1529.8 1388.0 1534.0"/><path d="M1713.0 1583.0C1708.8 1570.7 1692.2 1529.7 1688.0 1509.0C1683.8 1488.3 1696.3 1475.7 1688.0 1459.0C1679.7 1442.3 1646.3 1417.3 1638.0 1409.0"/><path d="M1188.0 1583.0C1192.2 1570.7 1204.7 1546.3 1213.0 1509.0C1221.3 1471.7 1225.5 1394.0 1238.0 1359.0C1250.5 1324.0 1279.7 1309.0 1288.0 1299.0"/><path d="M1038.0 1583.0C1046.3 1574.8 1063.0 1546.3 1088.0 1534.0C1113.0 1521.7 1150.5 1510.7 1188.0 1509.0C1225.5 1507.3 1279.7 1519.8 1313.0 1524.0C1346.3 1528.2 1375.5 1532.3 1388.0 1534.0"/><path d="M1963.0 1583.0C1963.0 1573.2 1975.5 1540.5 1963.0 1524.0C1950.5 1507.5 1908.8 1490.7 1888.0 1484.0C1867.2 1477.3 1846.3 1484.0 1838.0 1484.0"/><path d="M2176.0 1509.0C2161.3 1513.2 2111.0 1521.7 2088.0 1534.0C2065.0 1546.3 2046.3 1574.8 2038.0 1583.0"/><path d="M2176.0 1309.0C2163.0 1311.5 2121.0 1315.7 2098.0 1324.0C2075.0 1332.3 2060.5 1344.8 2038.0 1359.0C2015.5 1373.2 1975.5 1400.7 1963.0 1409.0"/></g></g>
<g fill="none" stroke-linejoin="round" stroke-linecap="round"><g stroke="#b97510" stroke-width="7.6"><path d="M0.0 72.5C7.5 68.8 25.8 62.1 45.0 50.0C64.2 37.9 103.3 8.3 115.0 0.0"/><path d="M440.0 0.0C434.2 7.1 405.8 31.7 405.0 42.5C404.2 53.3 422.5 57.1 435.0 65.0C447.5 72.9 465.8 80.0 480.0 90.0C494.2 100.0 507.9 113.3 520.0 125.0C532.1 136.7 547.5 147.5 552.5 160.0C557.5 172.5 547.9 190.0 550.0 200.0C552.1 210.0 555.8 213.8 565.0 220.0C574.2 226.2 597.1 230.8 605.0 237.5C612.9 244.2 605.0 246.2 612.5 260.0C620.0 273.8 632.1 305.8 650.0 320.0C667.9 334.2 703.3 336.7 720.0 345.0C736.7 353.3 744.2 363.3 750.0 370.0C755.8 376.7 748.3 379.2 755.0 385.0C761.7 390.8 785.4 396.7 790.0 405.0C794.6 413.3 784.2 426.2 782.5 435.0C780.8 443.8 772.1 456.7 780.0 457.5C787.9 458.3 819.2 434.6 830.0 440.0C840.8 445.4 841.7 471.7 845.0 490.0C848.3 508.3 845.8 529.2 850.0 550.0C854.2 570.8 870.0 596.7 870.0 615.0C870.0 633.3 846.7 646.7 850.0 660.0C853.3 673.3 880.0 684.3 890.0 695.0C900.0 705.7 906.7 719.2 910.0 724.0"/><path d="M910.0 724.0C915.0 729.0 925.0 744.0 940.0 754.0C955.0 764.0 990.0 779.0 1000.0 784.0"/><path d="M0.0 450.0C8.3 456.7 35.0 475.0 50.0 490.0C65.0 505.0 76.7 529.6 90.0 540.0C103.3 550.4 98.3 549.2 130.0 552.5C161.7 555.8 243.3 555.4 280.0 560.0C316.7 564.6 327.5 570.8 350.0 580.0C372.5 589.2 395.0 602.5 415.0 615.0C435.0 627.5 447.5 636.8 470.0 655.0C492.5 673.2 536.7 712.5 550.0 724.0"/><path d="M122.0 724.0L127.5 555.0"/><path d="M122.0 724.0C119.6 740.7 114.5 782.3 107.5 824.0C100.5 865.7 81.2 948.2 80.0 974.0C78.8 999.8 80.0 966.5 100.0 979.0C120.0 991.5 165.0 1022.3 200.0 1049.0C235.0 1075.7 283.3 1118.2 310.0 1139.0C336.7 1159.8 345.0 1151.5 360.0 1174.0C375.0 1196.5 386.7 1244.8 400.0 1274.0C413.3 1303.2 427.5 1320.0 440.0 1349.0C452.5 1378.0 469.2 1431.5 475.0 1448.0"/><path d="M480.0 1449.0C485.8 1458.2 503.3 1489.8 515.0 1504.0C526.7 1518.2 539.2 1520.8 550.0 1534.0C560.8 1547.2 575.0 1574.8 580.0 1583.0"/><path d="M1098.0 0.0C1100.5 4.2 1101.3 14.2 1113.0 25.0C1124.7 35.8 1158.8 44.2 1168.0 65.0C1177.2 85.8 1169.7 123.3 1168.0 150.0C1166.3 176.7 1161.3 200.0 1158.0 225.0C1154.7 250.0 1151.3 277.5 1148.0 300.0C1144.7 322.5 1141.3 339.2 1138.0 360.0C1134.7 380.8 1130.5 410.8 1128.0 425.0C1125.5 439.2 1128.0 439.2 1123.0 445.0C1118.0 450.8 1103.0 450.8 1098.0 460.0C1093.0 469.2 1093.0 480.8 1093.0 500.0C1093.0 519.2 1093.8 554.2 1098.0 575.0C1102.2 595.8 1111.3 610.0 1118.0 625.0C1124.7 640.0 1137.2 648.5 1138.0 665.0C1138.8 681.5 1125.5 714.2 1123.0 724.0"/><path d="M1100.0 0.0L1140.0 37.5"/><path d="M1868.0 0.0C1865.5 8.3 1860.5 38.3 1853.0 50.0C1845.5 61.7 1833.8 65.8 1823.0 70.0C1812.2 74.2 1797.2 71.7 1788.0 75.0C1778.8 78.3 1773.0 81.7 1768.0 90.0C1763.0 98.3 1763.8 113.3 1758.0 125.0C1752.2 136.7 1748.0 147.5 1733.0 160.0C1718.0 172.5 1685.5 185.0 1668.0 200.0C1650.5 215.0 1641.3 231.7 1628.0 250.0C1614.7 268.3 1603.0 293.3 1588.0 310.0C1573.0 326.7 1550.5 336.7 1538.0 350.0C1525.5 363.3 1521.3 377.5 1513.0 390.0C1504.7 402.5 1497.2 415.0 1488.0 425.0C1478.8 435.0 1468.8 436.7 1458.0 450.0C1447.2 463.3 1432.2 493.3 1423.0 505.0C1413.8 516.7 1421.3 510.0 1403.0 520.0C1384.7 530.0 1340.5 549.2 1313.0 565.0C1285.5 580.8 1265.5 597.5 1238.0 615.0C1210.5 632.5 1168.8 651.8 1148.0 670.0C1127.2 688.2 1118.8 715.0 1113.0 724.0"/><path d="M1788.0 0.0L1773.0 75.0"/><path d="M2176.0 350.0C2161.3 355.0 2119.3 365.0 2088.0 380.0C2056.7 395.0 2013.0 425.8 1988.0 440.0C1963.0 454.2 1963.0 454.2 1938.0 465.0C1913.0 475.8 1863.0 495.8 1838.0 505.0C1813.0 514.2 1806.3 515.0 1788.0 520.0C1769.7 525.0 1744.7 530.8 1728.0 535.0C1711.3 539.2 1707.2 537.5 1688.0 545.0C1668.8 552.5 1625.5 574.2 1613.0 580.0"/><path d="M1688.0 545.0C1688.8 551.7 1708.0 575.8 1693.0 585.0C1678.0 594.2 1614.7 590.8 1598.0 600.0C1581.3 609.2 1598.8 625.8 1593.0 640.0C1587.2 654.2 1573.8 671.0 1563.0 685.0C1552.2 699.0 1533.8 717.5 1528.0 724.0"/><path d="M0.0 1181.5C10.8 1178.6 40.0 1176.1 65.0 1164.0C90.0 1151.9 123.3 1125.7 150.0 1109.0C176.7 1092.3 200.0 1070.7 225.0 1064.0C250.0 1057.3 270.8 1073.2 300.0 1069.0C329.2 1064.8 362.5 1048.6 400.0 1039.0C437.5 1029.4 487.5 1019.0 525.0 1011.5C562.5 1004.0 597.5 1000.2 625.0 994.0C652.5 987.8 669.2 981.5 690.0 974.0C710.8 966.5 727.5 957.3 750.0 949.0C772.5 940.7 808.3 927.3 825.0 924.0C841.7 920.7 829.2 925.7 850.0 929.0C870.8 932.3 931.2 939.0 950.0 944.0C968.8 949.0 960.4 956.5 962.5 959.0"/><path d="M670.0 769.0C671.7 777.3 667.5 806.5 680.0 819.0C692.5 831.5 728.3 834.8 745.0 844.0C761.7 853.2 767.5 862.3 780.0 874.0C792.5 885.7 813.3 907.3 820.0 914.0"/><path d="M715.0 829.0C714.2 844.8 715.0 900.7 710.0 924.0C705.0 947.3 689.2 961.5 685.0 969.0"/><path d="M1388.0 824.0C1406.3 826.5 1473.0 831.5 1498.0 839.0C1523.0 846.5 1509.7 861.5 1538.0 869.0C1566.3 876.5 1643.0 883.2 1668.0 884.0C1693.0 884.8 1676.3 872.3 1688.0 874.0C1699.7 875.7 1721.3 885.7 1738.0 894.0C1754.7 902.3 1773.0 914.0 1788.0 924.0C1803.0 934.0 1821.3 949.0 1828.0 954.0"/><path d="M550.0 724.0C556.7 732.3 540.0 761.5 590.0 774.0C640.0 786.5 806.7 794.8 850.0 799.0"/><path d="M1668.0 884.0C1669.7 889.0 1670.5 905.7 1678.0 914.0C1685.5 922.3 1698.0 924.0 1713.0 934.0C1728.0 944.0 1755.5 960.7 1768.0 974.0C1780.5 987.3 1780.5 1002.3 1788.0 1014.0C1795.5 1025.7 1800.5 1030.7 1813.0 1044.0C1825.5 1057.3 1850.5 1078.2 1863.0 1094.0C1875.5 1109.8 1875.5 1125.7 1888.0 1139.0C1900.5 1152.3 1923.8 1160.7 1938.0 1174.0C1952.2 1187.3 1956.3 1202.3 1973.0 1219.0C1989.7 1235.7 2014.7 1254.0 2038.0 1274.0C2061.3 1294.0 2090.0 1324.0 2113.0 1339.0C2136.0 1354.0 2165.5 1359.8 2176.0 1364.0"/><path d="M1828.0 954.0C1833.8 953.2 1848.8 943.2 1863.0 949.0C1877.2 954.8 1896.3 973.2 1913.0 989.0C1929.7 1004.8 1942.2 1028.2 1963.0 1044.0C1983.8 1059.8 2018.8 1070.7 2038.0 1084.0C2057.2 1097.3 2075.5 1109.0 2078.0 1124.0C2080.5 1139.0 2055.5 1157.3 2053.0 1174.0C2050.5 1190.7 2053.0 1207.3 2063.0 1224.0C2073.0 1240.7 2094.2 1257.3 2113.0 1274.0C2131.8 1290.7 2165.5 1315.7 2176.0 1324.0"/><path d="M1198.0 1074.0C1205.5 1086.5 1234.7 1129.8 1243.0 1149.0C1251.3 1168.2 1241.3 1174.0 1248.0 1189.0C1254.7 1204.0 1272.2 1220.7 1283.0 1239.0C1293.8 1257.3 1302.2 1276.5 1313.0 1299.0C1323.8 1321.5 1339.7 1349.2 1348.0 1374.0C1356.3 1398.8 1357.2 1421.3 1363.0 1448.0C1368.8 1474.7 1376.3 1508.8 1383.0 1534.0C1389.7 1559.2 1397.2 1578.8 1403.0 1599.0C1408.8 1619.2 1415.5 1646.1 1418.0 1655.5"/><path d="M888.0 1224.0C903.0 1214.0 950.5 1175.7 978.0 1164.0C1005.5 1152.3 1040.5 1155.7 1053.0 1154.0"/><path d="M835.0 1254.0C816.7 1259.8 749.2 1277.3 725.0 1289.0C700.8 1300.7 695.8 1318.2 690.0 1324.0"/><path d="M0.0 1504.0C8.3 1499.8 33.3 1482.3 50.0 1479.0C66.7 1475.7 91.7 1483.2 100.0 1484.0"/><path d="M925.0 1583.0C929.2 1579.0 937.5 1564.7 950.0 1559.0C962.5 1553.3 985.0 1550.2 1000.0 1549.0C1015.0 1547.8 1033.3 1551.1 1040.0 1551.5"/><path d="M1713.0 1583.0C1721.3 1573.2 1746.3 1540.5 1763.0 1524.0C1779.7 1507.5 1796.3 1491.5 1813.0 1484.0C1829.7 1476.5 1842.2 1484.8 1863.0 1479.0C1883.8 1473.2 1917.2 1452.3 1938.0 1449.0C1958.8 1445.7 1967.2 1453.2 1988.0 1459.0C2008.8 1464.8 2042.2 1485.7 2063.0 1484.0C2083.8 1482.3 2094.2 1463.2 2113.0 1449.0C2131.8 1434.8 2165.5 1407.3 2176.0 1399.0"/><path d="M2176.0 0.0L2168.0 40.0"/><path d="M772.0 780.3C785.2 783.2 822.6 791.3 851.4 797.6C880.1 803.9 911.8 810.8 944.6 818.3C977.3 825.8 1025.1 836.7 1048.1 842.5C1071.1 848.2 1076.9 851.1 1082.6 852.8"/><path d="M772.0 946.0C780.6 942.6 800.8 931.0 823.8 925.3C846.8 919.5 878.4 917.8 910.1 911.5C941.7 905.2 986.0 894.2 1013.6 887.3C1041.2 880.4 1058.5 874.1 1075.7 870.1C1093.0 866.0 1110.2 864.3 1117.1 863.2"/><path d="M965.3 956.4C979.1 958.1 1022.8 963.3 1048.1 966.7C1073.4 970.2 1105.6 975.3 1117.1 977.1"/><path d="M1082.6 808.0C1099.9 805.1 1151.6 798.7 1186.2 790.7C1220.7 782.6 1260.9 780.9 1289.7 759.6C1318.4 738.4 1347.2 679.1 1358.7 663.0"/><path d="M1151.6 856.3C1174.6 845.3 1246.5 805.7 1289.7 790.7C1332.8 775.7 1381.7 773.4 1410.5 766.5C1439.2 759.6 1435.3 766.5 1462.3 749.3C1489.2 732.0 1553.7 677.4 1572.0 663.0"/><path d="M1151.6 866.6C1168.9 862.0 1226.4 845.3 1255.2 839.0C1283.9 832.7 1302.3 830.4 1324.2 828.7C1346.1 826.9 1357.6 826.9 1386.3 828.7C1415.1 830.4 1465.8 829.8 1496.8 839.0C1527.7 848.2 1559.5 876.4 1572.0 883.9"/><path d="M1386.3 828.7L1410.5 783.8"/><path d="M1106.8 663.0C1107.3 674.5 1110.8 711.9 1110.2 732.0C1109.6 752.2 1106.2 766.5 1103.3 783.8C1100.4 801.1 1095.3 821.2 1093.0 835.6C1090.7 849.9 1086.6 855.7 1089.5 870.1C1092.4 884.5 1103.9 904.6 1110.2 921.8C1116.5 939.1 1124.0 953.5 1127.5 973.6C1130.9 993.7 1129.8 1022.5 1130.9 1042.6C1132.1 1062.8 1136.7 1082.9 1134.4 1094.4C1132.1 1105.9 1120.0 1108.8 1117.1 1111.7"/><path d="M1124.0 990.9C1128.6 993.7 1141.3 996.6 1151.6 1008.1C1162.0 1019.6 1175.8 1042.6 1186.2 1059.9C1196.5 1077.2 1204.6 1094.5 1213.8 1111.7C1223.0 1128.9 1236.8 1154.5 1241.4 1163.1"/><path d="M1041.2 966.7C1040.0 979.4 1037.2 1018.5 1034.3 1042.6C1031.4 1066.8 1028.0 1091.6 1023.9 1111.7C1019.9 1131.7 1012.4 1154.5 1010.1 1163.1"/><path d="M772.0 704.4C789.3 701.0 843.3 680.3 875.5 683.7C907.7 687.2 937.7 721.1 965.3 725.1C992.9 729.1 1021.6 707.3 1041.2 707.9C1060.8 708.4 1071.1 725.1 1082.6 728.6C1094.1 732.0 1105.6 728.6 1110.2 728.6"/><path d="M847.9 663.0C853.7 666.5 869.2 674.5 882.4 683.7C895.7 692.9 913.5 710.7 927.3 718.2C941.1 725.7 958.9 726.8 965.3 728.6"/><path d="M965.3 728.6C966.4 737.2 964.1 767.7 972.2 780.3C980.2 793.0 1003.2 796.4 1013.6 804.5C1023.9 812.6 1030.8 824.6 1034.3 828.7"/><path d="M1110.2 718.2C1114.8 716.5 1126.3 717.1 1137.8 707.9C1149.3 698.7 1172.3 670.5 1179.2 663.0"/><path d="M1048.1 842.5C1053.9 836.7 1072.8 817.7 1082.6 808.0C1092.4 798.2 1102.7 787.8 1106.8 783.8"/><path d="M1075.7 870.1C1078.0 867.8 1082.6 860.9 1089.5 856.3C1096.4 851.7 1106.8 842.5 1117.1 842.5C1127.5 842.5 1145.9 854.0 1151.6 856.3"/></g><g stroke="#f29a0c" stroke-width="5.8"><path d="M0.0 72.5C7.5 68.8 25.8 62.1 45.0 50.0C64.2 37.9 103.3 8.3 115.0 0.0"/><path d="M440.0 0.0C434.2 7.1 405.8 31.7 405.0 42.5C404.2 53.3 422.5 57.1 435.0 65.0C447.5 72.9 465.8 80.0 480.0 90.0C494.2 100.0 507.9 113.3 520.0 125.0C532.1 136.7 547.5 147.5 552.5 160.0C557.5 172.5 547.9 190.0 550.0 200.0C552.1 210.0 555.8 213.8 565.0 220.0C574.2 226.2 597.1 230.8 605.0 237.5C612.9 244.2 605.0 246.2 612.5 260.0C620.0 273.8 632.1 305.8 650.0 320.0C667.9 334.2 703.3 336.7 720.0 345.0C736.7 353.3 744.2 363.3 750.0 370.0C755.8 376.7 748.3 379.2 755.0 385.0C761.7 390.8 785.4 396.7 790.0 405.0C794.6 413.3 784.2 426.2 782.5 435.0C780.8 443.8 772.1 456.7 780.0 457.5C787.9 458.3 819.2 434.6 830.0 440.0C840.8 445.4 841.7 471.7 845.0 490.0C848.3 508.3 845.8 529.2 850.0 550.0C854.2 570.8 870.0 596.7 870.0 615.0C870.0 633.3 846.7 646.7 850.0 660.0C853.3 673.3 880.0 684.3 890.0 695.0C900.0 705.7 906.7 719.2 910.0 724.0"/><path d="M910.0 724.0C915.0 729.0 925.0 744.0 940.0 754.0C955.0 764.0 990.0 779.0 1000.0 784.0"/><path d="M0.0 450.0C8.3 456.7 35.0 475.0 50.0 490.0C65.0 505.0 76.7 529.6 90.0 540.0C103.3 550.4 98.3 549.2 130.0 552.5C161.7 555.8 243.3 555.4 280.0 560.0C316.7 564.6 327.5 570.8 350.0 580.0C372.5 589.2 395.0 602.5 415.0 615.0C435.0 627.5 447.5 636.8 470.0 655.0C492.5 673.2 536.7 712.5 550.0 724.0"/><path d="M122.0 724.0L127.5 555.0"/><path d="M122.0 724.0C119.6 740.7 114.5 782.3 107.5 824.0C100.5 865.7 81.2 948.2 80.0 974.0C78.8 999.8 80.0 966.5 100.0 979.0C120.0 991.5 165.0 1022.3 200.0 1049.0C235.0 1075.7 283.3 1118.2 310.0 1139.0C336.7 1159.8 345.0 1151.5 360.0 1174.0C375.0 1196.5 386.7 1244.8 400.0 1274.0C413.3 1303.2 427.5 1320.0 440.0 1349.0C452.5 1378.0 469.2 1431.5 475.0 1448.0"/><path d="M480.0 1449.0C485.8 1458.2 503.3 1489.8 515.0 1504.0C526.7 1518.2 539.2 1520.8 550.0 1534.0C560.8 1547.2 575.0 1574.8 580.0 1583.0"/><path d="M1098.0 0.0C1100.5 4.2 1101.3 14.2 1113.0 25.0C1124.7 35.8 1158.8 44.2 1168.0 65.0C1177.2 85.8 1169.7 123.3 1168.0 150.0C1166.3 176.7 1161.3 200.0 1158.0 225.0C1154.7 250.0 1151.3 277.5 1148.0 300.0C1144.7 322.5 1141.3 339.2 1138.0 360.0C1134.7 380.8 1130.5 410.8 1128.0 425.0C1125.5 439.2 1128.0 439.2 1123.0 445.0C1118.0 450.8 1103.0 450.8 1098.0 460.0C1093.0 469.2 1093.0 480.8 1093.0 500.0C1093.0 519.2 1093.8 554.2 1098.0 575.0C1102.2 595.8 1111.3 610.0 1118.0 625.0C1124.7 640.0 1137.2 648.5 1138.0 665.0C1138.8 681.5 1125.5 714.2 1123.0 724.0"/><path d="M1100.0 0.0L1140.0 37.5"/><path d="M1868.0 0.0C1865.5 8.3 1860.5 38.3 1853.0 50.0C1845.5 61.7 1833.8 65.8 1823.0 70.0C1812.2 74.2 1797.2 71.7 1788.0 75.0C1778.8 78.3 1773.0 81.7 1768.0 90.0C1763.0 98.3 1763.8 113.3 1758.0 125.0C1752.2 136.7 1748.0 147.5 1733.0 160.0C1718.0 172.5 1685.5 185.0 1668.0 200.0C1650.5 215.0 1641.3 231.7 1628.0 250.0C1614.7 268.3 1603.0 293.3 1588.0 310.0C1573.0 326.7 1550.5 336.7 1538.0 350.0C1525.5 363.3 1521.3 377.5 1513.0 390.0C1504.7 402.5 1497.2 415.0 1488.0 425.0C1478.8 435.0 1468.8 436.7 1458.0 450.0C1447.2 463.3 1432.2 493.3 1423.0 505.0C1413.8 516.7 1421.3 510.0 1403.0 520.0C1384.7 530.0 1340.5 549.2 1313.0 565.0C1285.5 580.8 1265.5 597.5 1238.0 615.0C1210.5 632.5 1168.8 651.8 1148.0 670.0C1127.2 688.2 1118.8 715.0 1113.0 724.0"/><path d="M1788.0 0.0L1773.0 75.0"/><path d="M2176.0 350.0C2161.3 355.0 2119.3 365.0 2088.0 380.0C2056.7 395.0 2013.0 425.8 1988.0 440.0C1963.0 454.2 1963.0 454.2 1938.0 465.0C1913.0 475.8 1863.0 495.8 1838.0 505.0C1813.0 514.2 1806.3 515.0 1788.0 520.0C1769.7 525.0 1744.7 530.8 1728.0 535.0C1711.3 539.2 1707.2 537.5 1688.0 545.0C1668.8 552.5 1625.5 574.2 1613.0 580.0"/><path d="M1688.0 545.0C1688.8 551.7 1708.0 575.8 1693.0 585.0C1678.0 594.2 1614.7 590.8 1598.0 600.0C1581.3 609.2 1598.8 625.8 1593.0 640.0C1587.2 654.2 1573.8 671.0 1563.0 685.0C1552.2 699.0 1533.8 717.5 1528.0 724.0"/><path d="M0.0 1181.5C10.8 1178.6 40.0 1176.1 65.0 1164.0C90.0 1151.9 123.3 1125.7 150.0 1109.0C176.7 1092.3 200.0 1070.7 225.0 1064.0C250.0 1057.3 270.8 1073.2 300.0 1069.0C329.2 1064.8 362.5 1048.6 400.0 1039.0C437.5 1029.4 487.5 1019.0 525.0 1011.5C562.5 1004.0 597.5 1000.2 625.0 994.0C652.5 987.8 669.2 981.5 690.0 974.0C710.8 966.5 727.5 957.3 750.0 949.0C772.5 940.7 808.3 927.3 825.0 924.0C841.7 920.7 829.2 925.7 850.0 929.0C870.8 932.3 931.2 939.0 950.0 944.0C968.8 949.0 960.4 956.5 962.5 959.0"/><path d="M670.0 769.0C671.7 777.3 667.5 806.5 680.0 819.0C692.5 831.5 728.3 834.8 745.0 844.0C761.7 853.2 767.5 862.3 780.0 874.0C792.5 885.7 813.3 907.3 820.0 914.0"/><path d="M715.0 829.0C714.2 844.8 715.0 900.7 710.0 924.0C705.0 947.3 689.2 961.5 685.0 969.0"/><path d="M1388.0 824.0C1406.3 826.5 1473.0 831.5 1498.0 839.0C1523.0 846.5 1509.7 861.5 1538.0 869.0C1566.3 876.5 1643.0 883.2 1668.0 884.0C1693.0 884.8 1676.3 872.3 1688.0 874.0C1699.7 875.7 1721.3 885.7 1738.0 894.0C1754.7 902.3 1773.0 914.0 1788.0 924.0C1803.0 934.0 1821.3 949.0 1828.0 954.0"/><path d="M550.0 724.0C556.7 732.3 540.0 761.5 590.0 774.0C640.0 786.5 806.7 794.8 850.0 799.0"/><path d="M1668.0 884.0C1669.7 889.0 1670.5 905.7 1678.0 914.0C1685.5 922.3 1698.0 924.0 1713.0 934.0C1728.0 944.0 1755.5 960.7 1768.0 974.0C1780.5 987.3 1780.5 1002.3 1788.0 1014.0C1795.5 1025.7 1800.5 1030.7 1813.0 1044.0C1825.5 1057.3 1850.5 1078.2 1863.0 1094.0C1875.5 1109.8 1875.5 1125.7 1888.0 1139.0C1900.5 1152.3 1923.8 1160.7 1938.0 1174.0C1952.2 1187.3 1956.3 1202.3 1973.0 1219.0C1989.7 1235.7 2014.7 1254.0 2038.0 1274.0C2061.3 1294.0 2090.0 1324.0 2113.0 1339.0C2136.0 1354.0 2165.5 1359.8 2176.0 1364.0"/><path d="M1828.0 954.0C1833.8 953.2 1848.8 943.2 1863.0 949.0C1877.2 954.8 1896.3 973.2 1913.0 989.0C1929.7 1004.8 1942.2 1028.2 1963.0 1044.0C1983.8 1059.8 2018.8 1070.7 2038.0 1084.0C2057.2 1097.3 2075.5 1109.0 2078.0 1124.0C2080.5 1139.0 2055.5 1157.3 2053.0 1174.0C2050.5 1190.7 2053.0 1207.3 2063.0 1224.0C2073.0 1240.7 2094.2 1257.3 2113.0 1274.0C2131.8 1290.7 2165.5 1315.7 2176.0 1324.0"/><path d="M1198.0 1074.0C1205.5 1086.5 1234.7 1129.8 1243.0 1149.0C1251.3 1168.2 1241.3 1174.0 1248.0 1189.0C1254.7 1204.0 1272.2 1220.7 1283.0 1239.0C1293.8 1257.3 1302.2 1276.5 1313.0 1299.0C1323.8 1321.5 1339.7 1349.2 1348.0 1374.0C1356.3 1398.8 1357.2 1421.3 1363.0 1448.0C1368.8 1474.7 1376.3 1508.8 1383.0 1534.0C1389.7 1559.2 1397.2 1578.8 1403.0 1599.0C1408.8 1619.2 1415.5 1646.1 1418.0 1655.5"/><path d="M888.0 1224.0C903.0 1214.0 950.5 1175.7 978.0 1164.0C1005.5 1152.3 1040.5 1155.7 1053.0 1154.0"/><path d="M835.0 1254.0C816.7 1259.8 749.2 1277.3 725.0 1289.0C700.8 1300.7 695.8 1318.2 690.0 1324.0"/><path d="M0.0 1504.0C8.3 1499.8 33.3 1482.3 50.0 1479.0C66.7 1475.7 91.7 1483.2 100.0 1484.0"/><path d="M925.0 1583.0C929.2 1579.0 937.5 1564.7 950.0 1559.0C962.5 1553.3 985.0 1550.2 1000.0 1549.0C1015.0 1547.8 1033.3 1551.1 1040.0 1551.5"/><path d="M1713.0 1583.0C1721.3 1573.2 1746.3 1540.5 1763.0 1524.0C1779.7 1507.5 1796.3 1491.5 1813.0 1484.0C1829.7 1476.5 1842.2 1484.8 1863.0 1479.0C1883.8 1473.2 1917.2 1452.3 1938.0 1449.0C1958.8 1445.7 1967.2 1453.2 1988.0 1459.0C2008.8 1464.8 2042.2 1485.7 2063.0 1484.0C2083.8 1482.3 2094.2 1463.2 2113.0 1449.0C2131.8 1434.8 2165.5 1407.3 2176.0 1399.0"/><path d="M2176.0 0.0L2168.0 40.0"/><path d="M772.0 780.3C785.2 783.2 822.6 791.3 851.4 797.6C880.1 803.9 911.8 810.8 944.6 818.3C977.3 825.8 1025.1 836.7 1048.1 842.5C1071.1 848.2 1076.9 851.1 1082.6 852.8"/><path d="M772.0 946.0C780.6 942.6 800.8 931.0 823.8 925.3C846.8 919.5 878.4 917.8 910.1 911.5C941.7 905.2 986.0 894.2 1013.6 887.3C1041.2 880.4 1058.5 874.1 1075.7 870.1C1093.0 866.0 1110.2 864.3 1117.1 863.2"/><path d="M965.3 956.4C979.1 958.1 1022.8 963.3 1048.1 966.7C1073.4 970.2 1105.6 975.3 1117.1 977.1"/><path d="M1082.6 808.0C1099.9 805.1 1151.6 798.7 1186.2 790.7C1220.7 782.6 1260.9 780.9 1289.7 759.6C1318.4 738.4 1347.2 679.1 1358.7 663.0"/><path d="M1151.6 856.3C1174.6 845.3 1246.5 805.7 1289.7 790.7C1332.8 775.7 1381.7 773.4 1410.5 766.5C1439.2 759.6 1435.3 766.5 1462.3 749.3C1489.2 732.0 1553.7 677.4 1572.0 663.0"/><path d="M1151.6 866.6C1168.9 862.0 1226.4 845.3 1255.2 839.0C1283.9 832.7 1302.3 830.4 1324.2 828.7C1346.1 826.9 1357.6 826.9 1386.3 828.7C1415.1 830.4 1465.8 829.8 1496.8 839.0C1527.7 848.2 1559.5 876.4 1572.0 883.9"/><path d="M1386.3 828.7L1410.5 783.8"/><path d="M1106.8 663.0C1107.3 674.5 1110.8 711.9 1110.2 732.0C1109.6 752.2 1106.2 766.5 1103.3 783.8C1100.4 801.1 1095.3 821.2 1093.0 835.6C1090.7 849.9 1086.6 855.7 1089.5 870.1C1092.4 884.5 1103.9 904.6 1110.2 921.8C1116.5 939.1 1124.0 953.5 1127.5 973.6C1130.9 993.7 1129.8 1022.5 1130.9 1042.6C1132.1 1062.8 1136.7 1082.9 1134.4 1094.4C1132.1 1105.9 1120.0 1108.8 1117.1 1111.7"/><path d="M1124.0 990.9C1128.6 993.7 1141.3 996.6 1151.6 1008.1C1162.0 1019.6 1175.8 1042.6 1186.2 1059.9C1196.5 1077.2 1204.6 1094.5 1213.8 1111.7C1223.0 1128.9 1236.8 1154.5 1241.4 1163.1"/><path d="M1041.2 966.7C1040.0 979.4 1037.2 1018.5 1034.3 1042.6C1031.4 1066.8 1028.0 1091.6 1023.9 1111.7C1019.9 1131.7 1012.4 1154.5 1010.1 1163.1"/><path d="M772.0 704.4C789.3 701.0 843.3 680.3 875.5 683.7C907.7 687.2 937.7 721.1 965.3 725.1C992.9 729.1 1021.6 707.3 1041.2 707.9C1060.8 708.4 1071.1 725.1 1082.6 728.6C1094.1 732.0 1105.6 728.6 1110.2 728.6"/><path d="M847.9 663.0C853.7 666.5 869.2 674.5 882.4 683.7C895.7 692.9 913.5 710.7 927.3 718.2C941.1 725.7 958.9 726.8 965.3 728.6"/><path d="M965.3 728.6C966.4 737.2 964.1 767.7 972.2 780.3C980.2 793.0 1003.2 796.4 1013.6 804.5C1023.9 812.6 1030.8 824.6 1034.3 828.7"/><path d="M1110.2 718.2C1114.8 716.5 1126.3 717.1 1137.8 707.9C1149.3 698.7 1172.3 670.5 1179.2 663.0"/><path d="M1048.1 842.5C1053.9 836.7 1072.8 817.7 1082.6 808.0C1092.4 798.2 1102.7 787.8 1106.8 783.8"/><path d="M1075.7 870.1C1078.0 867.8 1082.6 860.9 1089.5 856.3C1096.4 851.7 1106.8 842.5 1117.1 842.5C1127.5 842.5 1145.9 854.0 1151.6 856.3"/></g></g>
<g fill="none" stroke-linejoin="round" stroke-linecap="round"><g stroke="#73400a" stroke-width="10.5"><path d="M0.0 645.0C19.2 645.0 77.5 643.8 115.0 645.0C152.5 646.2 194.2 650.4 225.0 652.5C255.8 654.6 268.3 662.5 300.0 657.5C331.7 652.5 381.7 624.6 415.0 622.5C448.3 620.4 473.3 635.8 500.0 645.0C526.7 654.2 550.0 669.8 575.0 677.5C600.0 685.2 622.5 687.6 650.0 691.0C677.5 694.4 715.0 692.5 740.0 698.0C765.0 703.5 790.0 719.7 800.0 724.0"/><path d="M800.0 724.0C806.7 730.7 831.7 752.3 840.0 764.0C848.3 775.7 850.0 771.5 850.0 794.0C850.0 816.5 843.3 869.0 840.0 899.0C836.7 929.0 830.8 953.2 830.0 974.0C829.2 994.8 829.2 1007.3 835.0 1024.0C840.8 1040.7 858.3 1059.0 865.0 1074.0C871.7 1089.0 874.2 1093.2 875.0 1114.0C875.8 1134.8 872.5 1177.3 870.0 1199.0C867.5 1220.7 866.7 1231.5 860.0 1244.0C853.3 1256.5 848.3 1264.0 830.0 1274.0C811.7 1284.0 773.3 1293.2 750.0 1304.0C726.7 1314.8 706.7 1325.7 690.0 1339.0C673.3 1352.3 665.0 1365.8 650.0 1384.0C635.0 1402.2 608.3 1437.3 600.0 1448.0"/><path d="M615.0 1429.0C604.2 1437.3 567.5 1466.5 550.0 1479.0C532.5 1491.5 522.5 1494.8 510.0 1504.0C497.5 1513.2 487.5 1520.8 475.0 1534.0C462.5 1547.2 441.7 1574.8 435.0 1583.0"/><path d="M1025.0 0.0C1033.3 4.2 1055.8 18.8 1075.0 25.0C1094.2 31.2 1119.2 35.0 1140.0 37.5C1160.8 40.0 1181.7 37.1 1200.0 40.0C1218.3 42.9 1235.3 45.0 1250.0 55.0C1264.7 65.0 1281.7 92.5 1288.0 100.0"/><path d="M1023.0 0.0C1032.2 5.0 1058.8 23.3 1078.0 30.0C1097.2 36.7 1118.0 39.6 1138.0 40.0C1158.0 40.4 1179.7 30.0 1198.0 32.5C1216.3 35.0 1233.0 43.8 1248.0 55.0C1263.0 66.2 1279.2 82.5 1288.0 100.0C1296.8 117.5 1300.5 141.7 1300.5 160.0C1300.5 178.3 1292.6 190.8 1288.0 210.0C1283.4 229.2 1275.5 251.7 1273.0 275.0C1270.5 298.3 1270.5 330.8 1273.0 350.0C1275.5 369.2 1278.8 377.5 1288.0 390.0C1297.2 402.5 1315.5 414.2 1328.0 425.0C1340.5 435.8 1350.5 443.3 1363.0 455.0C1375.5 466.7 1393.8 485.0 1403.0 495.0C1412.2 505.0 1413.8 505.8 1418.0 515.0C1422.2 524.2 1423.8 535.0 1428.0 550.0C1432.2 565.0 1440.5 595.8 1443.0 605.0"/><path d="M1443.0 605.0C1454.7 602.9 1486.3 595.4 1513.0 592.5C1539.7 589.6 1582.2 586.2 1603.0 587.5C1623.8 588.8 1623.8 593.8 1638.0 600.0C1652.2 606.2 1671.3 618.3 1688.0 625.0C1704.7 631.7 1717.2 639.2 1738.0 640.0C1758.8 640.8 1788.0 635.8 1813.0 630.0C1838.0 624.2 1858.8 612.1 1888.0 605.0C1917.2 597.9 1954.7 590.8 1988.0 587.5C2021.3 584.2 2056.7 584.6 2088.0 585.0C2119.3 585.4 2161.3 589.2 2176.0 590.0"/><path d="M1443.0 605.0C1438.0 608.3 1422.2 618.3 1413.0 625.0C1403.8 631.7 1389.7 637.5 1388.0 645.0C1386.3 652.5 1400.9 656.8 1403.0 670.0C1405.1 683.2 1400.9 715.0 1400.5 724.0"/><path d="M1398.0 724.0C1396.3 736.5 1390.5 782.3 1388.0 799.0C1385.5 815.7 1387.2 811.5 1383.0 824.0C1378.8 836.5 1368.0 853.2 1363.0 874.0C1358.0 894.8 1357.2 929.0 1353.0 949.0C1348.8 969.0 1344.7 979.8 1338.0 994.0C1331.3 1008.2 1323.0 1020.7 1313.0 1034.0C1303.0 1047.3 1288.8 1059.0 1278.0 1074.0C1267.2 1089.0 1261.3 1109.8 1248.0 1124.0C1234.7 1138.2 1216.3 1149.8 1198.0 1159.0C1179.7 1168.2 1154.7 1177.3 1138.0 1179.0C1121.3 1180.7 1112.2 1173.2 1098.0 1169.0C1083.8 1164.8 1071.3 1159.0 1053.0 1154.0C1034.7 1149.0 1007.2 1143.2 988.0 1139.0C968.8 1134.8 954.7 1135.7 938.0 1129.0C921.3 1122.3 898.5 1104.8 888.0 1099.0C877.5 1093.2 877.2 1094.8 875.0 1094.0"/><path d="M865.0 1074.0C866.7 1065.7 869.2 1039.0 875.0 1024.0C880.8 1009.0 890.0 994.8 900.0 984.0C910.0 973.2 924.6 963.8 935.0 959.0C945.4 954.2 957.9 955.7 962.5 955.0"/><path d="M1078.0 1159.0C1079.7 1165.7 1083.8 1179.8 1088.0 1199.0C1092.2 1218.2 1099.7 1249.0 1103.0 1274.0C1106.3 1299.0 1110.5 1325.7 1108.0 1349.0C1105.5 1372.3 1097.2 1397.5 1088.0 1414.0C1078.8 1430.5 1058.8 1442.3 1053.0 1448.0"/><path d="M1053.0 1449.0C1050.5 1454.8 1043.8 1469.8 1038.0 1484.0C1032.2 1498.2 1022.2 1517.5 1018.0 1534.0C1013.8 1550.5 1013.8 1574.8 1013.0 1583.0"/><path d="M0.0 1546.5C8.3 1547.8 33.3 1553.6 50.0 1554.0C66.7 1554.4 83.3 1547.3 100.0 1549.0C116.7 1550.7 135.8 1558.3 150.0 1564.0C164.2 1569.7 179.2 1579.8 185.0 1583.0"/><path d="M1082.5 1149.0C1083.4 1145.8 1085.4 1135.6 1088.0 1130.0C1090.6 1124.4 1093.2 1119.7 1098.0 1115.5C1102.8 1111.3 1111.5 1109.6 1117.0 1105.0C1122.5 1100.4 1128.7 1090.8 1131.0 1088.0"/></g><g stroke="#955612" stroke-width="7.5"><path d="M0.0 645.0C19.2 645.0 77.5 643.8 115.0 645.0C152.5 646.2 194.2 650.4 225.0 652.5C255.8 654.6 268.3 662.5 300.0 657.5C331.7 652.5 381.7 624.6 415.0 622.5C448.3 620.4 473.3 635.8 500.0 645.0C526.7 654.2 550.0 669.8 575.0 677.5C600.0 685.2 622.5 687.6 650.0 691.0C677.5 694.4 715.0 692.5 740.0 698.0C765.0 703.5 790.0 719.7 800.0 724.0"/><path d="M800.0 724.0C806.7 730.7 831.7 752.3 840.0 764.0C848.3 775.7 850.0 771.5 850.0 794.0C850.0 816.5 843.3 869.0 840.0 899.0C836.7 929.0 830.8 953.2 830.0 974.0C829.2 994.8 829.2 1007.3 835.0 1024.0C840.8 1040.7 858.3 1059.0 865.0 1074.0C871.7 1089.0 874.2 1093.2 875.0 1114.0C875.8 1134.8 872.5 1177.3 870.0 1199.0C867.5 1220.7 866.7 1231.5 860.0 1244.0C853.3 1256.5 848.3 1264.0 830.0 1274.0C811.7 1284.0 773.3 1293.2 750.0 1304.0C726.7 1314.8 706.7 1325.7 690.0 1339.0C673.3 1352.3 665.0 1365.8 650.0 1384.0C635.0 1402.2 608.3 1437.3 600.0 1448.0"/><path d="M615.0 1429.0C604.2 1437.3 567.5 1466.5 550.0 1479.0C532.5 1491.5 522.5 1494.8 510.0 1504.0C497.5 1513.2 487.5 1520.8 475.0 1534.0C462.5 1547.2 441.7 1574.8 435.0 1583.0"/><path d="M1025.0 0.0C1033.3 4.2 1055.8 18.8 1075.0 25.0C1094.2 31.2 1119.2 35.0 1140.0 37.5C1160.8 40.0 1181.7 37.1 1200.0 40.0C1218.3 42.9 1235.3 45.0 1250.0 55.0C1264.7 65.0 1281.7 92.5 1288.0 100.0"/><path d="M1023.0 0.0C1032.2 5.0 1058.8 23.3 1078.0 30.0C1097.2 36.7 1118.0 39.6 1138.0 40.0C1158.0 40.4 1179.7 30.0 1198.0 32.5C1216.3 35.0 1233.0 43.8 1248.0 55.0C1263.0 66.2 1279.2 82.5 1288.0 100.0C1296.8 117.5 1300.5 141.7 1300.5 160.0C1300.5 178.3 1292.6 190.8 1288.0 210.0C1283.4 229.2 1275.5 251.7 1273.0 275.0C1270.5 298.3 1270.5 330.8 1273.0 350.0C1275.5 369.2 1278.8 377.5 1288.0 390.0C1297.2 402.5 1315.5 414.2 1328.0 425.0C1340.5 435.8 1350.5 443.3 1363.0 455.0C1375.5 466.7 1393.8 485.0 1403.0 495.0C1412.2 505.0 1413.8 505.8 1418.0 515.0C1422.2 524.2 1423.8 535.0 1428.0 550.0C1432.2 565.0 1440.5 595.8 1443.0 605.0"/><path d="M1443.0 605.0C1454.7 602.9 1486.3 595.4 1513.0 592.5C1539.7 589.6 1582.2 586.2 1603.0 587.5C1623.8 588.8 1623.8 593.8 1638.0 600.0C1652.2 606.2 1671.3 618.3 1688.0 625.0C1704.7 631.7 1717.2 639.2 1738.0 640.0C1758.8 640.8 1788.0 635.8 1813.0 630.0C1838.0 624.2 1858.8 612.1 1888.0 605.0C1917.2 597.9 1954.7 590.8 1988.0 587.5C2021.3 584.2 2056.7 584.6 2088.0 585.0C2119.3 585.4 2161.3 589.2 2176.0 590.0"/><path d="M1443.0 605.0C1438.0 608.3 1422.2 618.3 1413.0 625.0C1403.8 631.7 1389.7 637.5 1388.0 645.0C1386.3 652.5 1400.9 656.8 1403.0 670.0C1405.1 683.2 1400.9 715.0 1400.5 724.0"/><path d="M1398.0 724.0C1396.3 736.5 1390.5 782.3 1388.0 799.0C1385.5 815.7 1387.2 811.5 1383.0 824.0C1378.8 836.5 1368.0 853.2 1363.0 874.0C1358.0 894.8 1357.2 929.0 1353.0 949.0C1348.8 969.0 1344.7 979.8 1338.0 994.0C1331.3 1008.2 1323.0 1020.7 1313.0 1034.0C1303.0 1047.3 1288.8 1059.0 1278.0 1074.0C1267.2 1089.0 1261.3 1109.8 1248.0 1124.0C1234.7 1138.2 1216.3 1149.8 1198.0 1159.0C1179.7 1168.2 1154.7 1177.3 1138.0 1179.0C1121.3 1180.7 1112.2 1173.2 1098.0 1169.0C1083.8 1164.8 1071.3 1159.0 1053.0 1154.0C1034.7 1149.0 1007.2 1143.2 988.0 1139.0C968.8 1134.8 954.7 1135.7 938.0 1129.0C921.3 1122.3 898.5 1104.8 888.0 1099.0C877.5 1093.2 877.2 1094.8 875.0 1094.0"/><path d="M865.0 1074.0C866.7 1065.7 869.2 1039.0 875.0 1024.0C880.8 1009.0 890.0 994.8 900.0 984.0C910.0 973.2 924.6 963.8 935.0 959.0C945.4 954.2 957.9 955.7 962.5 955.0"/><path d="M1078.0 1159.0C1079.7 1165.7 1083.8 1179.8 1088.0 1199.0C1092.2 1218.2 1099.7 1249.0 1103.0 1274.0C1106.3 1299.0 1110.5 1325.7 1108.0 1349.0C1105.5 1372.3 1097.2 1397.5 1088.0 1414.0C1078.8 1430.5 1058.8 1442.3 1053.0 1448.0"/><path d="M1053.0 1449.0C1050.5 1454.8 1043.8 1469.8 1038.0 1484.0C1032.2 1498.2 1022.2 1517.5 1018.0 1534.0C1013.8 1550.5 1013.8 1574.8 1013.0 1583.0"/><path d="M0.0 1546.5C8.3 1547.8 33.3 1553.6 50.0 1554.0C66.7 1554.4 83.3 1547.3 100.0 1549.0C116.7 1550.7 135.8 1558.3 150.0 1564.0C164.2 1569.7 179.2 1579.8 185.0 1583.0"/><path d="M1082.5 1149.0C1083.4 1145.8 1085.4 1135.6 1088.0 1130.0C1090.6 1124.4 1093.2 1119.7 1098.0 1115.5C1102.8 1111.3 1111.5 1109.6 1117.0 1105.0C1122.5 1100.4 1128.7 1090.8 1131.0 1088.0"/></g></g>
<g fill="none" stroke="#8a500e" stroke-width="4.5"><ellipse cx="1078" cy="1160" rx="11" ry="8.8"/><ellipse cx="1108" cy="1110" rx="7" ry="5.6"/><ellipse cx="841" cy="765" rx="7" ry="5.6"/><ellipse cx="830" cy="907" rx="7" ry="5.6"/><ellipse cx="874" cy="1081" rx="8" ry="6.4"/><ellipse cx="426" cy="623" rx="7" ry="5.6"/><ellipse cx="131" cy="650" rx="6" ry="4.8"/><ellipse cx="1420" cy="601" rx="8" ry="6.4"/><ellipse cx="1606" cy="590" rx="8" ry="6.4"/><ellipse cx="1879" cy="601" rx="7" ry="5.6"/><ellipse cx="1382" cy="812" rx="6" ry="4.8"/><ellipse cx="502" cy="1507" rx="6" ry="4.8"/><ellipse cx="1016" cy="1551" rx="7" ry="5.6"/></g>
<g fill="#8a500e"><circle cx="1078" cy="1160" r="5.0"/></g>
<g font-family="Liberation Sans" fill="#33301a" stroke="#33301a" stroke-width="0.25">
<text x="540" y="5.1" font-size="22.5" textLength="102" lengthAdjust="spacingAndGlyphs">Hollenfels</text>
<text x="725" y="2.8" font-size="19" textLength="97" lengthAdjust="spacingAndGlyphs">Marienthal</text>
<text x="779" y="36.1" font-size="22.5" textLength="153" lengthAdjust="spacingAndGlyphs">Mariendallerhaff</text>
<text x="900" y="60.1" font-size="22.5" textLength="131" lengthAdjust="spacingAndGlyphs">Schwanenthal</text>
<text x="362" y="61.8" font-size="19" textLength="238" lengthAdjust="spacingAndGlyphs">Vieux château d'Ansembourg</text>
<text x="306" y="85.1" font-size="22.5" textLength="86" lengthAdjust="spacingAndGlyphs">Leesbach</text>
<text x="481" y="83.1" font-size="22.5" textLength="49" lengthAdjust="spacingAndGlyphs">Bour</text>
<text x="612" y="80.1" font-size="22.5" textLength="132" lengthAdjust="spacingAndGlyphs">Ansembourg</text>
<text x="40" y="101.1" font-size="22.5" textLength="142" lengthAdjust="spacingAndGlyphs">Septfontaines</text>
<text x="186" y="126.1" font-size="22.5" textLength="114" lengthAdjust="spacingAndGlyphs">Simmerfarm</text>
<text x="1135" y="111.1" font-size="22.5" textLength="140" lengthAdjust="spacingAndGlyphs">Lorentzweiler</text>
<text x="681" y="134.1" font-size="22.5" textLength="82" lengthAdjust="spacingAndGlyphs">Keispelt</text>
<text x="1012" y="153.1" font-size="22.5" textLength="95" lengthAdjust="spacingAndGlyphs">Hunsdorf</text>
<text x="1175" y="150.1" font-size="22.5" textLength="118" lengthAdjust="spacingAndGlyphs">Helmdange</text>
<text x="227" y="159.1" font-size="22.5" textLength="148" lengthAdjust="spacingAndGlyphs">Simmerschmelz</text>
<text x="399" y="159.1" font-size="22.5" textLength="162" lengthAdjust="spacingAndGlyphs">Roodt-sur-Eisch</text>
<text x="555" y="181.1" font-size="22.5" textLength="122" lengthAdjust="spacingAndGlyphs">Dondelange</text>
<text x="615" y="203.1" font-size="22.5" textLength="86" lengthAdjust="spacingAndGlyphs">Meispelt</text>
<text x="798" y="189.1" font-size="22.5" textLength="83" lengthAdjust="spacingAndGlyphs">Direndall</text>
<text x="939" y="192.8" font-size="19" textLength="135" lengthAdjust="spacingAndGlyphs">Im Rothfeldchen</text>
<text x="1145" y="220.1" font-size="22.5" textLength="124" lengthAdjust="spacingAndGlyphs">Bofferdange</text>
<text x="0" y="193.1" font-size="22.5" textLength="12" lengthAdjust="spacingAndGlyphs">d</text>
<text x="972" y="247.1" font-size="22.5" textLength="112" lengthAdjust="spacingAndGlyphs">Mullendorf</text>
<text x="775" y="268.1" font-size="22.5" textLength="84" lengthAdjust="spacingAndGlyphs">Direndall</text>
<text x="997" y="280.1" font-size="22.5" textLength="82" lengthAdjust="spacingAndGlyphs">Steinsel</text>
<text x="496" y="283.1" font-size="22.5" textLength="123" lengthAdjust="spacingAndGlyphs">Quatre-Vents</text>
<text x="431" y="308.1" font-size="22.5" textLength="80" lengthAdjust="spacingAndGlyphs">Nospelt</text>
<text x="96" y="345.1" font-size="22.5" textLength="78" lengthAdjust="spacingAndGlyphs">Koerich</text>
<text x="584" y="366.1" font-size="22.5" textLength="70" lengthAdjust="spacingAndGlyphs">Kehlen</text>
<text x="60" y="376.1" font-size="22.5" textLength="110" lengthAdjust="spacingAndGlyphs">Goeblange</text>
<text x="1181" y="380.1" font-size="22.5" textLength="88" lengthAdjust="spacingAndGlyphs">Heisdorf</text>
<text x="801" y="416.1" font-size="22.5" textLength="90" lengthAdjust="spacingAndGlyphs">Kopstal</text>
<text x="1135" y="409.1" font-size="22.5" textLength="114" lengthAdjust="spacingAndGlyphs">Helmsange</text>
<text x="148" y="444.1" font-size="22.5" textLength="115" lengthAdjust="spacingAndGlyphs">Goetzingen</text>
<text x="323" y="468.1" font-size="22.5" textLength="42" lengthAdjust="spacingAndGlyphs">Olm</text>
<text x="646" y="459.1" font-size="22.5" textLength="104" lengthAdjust="spacingAndGlyphs">Weidendall</text>
<text x="945" y="473.1" font-size="22.5" textLength="116" lengthAdjust="spacingAndGlyphs">Bereldange</text>
<text x="1122" y="474.1" font-size="22.5" textLength="128" lengthAdjust="spacingAndGlyphs">Walferdange</text>
<text x="590" y="489.1" font-size="22.5" textLength="128" lengthAdjust="spacingAndGlyphs">Brameschhaff</text>
<text x="774" y="492.1" font-size="22.5" textLength="61" lengthAdjust="spacingAndGlyphs">Bridel</text>
<text x="358" y="530.8" font-size="19" textLength="90" lengthAdjust="spacingAndGlyphs">Kreuzweg</text>
<text x="142" y="540.1" font-size="22.5" textLength="99" lengthAdjust="spacingAndGlyphs">Wandhaff</text>
<text x="0" y="555.1" font-size="22.5" textLength="21" lengthAdjust="spacingAndGlyphs">en</text>
<text x="0" y="580.1" font-size="22.5" textLength="65" lengthAdjust="spacingAndGlyphs">tingen</text>
<text x="320" y="567.1" font-size="22.5" textLength="89" lengthAdjust="spacingAndGlyphs">Capellen</text>
<text x="568" y="636.8" font-size="19" textLength="78" lengthAdjust="spacingAndGlyphs">Neimillen</text>
<text x="608" y="677.8" font-size="19" textLength="118" lengthAdjust="spacingAndGlyphs">Gaaschtmillen</text>
<text x="1283" y="5.1" font-size="22.5" textLength="67" lengthAdjust="spacingAndGlyphs">Prevent</text>
<text x="1332" y="74.1" font-size="22.5" textLength="106" lengthAdjust="spacingAndGlyphs">Blaschette</text>
<text x="1611" y="68.1" font-size="22.5" textLength="125" lengthAdjust="spacingAndGlyphs">Bourglinster</text>
<text x="1474" y="109.1" font-size="22.5" textLength="105" lengthAdjust="spacingAndGlyphs">Imbringen</text>
<text x="1425" y="185.1" font-size="22.5" textLength="104" lengthAdjust="spacingAndGlyphs">Eisenborn</text>
<text x="1313" y="200.8" font-size="19" textLength="120" lengthAdjust="spacingAndGlyphs">Asselscheuer</text>
<text x="1736" y="185.1" font-size="22.5" textLength="125" lengthAdjust="spacingAndGlyphs">Gonderange</text>
<text x="1883" y="230.1" font-size="22.5" textLength="126" lengthAdjust="spacingAndGlyphs">Rodenbourg</text>
<text x="1775" y="261.1" font-size="22.5" textLength="73" lengthAdjust="spacingAndGlyphs">Ernster</text>
<text x="2160" y="260.1" font-size="22.5" textLength="18" lengthAdjust="spacingAndGlyphs">O</text>
<text x="2158" y="328.1" font-size="22.5" textLength="22" lengthAdjust="spacingAndGlyphs">Bar</text>
<text x="1536" y="403.1" font-size="22.5" textLength="128" lengthAdjust="spacingAndGlyphs">Rameldange</text>
<text x="1913" y="388.1" font-size="22.5" textLength="153" lengthAdjust="spacingAndGlyphs">Roodt-sur-Syre</text>
<text x="1745" y="454.1" font-size="22.5" textLength="112" lengthAdjust="spacingAndGlyphs">Oberanven</text>
<text x="1697" y="481.1" font-size="22.5" textLength="76" lengthAdjust="spacingAndGlyphs">Hostert</text>
<text x="2080" y="474.1" font-size="22.5" textLength="100" lengthAdjust="spacingAndGlyphs">Mensdorf</text>
<text x="1272" y="470.8" font-size="19" textLength="78" lengthAdjust="spacingAndGlyphs">Stafelter</text>
<text x="1427" y="482.8" font-size="19" textLength="82" lengthAdjust="spacingAndGlyphs">Waldhaff</text>
<text x="1489" y="533.1" font-size="22.5" textLength="151" lengthAdjust="spacingAndGlyphs">Senningerberg</text>
<text x="1672" y="521.1" font-size="22.5" textLength="130" lengthAdjust="spacingAndGlyphs">Niederanven</text>
<text x="1734" y="575.1" font-size="22.5" textLength="108" lengthAdjust="spacingAndGlyphs">Senningen</text>
<text x="1885" y="675.1" font-size="22.5" textLength="104" lengthAdjust="spacingAndGlyphs">Munsbach</text>
<text x="1940" y="709.1" font-size="22.5" textLength="117" lengthAdjust="spacingAndGlyphs">Uebersyren</text>
<text x="2135" y="698.8" font-size="19" textLength="45" lengthAdjust="spacingAndGlyphs">Berg</text>
<text x="505" y="755.1" font-size="22.5" textLength="70" lengthAdjust="spacingAndGlyphs">Mamer</text>
<text x="692" y="815.1" font-size="22.5" textLength="88" lengthAdjust="spacingAndGlyphs">Strassen</text>
<text x="11" y="843.1" font-size="22.5" textLength="79" lengthAdjust="spacingAndGlyphs">Garnich</text>
<text x="337" y="851.1" font-size="22.5" textLength="78" lengthAdjust="spacingAndGlyphs">Holzem</text>
<text x="549" y="870.1" font-size="22.5" textLength="101" lengthAdjust="spacingAndGlyphs">Bertrange</text>
<text x="0" y="923.1" font-size="22.5" textLength="77" lengthAdjust="spacingAndGlyphs">Hivange</text>
<text x="500" y="976.8" font-size="19" textLength="151" lengthAdjust="spacingAndGlyphs">Grevels-Barrière</text>
<text x="0" y="991.1" font-size="22.5" textLength="65" lengthAdjust="spacingAndGlyphs">ahlem</text>
<text x="214" y="1057.1" font-size="22.5" textLength="84" lengthAdjust="spacingAndGlyphs">Dippach</text>
<text x="549" y="1088.8" font-size="19" textLength="157" lengthAdjust="spacingAndGlyphs">Leudelange-Gare</text>
<text x="6" y="1116.1" font-size="22.5" textLength="128" lengthAdjust="spacingAndGlyphs">Schouweiler</text>
<text x="1137" y="1141.1" font-size="22.5" textLength="78" lengthAdjust="spacingAndGlyphs">Howald</text>
<text x="713" y="1155.8" font-size="19" textLength="132" lengthAdjust="spacingAndGlyphs">Schléiwenhaff</text>
<text x="185" y="1158.1" font-size="22.5" textLength="116" lengthAdjust="spacingAndGlyphs">Sprinkange</text>
<text x="0" y="1174.1" font-size="22.5" textLength="11" lengthAdjust="spacingAndGlyphs">e</text>
<text x="482" y="1173.1" font-size="22.5" textLength="89" lengthAdjust="spacingAndGlyphs">Roedgen</text>
<text x="364" y="1189.1" font-size="22.5" textLength="141" lengthAdjust="spacingAndGlyphs">Dippach-Gare</text>
<text x="95" y="1200.1" font-size="22.5" textLength="190" lengthAdjust="spacingAndGlyphs">Bettange-sur-Mess</text>
<text x="1126" y="1244.1" font-size="22.5" textLength="94" lengthAdjust="spacingAndGlyphs">Fentange</text>
<text x="627" y="1263.1" font-size="22.5" textLength="119" lengthAdjust="spacingAndGlyphs">Leudelange</text>
<text x="430" y="1322.1" font-size="22.5" textLength="197" lengthAdjust="spacingAndGlyphs">Reckange-sur-Mess</text>
<text x="837" y="1337.8" font-size="19" textLength="135" lengthAdjust="spacingAndGlyphs">Kockelscheuer</text>
<text x="274" y="1340.1" font-size="22.5" textLength="88" lengthAdjust="spacingAndGlyphs">Limpach</text>
<text x="466" y="1398.1" font-size="22.5" textLength="81" lengthAdjust="spacingAndGlyphs">Ehlange</text>
<text x="1102" y="1422.1" font-size="22.5" textLength="80" lengthAdjust="spacingAndGlyphs">Bivange</text>
<text x="284" y="1430.1" font-size="22.5" textLength="90" lengthAdjust="spacingAndGlyphs">Pissange</text>
<text x="8" y="1446.8" font-size="19" textLength="126" lengthAdjust="spacingAndGlyphs">Uerschterhaff</text>
<text x="1247" y="990.8" font-size="19" textLength="90" lengthAdjust="spacingAndGlyphs">Itzegerstee</text>
<text x="1488" y="759.1" font-size="22.5" textLength="62" lengthAdjust="spacingAndGlyphs">Findel</text>
<text x="1557" y="743.8" font-size="19" textLength="165" lengthAdjust="spacingAndGlyphs">Neuhaeusgen Bas</text>
<text x="1735" y="758.1" font-size="22.5" textLength="142" lengthAdjust="spacingAndGlyphs">Neuhaeusgen</text>
<text x="1602" y="780.8" font-size="19" textLength="176" lengthAdjust="spacingAndGlyphs">Neuhaeusgen Haut</text>
<text x="1912" y="787.1" font-size="22.5" textLength="123" lengthAdjust="spacingAndGlyphs">Schuttrange</text>
<text x="1600" y="811.1" font-size="22.5" textLength="115" lengthAdjust="spacingAndGlyphs">Sandweiler</text>
<text x="2093" y="817.8" font-size="19" textLength="87" lengthAdjust="spacingAndGlyphs">Kaffishaf</text>
<text x="1710" y="864.1" font-size="22.5" textLength="97" lengthAdjust="spacingAndGlyphs">Schrassig</text>
<text x="1773" y="889.8" font-size="19" textLength="194" lengthAdjust="spacingAndGlyphs">Schrassig-Kuelebierg</text>
<text x="2122" y="918.1" font-size="22.5" textLength="58" lengthAdjust="spacingAndGlyphs">Canac</text>
<text x="1584" y="956.8" font-size="19" textLength="124" lengthAdjust="spacingAndGlyphs">Kréintgeshaff</text>
<text x="1850" y="968.1" font-size="22.5" textLength="94" lengthAdjust="spacingAndGlyphs">Oetrange</text>
<text x="1672" y="990.8" font-size="19" textLength="101" lengthAdjust="spacingAndGlyphs">Éitermillen</text>
<text x="1948" y="1025.8" font-size="19" textLength="94" lengthAdjust="spacingAndGlyphs">Pleitrange</text>
<text x="1844" y="1072.1" font-size="22.5" textLength="89" lengthAdjust="spacingAndGlyphs">Moutfort</text>
<text x="1293" y="1077.1" font-size="22.5" textLength="44" lengthAdjust="spacingAndGlyphs">Itzig</text>
<text x="2160" y="1077.1" font-size="22.5" textLength="20" lengthAdjust="spacingAndGlyphs">Bi</text>
<text x="1559" y="1103.1" font-size="22.5" textLength="81" lengthAdjust="spacingAndGlyphs">Contern</text>
<text x="1929" y="1154.1" font-size="22.5" textLength="81" lengthAdjust="spacingAndGlyphs">Ersange</text>
<text x="2133" y="1172.8" font-size="19" textLength="47" lengthAdjust="spacingAndGlyphs">Hees</text>
<text x="1297" y="1202.1" font-size="22.5" textLength="122" lengthAdjust="spacingAndGlyphs">Hesperange</text>
<text x="1698" y="1198.1" font-size="22.5" textLength="99" lengthAdjust="spacingAndGlyphs">Medingen</text>
<text x="1848" y="1209.1" font-size="22.5" textLength="97" lengthAdjust="spacingAndGlyphs">Trintange</text>
<text x="1310" y="1229.1" font-size="22.5" textLength="87" lengthAdjust="spacingAndGlyphs">Alzingen</text>
<text x="1670" y="1233.8" font-size="19" textLength="125" lengthAdjust="spacingAndGlyphs">Brichermillen</text>
<text x="1914" y="1245.1" font-size="22.5" textLength="61" lengthAdjust="spacingAndGlyphs">Roedt</text>
<text x="1620" y="1268.1" font-size="22.5" textLength="58" lengthAdjust="spacingAndGlyphs">Syren</text>
<text x="1844" y="1319.1" font-size="22.5" textLength="149" lengthAdjust="spacingAndGlyphs">Waldbredimus</text>
<text x="2082" y="1368.1" font-size="22.5" textLength="52" lengthAdjust="spacingAndGlyphs">Assel</text>
<text x="1810" y="1372.8" font-size="19" textLength="115" lengthAdjust="spacingAndGlyphs">Heedscheier</text>
<text x="1550" y="1382.1" font-size="22.5" textLength="67" lengthAdjust="spacingAndGlyphs">Hassel</text>
<text x="1955" y="1402.1" font-size="22.5" textLength="124" lengthAdjust="spacingAndGlyphs">Gondelange</text>
<text x="2089" y="1411.1" font-size="22.5" textLength="71" lengthAdjust="spacingAndGlyphs">Rolling</text>
<text x="377" y="1484.1" font-size="22.5" textLength="107" lengthAdjust="spacingAndGlyphs">Wickrange</text>
<text x="1049" y="1472.1" font-size="22.5" textLength="91" lengthAdjust="spacingAndGlyphs">Berchem</text>
<text x="1216" y="1462.1" font-size="22.5" textLength="69" lengthAdjust="spacingAndGlyphs">Roeser</text>
<text x="1164" y="1498.1" font-size="22.5" textLength="100" lengthAdjust="spacingAndGlyphs">Crauthem</text>
<text x="552" y="1522.1" font-size="22.5" textLength="109" lengthAdjust="spacingAndGlyphs">Pontpierre</text>
<text x="727" y="1542.1" font-size="22.5" textLength="90" lengthAdjust="spacingAndGlyphs">Abweiler</text>
<text x="154" y="1554.1" font-size="22.5" textLength="139" lengthAdjust="spacingAndGlyphs">Mondercange</text>
<text x="1057" y="1551.1" font-size="22.5" textLength="77" lengthAdjust="spacingAndGlyphs">Livange</text>
<text x="1263" y="1555.8" font-size="19" textLength="125" lengthAdjust="spacingAndGlyphs">Schlammeste</text>
<text x="605" y="1582.1" font-size="22.5" textLength="76" lengthAdjust="spacingAndGlyphs">Bergem</text>
<text x="1510" y="1466.1" font-size="22.5" textLength="144" lengthAdjust="spacingAndGlyphs">Weiler-la-Tour</text>
<text x="1851" y="1459.1" font-size="22.5" textLength="85" lengthAdjust="spacingAndGlyphs">Dalheim</text>
<text x="1985" y="1505.1" font-size="22.5" textLength="102" lengthAdjust="spacingAndGlyphs">Welfrange</text>
<text x="2104" y="1503.8" font-size="19" textLength="76" lengthAdjust="spacingAndGlyphs">Emering</text>
<text x="1684" y="1533.1" font-size="22.5" textLength="76" lengthAdjust="spacingAndGlyphs">Filsdorf</text>
<text x="1134" y="890.6" font-size="46" textLength="258" lengthAdjust="spacingAndGlyphs">Luxembourg</text>
</g>
<g font-family="Liberation Serif" font-style="italic" fill="#4c6aa6" text-anchor="middle">
<text x="901" y="132.9" font-size="21" textLength="68" lengthAdjust="spacingAndGlyphs" transform="rotate(-82 901 126)">Mamer</text>
<text x="1105" y="324.9" font-size="21" textLength="60" lengthAdjust="spacingAndGlyphs" transform="rotate(0 1105 318)">Bassin</text>
<text x="1105" y="349.9" font-size="21" textLength="70" lengthAdjust="spacingAndGlyphs" transform="rotate(0 1105 343)">d'Orage</text>
<text x="1088" y="397.9" font-size="21" textLength="57" lengthAdjust="spacingAndGlyphs" transform="rotate(0 1088 391)">Clerve</text>
<text x="1217" y="956.9" font-size="21" textLength="65" lengthAdjust="spacingAndGlyphs" transform="rotate(0 1217 950)">Ourthe</text>
<text x="1280" y="1225.9" font-size="21" textLength="62" lengthAdjust="spacingAndGlyphs" transform="rotate(80 1280 1219)">Alzette</text>
<text x="2005" y="543.9" font-size="21" textLength="110" lengthAdjust="spacingAndGlyphs" transform="rotate(-26 2005 537)">Mulhenbach</text>
</g>
<g font-family="Liberation Sans">
<rect x="618" y="20" width="47" height="17" fill="#fcd996" stroke="#e6a766" stroke-width="1.2"/>
<text x="641.5" y="33.3" font-size="13.3" fill="#2e2812" text-anchor="middle" textLength="38.5" lengthAdjust="spacingAndGlyphs">D256D</text>
<rect x="12" y="48" width="31" height="22" fill="#f5a00a" stroke="#d98a12" stroke-width="1.2"/>
<text x="27.5" y="65.2" font-size="17.2" fill="#2e2208" text-anchor="middle" textLength="25.4" lengthAdjust="spacingAndGlyphs">N 8</text>
<rect x="84" y="46" width="51" height="21" fill="#fcd996" stroke="#e6a766" stroke-width="1.2"/>
<text x="109.5" y="62.4" font-size="16.4" fill="#2e2812" text-anchor="middle" textLength="41.8" lengthAdjust="spacingAndGlyphs">CR 107</text>
<rect x="295" y="202" width="52" height="20" fill="#fcd996" stroke="#e6a766" stroke-width="1.2"/>
<text x="321.0" y="217.6" font-size="15.6" fill="#2e2812" text-anchor="middle" textLength="42.6" lengthAdjust="spacingAndGlyphs">CR 104</text>
<rect x="405" y="192" width="57" height="19" fill="#fcd996" stroke="#e6a766" stroke-width="1.2"/>
<text x="433.5" y="206.8" font-size="14.8" fill="#2e2812" text-anchor="middle" textLength="46.7" lengthAdjust="spacingAndGlyphs">CR 105A</text>
<rect x="217" y="268" width="51" height="21" fill="#fcd996" stroke="#e6a766" stroke-width="1.2"/>
<text x="242.5" y="284.4" font-size="16.4" fill="#2e2812" text-anchor="middle" textLength="41.8" lengthAdjust="spacingAndGlyphs">CR 189</text>
<rect x="702" y="272" width="48" height="19" fill="#fcd996" stroke="#e6a766" stroke-width="1.2"/>
<text x="726.0" y="286.8" font-size="14.8" fill="#2e2812" text-anchor="middle" textLength="39.4" lengthAdjust="spacingAndGlyphs">CR 142</text>
<rect x="477" y="334" width="60" height="21" fill="#fcd996" stroke="#e6a766" stroke-width="1.2"/>
<text x="507.0" y="350.4" font-size="16.4" fill="#2e2812" text-anchor="middle" textLength="49.2" lengthAdjust="spacingAndGlyphs">CR 104A</text>
<rect x="360" y="346" width="60" height="20" fill="#fcd996" stroke="#e6a766" stroke-width="1.2"/>
<text x="390.0" y="361.6" font-size="15.6" fill="#2e2812" text-anchor="middle" textLength="49.2" lengthAdjust="spacingAndGlyphs">CR 103A</text>
<rect x="944" y="421" width="37" height="18" fill="#fcd996" stroke="#e6a766" stroke-width="1.2"/>
<text x="962.5" y="435.1" font-size="14.0" fill="#2e2812" text-anchor="middle" textLength="30.3" lengthAdjust="spacingAndGlyphs">N693</text>
<rect x="218" y="390" width="51" height="20" fill="#fcd996" stroke="#e6a766" stroke-width="1.2"/>
<text x="243.5" y="405.6" font-size="15.6" fill="#2e2812" text-anchor="middle" textLength="41.8" lengthAdjust="spacingAndGlyphs">CR 109</text>
<rect x="526" y="484" width="50" height="20" fill="#fcd996" stroke="#e6a766" stroke-width="1.2"/>
<text x="551.0" y="499.6" font-size="15.6" fill="#2e2812" text-anchor="middle" textLength="41.0" lengthAdjust="spacingAndGlyphs">CR 102</text>
<rect x="1107" y="486" width="50" height="20" fill="#fcd996" stroke="#e6a766" stroke-width="1.2"/>
<text x="1132.0" y="501.6" font-size="15.6" fill="#2e2812" text-anchor="middle" textLength="41.0" lengthAdjust="spacingAndGlyphs">CR 233</text>
<rect x="255" y="550" width="29" height="20" fill="#f5a00a" stroke="#d98a12" stroke-width="1.2"/>
<text x="269.5" y="565.6" font-size="15.6" fill="#2e2208" text-anchor="middle" textLength="23.8" lengthAdjust="spacingAndGlyphs">N 6</text>
<rect x="727" y="606" width="51" height="20" fill="#fcd996" stroke="#e6a766" stroke-width="1.2"/>
<text x="752.5" y="621.6" font-size="15.6" fill="#2e2812" text-anchor="middle" textLength="41.8" lengthAdjust="spacingAndGlyphs">CR 181</text>
<rect x="945" y="601" width="51" height="20" fill="#fcd996" stroke="#e6a766" stroke-width="1.2"/>
<text x="970.5" y="616.6" font-size="15.6" fill="#2e2812" text-anchor="middle" textLength="41.8" lengthAdjust="spacingAndGlyphs">CR 215</text>
<rect x="972" y="683" width="55" height="20" fill="#fcd996" stroke="#e6a766" stroke-width="1.2"/>
<text x="999.5" y="698.6" font-size="15.6" fill="#2e2812" text-anchor="middle" textLength="45.1" lengthAdjust="spacingAndGlyphs">CR 215A</text>
<rect x="1200" y="673" width="50" height="20" fill="#fcd996" stroke="#e6a766" stroke-width="1.2"/>
<text x="1225.0" y="688.6" font-size="15.6" fill="#2e2812" text-anchor="middle" textLength="41.0" lengthAdjust="spacingAndGlyphs">CR 232</text>
<rect x="231" y="716" width="49" height="20" fill="#fcd996" stroke="#e6a766" stroke-width="1.2"/>
<text x="255.5" y="731.6" font-size="15.6" fill="#2e2812" text-anchor="middle" textLength="40.2" lengthAdjust="spacingAndGlyphs">CR 103</text>
<rect x="1920" y="32" width="50" height="19" fill="#fcd996" stroke="#e6a766" stroke-width="1.2"/>
<text x="1945.0" y="46.8" font-size="14.8" fill="#2e2812" text-anchor="middle" textLength="41.0" lengthAdjust="spacingAndGlyphs">CR 132</text>
<rect x="1345" y="155" width="50" height="19" fill="#fcd996" stroke="#e6a766" stroke-width="1.2"/>
<text x="1370.0" y="169.8" font-size="14.8" fill="#2e2812" text-anchor="middle" textLength="41.0" lengthAdjust="spacingAndGlyphs">CR 124</text>
<rect x="2104" y="201" width="49" height="19" fill="#fcd996" stroke="#e6a766" stroke-width="1.2"/>
<text x="2128.5" y="215.8" font-size="14.8" fill="#2e2812" text-anchor="middle" textLength="40.2" lengthAdjust="spacingAndGlyphs">CR 187</text>
<rect x="1362" y="315" width="50" height="19" fill="#fcd996" stroke="#e6a766" stroke-width="1.2"/>
<text x="1387.0" y="329.8" font-size="14.8" fill="#2e2812" text-anchor="middle" textLength="41.0" lengthAdjust="spacingAndGlyphs">CR 119</text>
<rect x="1479" y="400" width="37" height="20" fill="#f5a00a" stroke="#d98a12" stroke-width="1.2"/>
<text x="1497.5" y="415.6" font-size="15.6" fill="#2e2208" text-anchor="middle" textLength="30.3" lengthAdjust="spacingAndGlyphs">N 11</text>
<rect x="1540" y="424" width="51" height="20" fill="#fcd996" stroke="#e6a766" stroke-width="1.2"/>
<text x="1565.5" y="439.6" font-size="15.6" fill="#2e2812" text-anchor="middle" textLength="41.8" lengthAdjust="spacingAndGlyphs">CR 126</text>
<rect x="1948" y="449" width="30" height="20" fill="#f5a00a" stroke="#d98a12" stroke-width="1.2"/>
<text x="1963.0" y="464.6" font-size="15.6" fill="#2e2208" text-anchor="middle" textLength="24.6" lengthAdjust="spacingAndGlyphs">N 1</text>
<rect x="1669" y="555" width="51" height="19" fill="#fcd996" stroke="#e6a766" stroke-width="1.2"/>
<text x="1694.5" y="569.8" font-size="14.8" fill="#2e2812" text-anchor="middle" textLength="41.8" lengthAdjust="spacingAndGlyphs">CR 127</text>
<rect x="1654" y="592" width="56" height="19" fill="#fcd996" stroke="#e6a766" stroke-width="1.2"/>
<text x="1682.0" y="606.8" font-size="14.8" fill="#2e2812" text-anchor="middle" textLength="45.9" lengthAdjust="spacingAndGlyphs">CR 126B</text>
<rect x="1723" y="667" width="22" height="18" fill="#fcd996" stroke="#e6a766" stroke-width="1.2"/>
<text x="1734.0" y="681.1" font-size="14.0" fill="#2e2812" text-anchor="middle" textLength="18.0" lengthAdjust="spacingAndGlyphs">A 1</text>
<rect x="2020" y="661" width="51" height="19" fill="#fcd996" stroke="#e6a766" stroke-width="1.2"/>
<text x="2045.5" y="675.8" font-size="14.8" fill="#2e2812" text-anchor="middle" textLength="41.8" lengthAdjust="spacingAndGlyphs">CR 185</text>
<rect x="1247" y="744" width="38" height="18" fill="#f5a00a" stroke="#d98a12" stroke-width="1.2"/>
<text x="1266.0" y="758.1" font-size="14.0" fill="#2e2208" text-anchor="middle" textLength="31.2" lengthAdjust="spacingAndGlyphs">N 51</text>
<rect x="1152" y="756" width="35" height="20" fill="#fcd996" stroke="#e6a766" stroke-width="1.2"/>
<text x="1169.5" y="771.6" font-size="15.6" fill="#2e2812" text-anchor="middle" textLength="28.7" lengthAdjust="spacingAndGlyphs">FK 1</text>
<rect x="8" y="786" width="48" height="19" fill="#fcd996" stroke="#e6a766" stroke-width="1.2"/>
<text x="32.0" y="800.8" font-size="14.8" fill="#2e2812" text-anchor="middle" textLength="39.4" lengthAdjust="spacingAndGlyphs">CR 169</text>
<rect x="1255" y="821" width="37" height="18" fill="#f5a00a" stroke="#d98a12" stroke-width="1.2"/>
<text x="1273.5" y="835.1" font-size="14.0" fill="#2e2208" text-anchor="middle" textLength="30.3" lengthAdjust="spacingAndGlyphs">N 1A</text>
<rect x="739" y="834" width="37" height="19" fill="#f5a00a" stroke="#d98a12" stroke-width="1.2"/>
<text x="757.5" y="848.8" font-size="14.8" fill="#2e2208" text-anchor="middle" textLength="30.3" lengthAdjust="spacingAndGlyphs">N 34</text>
<rect x="857" y="883" width="50" height="20" fill="#fcd996" stroke="#e6a766" stroke-width="1.2"/>
<text x="882.0" y="898.6" font-size="15.6" fill="#2e2812" text-anchor="middle" textLength="41.0" lengthAdjust="spacingAndGlyphs">CR 230</text>
<rect x="690" y="907" width="37" height="20" fill="#f5a00a" stroke="#d98a12" stroke-width="1.2"/>
<text x="708.5" y="922.6" font-size="15.6" fill="#2e2208" text-anchor="middle" textLength="30.3" lengthAdjust="spacingAndGlyphs">N 35</text>
<rect x="1209" y="903" width="51" height="20" fill="#fcd996" stroke="#e6a766" stroke-width="1.2"/>
<text x="1234.5" y="918.6" font-size="15.6" fill="#2e2812" text-anchor="middle" textLength="41.8" lengthAdjust="spacingAndGlyphs">CR 225</text>
<rect x="1052" y="996" width="33" height="19" fill="#fcd996" stroke="#e6a766" stroke-width="1.2"/>
<text x="1068.5" y="1010.8" font-size="14.8" fill="#2e2812" text-anchor="middle" textLength="27.1" lengthAdjust="spacingAndGlyphs">N 53</text>
<rect x="510" y="1001" width="30" height="21" fill="#f5a00a" stroke="#d98a12" stroke-width="1.2"/>
<text x="525.0" y="1017.4" font-size="16.4" fill="#2e2208" text-anchor="middle" textLength="24.6" lengthAdjust="spacingAndGlyphs">N 5</text>
<rect x="52" y="1131" width="60" height="20" fill="#fcd996" stroke="#e6a766" stroke-width="1.2"/>
<text x="82.0" y="1146.6" font-size="15.6" fill="#2e2812" text-anchor="middle" textLength="49.2" lengthAdjust="spacingAndGlyphs">CR 106A</text>
<rect x="796" y="1191" width="51" height="20" fill="#fcd996" stroke="#e6a766" stroke-width="1.2"/>
<text x="821.5" y="1206.6" font-size="15.6" fill="#2e2812" text-anchor="middle" textLength="41.8" lengthAdjust="spacingAndGlyphs">CR 179</text>
<rect x="517" y="1224" width="52" height="20" fill="#fcd996" stroke="#e6a766" stroke-width="1.2"/>
<text x="543.0" y="1239.6" font-size="15.6" fill="#2e2812" text-anchor="middle" textLength="42.6" lengthAdjust="spacingAndGlyphs">CR 178</text>
<rect x="1110" y="1369" width="51" height="20" fill="#fcd996" stroke="#e6a766" stroke-width="1.2"/>
<text x="1135.5" y="1384.6" font-size="15.6" fill="#2e2812" text-anchor="middle" textLength="41.8" lengthAdjust="spacingAndGlyphs">CR 158</text>
<rect x="742" y="1380" width="51" height="20" fill="#fcd996" stroke="#e6a766" stroke-width="1.2"/>
<text x="767.5" y="1395.6" font-size="15.6" fill="#2e2812" text-anchor="middle" textLength="41.8" lengthAdjust="spacingAndGlyphs">CR 163</text>
<rect x="931" y="1429" width="50" height="19" fill="#fcd996" stroke="#e6a766" stroke-width="1.2"/>
<text x="956.0" y="1443.8" font-size="14.8" fill="#2e2812" text-anchor="middle" textLength="41.0" lengthAdjust="spacingAndGlyphs">CR 186</text>
<rect x="1333" y="716" width="60" height="20" fill="#fcd996" stroke="#e6a766" stroke-width="1.2"/>
<text x="1363.0" y="731.6" font-size="15.6" fill="#2e2812" text-anchor="middle" textLength="49.2" lengthAdjust="spacingAndGlyphs">CR 232D</text>
<rect x="1405" y="756" width="37" height="20" fill="#f5a00a" stroke="#d98a12" stroke-width="1.2"/>
<text x="1423.5" y="771.6" font-size="15.6" fill="#2e2208" text-anchor="middle" textLength="30.3" lengthAdjust="spacingAndGlyphs">N 1C</text>
<rect x="1744" y="801" width="51" height="20" fill="#fcd996" stroke="#e6a766" stroke-width="1.2"/>
<text x="1769.5" y="816.6" font-size="15.6" fill="#2e2812" text-anchor="middle" textLength="41.8" lengthAdjust="spacingAndGlyphs">CR 171</text>
<rect x="2117" y="849" width="50" height="20" fill="#fcd996" stroke="#e6a766" stroke-width="1.2"/>
<text x="2142.0" y="864.6" font-size="15.6" fill="#2e2812" text-anchor="middle" textLength="41.0" lengthAdjust="spacingAndGlyphs">CR 188</text>
<rect x="1514" y="904" width="51" height="20" fill="#fcd996" stroke="#e6a766" stroke-width="1.2"/>
<text x="1539.5" y="919.6" font-size="15.6" fill="#2e2812" text-anchor="middle" textLength="41.8" lengthAdjust="spacingAndGlyphs">CR 234</text>
<rect x="1964" y="911" width="51" height="20" fill="#fcd996" stroke="#e6a766" stroke-width="1.2"/>
<text x="1989.5" y="926.6" font-size="15.6" fill="#2e2812" text-anchor="middle" textLength="41.8" lengthAdjust="spacingAndGlyphs">CR 144</text>
<rect x="1367" y="981" width="51" height="20" fill="#fcd996" stroke="#e6a766" stroke-width="1.2"/>
<text x="1392.5" y="996.6" font-size="15.6" fill="#2e2812" text-anchor="middle" textLength="41.8" lengthAdjust="spacingAndGlyphs">CR 159</text>
<rect x="1964" y="1051" width="38" height="20" fill="#f5a00a" stroke="#d98a12" stroke-width="1.2"/>
<text x="1983.0" y="1066.6" font-size="15.6" fill="#2e2208" text-anchor="middle" textLength="31.2" lengthAdjust="spacingAndGlyphs">N 28</text>
<rect x="2093" y="1081" width="51" height="20" fill="#fcd996" stroke="#e6a766" stroke-width="1.2"/>
<text x="2118.5" y="1096.6" font-size="15.6" fill="#2e2812" text-anchor="middle" textLength="41.8" lengthAdjust="spacingAndGlyphs">CR 147</text>
<rect x="1603" y="1141" width="51" height="20" fill="#fcd996" stroke="#e6a766" stroke-width="1.2"/>
<text x="1628.5" y="1156.6" font-size="15.6" fill="#2e2812" text-anchor="middle" textLength="41.8" lengthAdjust="spacingAndGlyphs">CR 226</text>
<rect x="2033" y="1261" width="27" height="20" fill="#f5a00a" stroke="#d98a12" stroke-width="1.2"/>
<text x="2046.5" y="1276.6" font-size="15.6" fill="#2e2208" text-anchor="middle" textLength="22.1" lengthAdjust="spacingAndGlyphs">N 2</text>
<rect x="1659" y="1301" width="51" height="20" fill="#fcd996" stroke="#e6a766" stroke-width="1.2"/>
<text x="1684.5" y="1316.6" font-size="15.6" fill="#2e2812" text-anchor="middle" textLength="41.8" lengthAdjust="spacingAndGlyphs">CR 154</text>
<rect x="1758" y="1397" width="51" height="20" fill="#fcd996" stroke="#e6a766" stroke-width="1.2"/>
<text x="1783.5" y="1412.6" font-size="15.6" fill="#2e2812" text-anchor="middle" textLength="41.8" lengthAdjust="spacingAndGlyphs">CR 153</text>
<rect x="1697" y="1458" width="51" height="20" fill="#fcd996" stroke="#e6a766" stroke-width="1.2"/>
<text x="1722.5" y="1473.6" font-size="15.6" fill="#2e2812" text-anchor="middle" textLength="41.8" lengthAdjust="spacingAndGlyphs">CR 162</text>
<rect x="1714" y="1555" width="36" height="20" fill="#f5a00a" stroke="#d98a12" stroke-width="1.2"/>
<text x="1732.0" y="1570.6" font-size="15.6" fill="#2e2208" text-anchor="middle" textLength="29.5" lengthAdjust="spacingAndGlyphs">N 13</text>
<rect x="2110" y="1550" width="50" height="19" fill="#fcd996" stroke="#e6a766" stroke-width="1.2"/>
<text x="2135.0" y="1564.8" font-size="14.8" fill="#2e2812" text-anchor="middle" textLength="41.0" lengthAdjust="spacingAndGlyphs">CR 149</text>
<rect x="1935" y="1564" width="50" height="19" fill="#fcd996" stroke="#e6a766" stroke-width="1.2"/>
<text x="1960.0" y="1578.8" font-size="14.8" fill="#2e2812" text-anchor="middle" textLength="41.0" lengthAdjust="spacingAndGlyphs">CR 148</text>
</g>
<rect width="2176" height="1583" filter="url(#paper)" opacity="0.38"/>
</svg><!-- CATALOG -->
<div class="a" style="left:2888px;top:290px;width:656px;height:1658px;background:#333;border:1px solid #3a3a3a"></div>
<div class="a" style="left:2889px;top:291px;width:653px;height:8px;background:#2e8ff0"></div>
<div class="t" style="left:2901px;top:305px;font-size:28.4px;color:#3a9ef0">Catalog</div>
<svg class="a" style="left:3450px;top:300px" width="95" height="32">
 <path d="M8 15 h15 l-7.5 8 z" fill="#ccc"/>
 <path d="M38 7 h12 M40 7 v12 h8 v-12 M36 19 h16 M44 19 v8" fill="none" stroke="#ccc" stroke-width="2.2"/>
 <path d="M64 7 L80 23 M80 7 L64 23" stroke="#ddd" stroke-width="2.5"/>
</svg>
<div class="t" style="left:2902px;top:372px;font-size:23.2px;color:#d8d8d8">Project</div>
<div class="t" style="left:2994px;top:372px;font-size:22.6px;color:#e8e8e8;font-weight:bold">Portal</div>
<div class="t" style="left:3078px;top:372px;font-size:22.8px;color:#d8d8d8">Favorites</div>
<div class="a" style="left:2993px;top:402px;width:66px;height:4px;background:#2d8ce6"></div>
<svg class="a" style="left:3498px;top:370px" width="32" height="32"><rect x="2" y="3" width="26" height="5" rx="2" fill="#bbb"/><rect x="2" y="13" width="26" height="5" rx="2" fill="#bbb"/><rect x="2" y="23" width="26" height="5" rx="2" fill="#bbb"/></svg>
<svg class="a" style="left:2900px;top:418px" width="390" height="60">
 <defs><path id="cl" d="M6 27 a9 9 0 0 1 7 -13 a13 13 0 0 1 24 -2 a9 9 0 0 1 8 15 z"/></defs>
 <g transform="translate(2,4)"><use href="#cl" fill="#1e4a78" stroke="#3a9ef0" stroke-width="2"/><circle cx="23" cy="22" r="5" fill="#333" stroke="#4cb848" stroke-width="2"/><path d="M16 47 v-14 a7 6 0 0 1 14 0 v14 z" fill="#2a6a3a" stroke="#4cb848" stroke-width="2"/></g>
 <g transform="translate(65,4)"><use href="#cl" fill="#1e4a78" stroke="#3a9ef0" stroke-width="2"/><path d="M23 19 l5 11 h11 l-9 7 l4 11 l-11 -7 l-11 7 l4 -11 l-9 -7 h11 z" fill="#f0d040"/></g>
 <g transform="translate(128,4)"><use href="#cl" fill="#1e4a78" stroke="#3a9ef0" stroke-width="2"/><path d="M17 38 v-14 h11 v14 z" fill="#2a6a3a" stroke="#4cb848" stroke-width="1.5"/><path d="M6 47 v-10 h9 v10 z" fill="#1e4a78" stroke="#3a9ef0" stroke-width="1.5"/><path d="M28 47 v-10 h9 v10 z" fill="#6a4a20" stroke="#f0a040" stroke-width="1.5"/></g>
 <g transform="translate(191,4)"><use href="#cl" fill="#1e4a78" stroke="#3a9ef0" stroke-width="2"/><path d="M8 48 v-20 h10 v-6 h14 v26 z" fill="#2a6a3a" stroke="#4cb848" stroke-width="2"/></g>
 <g transform="translate(254,4)"><use href="#cl" fill="#1e4a78" stroke="#3a9ef0" stroke-width="2"/></g>
 <rect x="314" y="3" width="63" height="51" fill="#5a5a5a" stroke="#bbb" stroke-width="2"/>
 <g transform="translate(322,4)"><use href="#cl" fill="#1e4a78" stroke="#3a9ef0" stroke-width="2"/><path d="M14 20 h18 v26 h-18 z" fill="#2a7a3a" stroke="#4cb848" stroke-width="2"/></g>
</svg>
<div class="t" style="left:2900px;top:491px;font-size:21.5px;color:#e0e0e0;font-weight:bold">Living Atlas</div>
<svg class="a" style="left:2897px;top:538px" width="40" height="40"><circle cx="19" cy="19" r="16" fill="none" stroke="#aaa" stroke-width="2"/><path d="M27 19 h-15 M18 12 L11 19 L18 26" fill="none" stroke="#ccc" stroke-width="2.5"/></svg>
<div class="a" style="left:2942px;top:534px;width:122px;height:44px;background:#1e1e1e;border:2px solid #555"></div>
<div class="a" style="left:2976px;top:536px;width:2px;height:40px;background:#555"></div>
<div class="a" style="left:3020px;top:536px;width:2px;height:40px;background:#555"></div>
<svg class="a" style="left:2944px;top:536px" width="118" height="40">
 <path d="M6 20 L17 10 L28 20 M9 18 v14 h16 v-14" fill="none" stroke="#bbb" stroke-width="1.8"/><rect x="14" y="25" width="5" height="7" fill="#4cb848"/>
 <path d="M45 8 v24 M40 26 L45 32 L50 26 M54 14 h6 M54 22 h9 M54 30 h13" fill="none" stroke="#ccc" stroke-width="2"/>
 <path d="M80 10 h28 l-10 12 v12 h-8 v-12 z" fill="none" stroke="#ccc" stroke-width="2"/>
</svg>
<div class="a" style="left:3063px;top:534px;width:471px;height:44px;background:#1e1e1e;border:2px solid #2d7fd6"></div>
<div class="t" style="left:3075px;top:545px;font-size:21.7px;color:#e6e6e6">John Nelson Texture Tiles</div>
<svg class="a" style="left:3474px;top:548px" width="52" height="20"><path d="M3 3 L16 16 M16 3 L3 16" stroke="#ddd" stroke-width="2.5"/><path d="M38 7 h10 l-5 5 z" fill="#ccc"/></svg>
<div class="t" style="left:2919px;top:594px;font-size:20.2px;color:#6e6e6e;font-style:italic">Search Results</div>
<svg class="a" style="left:2917px;top:628px" width="34" height="310">
 <defs><g id="ti"><path d="M2 7 l5 -2 h22 l2 22 l-5 2 h-24 z" fill="#d8c030"/><rect x="7" y="5" width="19" height="17" fill="#2a7a3a" stroke="#ccc" stroke-width="1"/><rect x="10" y="8" width="6" height="5" fill="none" stroke="#ddd" stroke-width="1"/><rect x="15" y="12" width="6" height="5" fill="none" stroke="#ddd" stroke-width="1"/></g></defs>
 <use href="#ti" y="0"/><use href="#ti" y="47"/><use href="#ti" y="94"/><use href="#ti" y="142"/><use href="#ti" y="189"/>
 <g transform="translate(0,236)"><path d="M2 7 l5 -2 h22 l2 22 l-5 2 h-24 z" fill="#d8c030"/><rect x="7" y="5" width="19" height="17" fill="#2a7a3a"/><rect x="8" y="6" width="7" height="7" fill="#2f86d0"/><rect x="16" y="14" width="7" height="7" fill="#2f86d0"/></g>
 <g transform="translate(1,284)"><rect x="1" y="1" width="29" height="29" fill="#333" stroke="#aaa" stroke-width="2"/><rect x="4" y="4" width="23" height="23" fill="#3a9a4a"/><path d="M4 27 L10 19 L14 20 L18 10 L27 5 L27 19 L20 25 z" fill="#2f86d0"/></g>
</svg>
<div class="t" style="left:2964px;top:633px;font-size:21.7px;color:#dcdcdc">Watercolor Paper Texture</div>
<div class="t" style="left:2964px;top:680px;font-size:21.7px;color:#dcdcdc">Folded Paper Texture</div>
<div class="t" style="left:2964px;top:727px;font-size:21.7px;color:#dcdcdc">Crinkled Paper Texture</div>
<div class="t" style="left:2964px;top:775px;font-size:21.7px;color:#dcdcdc">Poster Paper Texture</div>
<div class="t" style="left:2964px;top:822px;font-size:21.7px;color:#dcdcdc">Parchment Texture</div>
<div class="t" style="left:2964px;top:870px;font-size:21.7px;color:#dcdcdc">Vintage Shaded Relief</div>
<div class="t" style="left:2964px;top:917px;font-size:21.7px;color:#dcdcdc">Vintage Shaded Relief Map</div>
<div class="t" style="left:3130px;top:1911px;font-size:21px;color:#666">Find more items...</div>
<!-- bottom tabs -->
<div class="a" style="left:2888px;top:1947px;width:656px;height:41px;background:#252525"></div>
<div class="a" style="left:2889px;top:1946px;width:97px;height:42px;background:#333"></div>
<div class="t" style="left:2900px;top:1958px;font-size:21.5px;color:#3a9ef0">Catalog</div>
<div class="t" style="left:2998px;top:1958px;font-size:22.4px;color:#dcdcdc">Symbology</div>
<div class="t" style="left:3132px;top:1958px;font-size:20.3px;color:#dcdcdc">Label Class</div>
</body></html>
